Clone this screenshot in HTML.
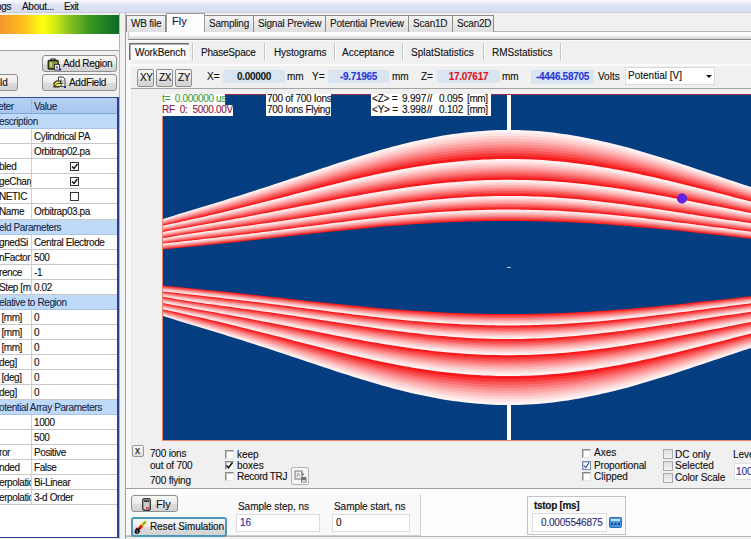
<!DOCTYPE html>
<html><head><meta charset="utf-8">
<style>
*{margin:0;padding:0;box-sizing:border-box}
html,body{width:751px;height:539px;overflow:hidden;background:#f0f0f0}
body{position:relative;font-family:"Liberation Sans",sans-serif;font-size:10px;color:#111;-webkit-text-stroke:0.12px}
.a{position:absolute}
.t{position:absolute;white-space:pre;line-height:12px}
.btn{position:absolute;border:1px solid #8e8f8f;border-radius:3px;background:linear-gradient(#f6f6f6 0%,#ebebeb 50%,#dddddd 51%,#d2d2d2 100%)}
.cb{position:absolute;width:9px;height:9px;border:1px solid #8a8a8a;border-right-color:#e6e6e6;border-bottom-color:#e6e6e6;background:#fff;box-shadow:inset 1px 1px 0 #c8c8c8}
.cbg{position:absolute;width:10px;height:10px;border:1px solid #a9a9a9;background:linear-gradient(#dedede,#f4f4f4)}
.fld{position:absolute;background:#d9e5f1;font-weight:bold;text-align:center;letter-spacing:-0.3px}
.tab{position:absolute;white-space:nowrap;top:15px;height:17px;border:1px solid #8c8c8c;border-bottom:none;background:linear-gradient(#f4f4f4,#dedede);padding-left:4px;line-height:15px;font-size:10px;letter-spacing:-0.2px;color:#1a1a1a}
.row{position:absolute;left:0;width:118px;height:15px;border-bottom:1px solid #d4d4d4;background:#fff}
.sec{background:#bcd8f8;border-bottom:1px solid #a8c4e4}
.c1{position:absolute;left:0;top:0;width:31px;height:14px;border-right:1px solid #d4d4d4;overflow:hidden}
.tx{position:absolute;white-space:pre;top:1px;line-height:12px;letter-spacing:-0.4px}
.sep{position:absolute;top:43px;width:2px;height:17px;border-left:1px solid #c4c4c4;border-right:1px solid #fff}
</style></head><body>

<!-- menu bar -->
<div class="a" style="left:0;top:0;width:751px;height:13px;background:linear-gradient(#f8f9fd 0px,#eef1f9 3px,#dde3f3 5px,#d9dff1 12px);border-bottom:1px solid #c9cdd9"></div>
<div class="t" style="left:-4px;top:1px;font-size:10px;letter-spacing:-0.3px;color:#111">ngs</div>
<div class="t" style="left:22px;top:1px;font-size:10px;letter-spacing:-0.3px;color:#111">About...</div>
<div class="t" style="left:64px;top:1px;font-size:10px;letter-spacing:-0.6px;color:#111">Exit</div>

<!-- left panel -->
<div class="a" style="left:0;top:13px;width:119px;height:526px;background:#f0f0f0"></div>
<div class="a" style="left:0;top:15px;width:119px;height:19px;background:linear-gradient(to right,#f5962a 0%,#fbc020 20%,#ffff10 36%,#d8ee10 45%,#88c420 58%,#3a9622 76%,#0a6a26 100%)"></div>
<div class="a" style="left:0;top:34px;width:119px;height:17px;background:#fff;border-bottom:1px solid #a0a0a0"></div>

<div class="btn" style="left:42px;top:55px;width:75px;height:17px"></div>
<svg class="a" style="left:47px;top:58px" width="15" height="13" viewBox="0 0 15 13"><path d="M4 2.5 V1 H8 V2.5" stroke="#222" stroke-width="1.2" fill="none"/><rect x="1.2" y="2.5" width="10" height="8.5" rx="1" fill="#8a9438" stroke="#1e2210" stroke-width="1.3"/><rect x="3" y="4" width="2" height="5" fill="#c8d060"/><rect x="7.5" y="6.5" width="5" height="5.5" fill="#f4f4fa" stroke="#333" stroke-width="0.9"/><rect x="8.8" y="8" width="2.4" height="2.6" fill="#8888b0"/><rect x="12" y="10.5" width="2.2" height="2" fill="#2a2ab8"/></svg>
<div class="t" style="left:63px;top:58px;letter-spacing:-0.3px;color:#111">Add Region</div>
<div class="btn" style="left:42px;top:74px;width:75px;height:17px"></div>
<svg class="a" style="left:53px;top:76px" width="14" height="12" viewBox="0 0 14 12"><path d="M5.5 1 H10 L12 3 V10.5 H5.5 Z" fill="#f4f4f4" stroke="#444" stroke-width="1"/><path d="M8 3 V8 M10 4 V8" stroke="#888" stroke-width="0.8"/><path d="M1 7 L3.5 5 H8 L6 11 H1 Z" fill="#ecec30" stroke="#222" stroke-width="1.1"/><path d="M1.5 10.5 L4 7.5 H9.5 L7 10.5 Z" fill="#f4f460" stroke="#222" stroke-width="0.8"/><rect x="11" y="10" width="2" height="2" fill="#2a2a90"/></svg>
<div class="t" style="left:69px;top:77px;letter-spacing:-0.3px;color:#111">AddField</div>
<div class="btn" style="left:-10px;top:74px;width:28px;height:17px"></div>
<div class="t" style="left:0px;top:77px;color:#111">ld</div>
<div class="a" style="left:0;top:52px;width:119px;height:45px;background:transparent"></div>

<!-- table -->
<div class="a" style="left:0;top:97px;width:119px;height:441px;background:#fff;border-top:1px solid #2c4f9c;border-right:2px solid #2e3f8e;border-bottom:1px solid #2e3f8e"></div>
<div id="tbl" class="a" style="left:0;top:98px;width:117px;height:439px;overflow:hidden">
<div class="a" style="left:0;top:0px;width:117px;height:16px;background:linear-gradient(#b6d0f2,#a9c6ee);border-bottom:1px solid #7ea4d4"></div>
<div class="a" style="left:31px;top:1px;width:1px;height:14px;background:#98b8e0"></div>
<div class="tx" style="left:-2px;top:3px;color:#1a2a4a">eter</div>
<div class="tx" style="left:34px;top:3px;color:#1a2a4a">Value</div>
<div class="a" style="left:0;top:16px;width:117px;height:15px;background:#bfdaf8;border-bottom:1px solid #a6c4e8"></div>
<div class="tx" style="left:-1px;top:18px;color:#1a2a4a">escription</div>
<div class="a" style="left:0;top:31px;width:117px;height:15px;background:#fff;border-bottom:1px solid #c8c8c8"></div>
<div class="a" style="left:31px;top:31px;width:1px;height:15px;background:#d0d0d0"></div>
<div class="tx" style="left:34px;top:33px">Cylindrical PA</div>
<div class="a" style="left:0;top:46px;width:117px;height:15px;background:#fff;border-bottom:1px solid #c8c8c8"></div>
<div class="a" style="left:31px;top:46px;width:1px;height:15px;background:#d0d0d0"></div>
<div class="tx" style="left:34px;top:48px">Orbitrap02.pa</div>
<div class="a" style="left:0;top:61px;width:117px;height:15px;background:#fff;border-bottom:1px solid #c8c8c8"></div>
<div class="a" style="left:31px;top:61px;width:1px;height:15px;background:#d0d0d0"></div>
<div class="a" style="left:0;top:61px;width:31px;height:15px;overflow:hidden"><div class="tx" style="left:-1px;top:2px">bled</div></div>
<div class="a" style="left:70px;top:64px;width:9px;height:9px;border:1.5px solid #333;background:#fff"></div>
<svg class="a" style="left:71px;top:65px" width="7" height="7"><path d="M1 3.5 L3 5.5 L6.5 1" stroke="#111" stroke-width="1.4" fill="none"/></svg>
<div class="a" style="left:0;top:76px;width:117px;height:15px;background:#fff;border-bottom:1px solid #c8c8c8"></div>
<div class="a" style="left:31px;top:76px;width:1px;height:15px;background:#d0d0d0"></div>
<div class="a" style="left:0;top:76px;width:31px;height:15px;overflow:hidden"><div class="tx" style="left:-1px;top:2px">geCharge</div></div>
<div class="a" style="left:70px;top:79px;width:9px;height:9px;border:1.5px solid #333;background:#fff"></div>
<svg class="a" style="left:71px;top:80px" width="7" height="7"><path d="M1 3.5 L3 5.5 L6.5 1" stroke="#111" stroke-width="1.4" fill="none"/></svg>
<div class="a" style="left:0;top:91px;width:117px;height:15px;background:#fff;border-bottom:1px solid #c8c8c8"></div>
<div class="a" style="left:31px;top:91px;width:1px;height:15px;background:#d0d0d0"></div>
<div class="a" style="left:0;top:91px;width:31px;height:15px;overflow:hidden"><div class="tx" style="left:-1px;top:2px">NETIC</div></div>
<div class="a" style="left:70px;top:94px;width:9px;height:9px;border:1.5px solid #333;background:#fff"></div>
<div class="a" style="left:0;top:106px;width:117px;height:16px;background:#fff;border-bottom:1px solid #c8c8c8"></div>
<div class="a" style="left:31px;top:106px;width:1px;height:16px;background:#d0d0d0"></div>
<div class="a" style="left:0;top:106px;width:31px;height:15px;overflow:hidden"><div class="tx" style="left:-1px;top:2px">Name</div></div>
<div class="tx" style="left:34px;top:108px">Orbitrap03.pa</div>
<div class="a" style="left:0;top:122px;width:117px;height:15px;background:#bfdaf8;border-bottom:1px solid #a6c4e8"></div>
<div class="tx" style="left:-1px;top:124px;color:#1a2a4a">eld Parameters</div>
<div class="a" style="left:0;top:137px;width:117px;height:15px;background:#fff;border-bottom:1px solid #c8c8c8"></div>
<div class="a" style="left:31px;top:137px;width:1px;height:15px;background:#d0d0d0"></div>
<div class="a" style="left:0;top:137px;width:31px;height:15px;overflow:hidden"><div class="tx" style="left:-1px;top:2px">gnedSi</div></div>
<div class="tx" style="left:34px;top:139px">Central Electrode</div>
<div class="a" style="left:0;top:152px;width:117px;height:15px;background:#fff;border-bottom:1px solid #c8c8c8"></div>
<div class="a" style="left:31px;top:152px;width:1px;height:15px;background:#d0d0d0"></div>
<div class="a" style="left:0;top:152px;width:31px;height:15px;overflow:hidden"><div class="tx" style="left:-1px;top:2px">nFactor</div></div>
<div class="tx" style="left:34px;top:154px">500</div>
<div class="a" style="left:0;top:167px;width:117px;height:15px;background:#fff;border-bottom:1px solid #c8c8c8"></div>
<div class="a" style="left:31px;top:167px;width:1px;height:15px;background:#d0d0d0"></div>
<div class="a" style="left:0;top:167px;width:31px;height:15px;overflow:hidden"><div class="tx" style="left:-1px;top:2px">rence</div></div>
<div class="tx" style="left:34px;top:169px">-1</div>
<div class="a" style="left:0;top:182px;width:117px;height:15px;background:#fff;border-bottom:1px solid #c8c8c8"></div>
<div class="a" style="left:31px;top:182px;width:1px;height:15px;background:#d0d0d0"></div>
<div class="a" style="left:0;top:182px;width:31px;height:15px;overflow:hidden"><div class="tx" style="left:-1px;top:2px">Step [m</div></div>
<div class="tx" style="left:34px;top:184px">0.02</div>
<div class="a" style="left:0;top:197px;width:117px;height:15px;background:#bfdaf8;border-bottom:1px solid #a6c4e8"></div>
<div class="tx" style="left:-1px;top:199px;color:#1a2a4a">elative to Region</div>
<div class="a" style="left:0;top:212px;width:117px;height:15px;background:#fff;border-bottom:1px solid #c8c8c8"></div>
<div class="a" style="left:31px;top:212px;width:1px;height:15px;background:#d0d0d0"></div>
<div class="a" style="left:0;top:212px;width:31px;height:15px;overflow:hidden"><div class="tx" style="left:-1px;top:2px"> [mm]</div></div>
<div class="tx" style="left:34px;top:214px">0</div>
<div class="a" style="left:0;top:227px;width:117px;height:15px;background:#fff;border-bottom:1px solid #c8c8c8"></div>
<div class="a" style="left:31px;top:227px;width:1px;height:15px;background:#d0d0d0"></div>
<div class="a" style="left:0;top:227px;width:31px;height:15px;overflow:hidden"><div class="tx" style="left:-1px;top:2px"> [mm]</div></div>
<div class="tx" style="left:34px;top:229px">0</div>
<div class="a" style="left:0;top:242px;width:117px;height:15px;background:#fff;border-bottom:1px solid #c8c8c8"></div>
<div class="a" style="left:31px;top:242px;width:1px;height:15px;background:#d0d0d0"></div>
<div class="a" style="left:0;top:242px;width:31px;height:15px;overflow:hidden"><div class="tx" style="left:-1px;top:2px"> [mm]</div></div>
<div class="tx" style="left:34px;top:244px">0</div>
<div class="a" style="left:0;top:257px;width:117px;height:15px;background:#fff;border-bottom:1px solid #c8c8c8"></div>
<div class="a" style="left:31px;top:257px;width:1px;height:15px;background:#d0d0d0"></div>
<div class="a" style="left:0;top:257px;width:31px;height:15px;overflow:hidden"><div class="tx" style="left:-1px;top:2px">deg]</div></div>
<div class="tx" style="left:34px;top:259px">0</div>
<div class="a" style="left:0;top:272px;width:117px;height:15px;background:#fff;border-bottom:1px solid #c8c8c8"></div>
<div class="a" style="left:31px;top:272px;width:1px;height:15px;background:#d0d0d0"></div>
<div class="a" style="left:0;top:272px;width:31px;height:15px;overflow:hidden"><div class="tx" style="left:-1px;top:2px"> [deg]</div></div>
<div class="tx" style="left:34px;top:274px">0</div>
<div class="a" style="left:0;top:287px;width:117px;height:15px;background:#fff;border-bottom:1px solid #c8c8c8"></div>
<div class="a" style="left:31px;top:287px;width:1px;height:15px;background:#d0d0d0"></div>
<div class="a" style="left:0;top:287px;width:31px;height:15px;overflow:hidden"><div class="tx" style="left:-1px;top:2px">deg]</div></div>
<div class="tx" style="left:34px;top:289px">0</div>
<div class="a" style="left:0;top:302px;width:117px;height:15px;background:#bfdaf8;border-bottom:1px solid #a6c4e8"></div>
<div class="tx" style="left:-1px;top:304px;color:#1a2a4a">otential Array Parameters</div>
<div class="a" style="left:0;top:317px;width:117px;height:15px;background:#fff;border-bottom:1px solid #c8c8c8"></div>
<div class="a" style="left:31px;top:317px;width:1px;height:15px;background:#d0d0d0"></div>
<div class="tx" style="left:34px;top:319px">1000</div>
<div class="a" style="left:0;top:332px;width:117px;height:15px;background:#fff;border-bottom:1px solid #c8c8c8"></div>
<div class="a" style="left:31px;top:332px;width:1px;height:15px;background:#d0d0d0"></div>
<div class="tx" style="left:34px;top:334px">500</div>
<div class="a" style="left:0;top:347px;width:117px;height:15px;background:#fff;border-bottom:1px solid #c8c8c8"></div>
<div class="a" style="left:31px;top:347px;width:1px;height:15px;background:#d0d0d0"></div>
<div class="a" style="left:0;top:347px;width:31px;height:15px;overflow:hidden"><div class="tx" style="left:-1px;top:2px">ror</div></div>
<div class="tx" style="left:34px;top:349px">Positive</div>
<div class="a" style="left:0;top:362px;width:117px;height:15px;background:#fff;border-bottom:1px solid #c8c8c8"></div>
<div class="a" style="left:31px;top:362px;width:1px;height:15px;background:#d0d0d0"></div>
<div class="a" style="left:0;top:362px;width:31px;height:15px;overflow:hidden"><div class="tx" style="left:-1px;top:2px">nded</div></div>
<div class="tx" style="left:34px;top:364px">False</div>
<div class="a" style="left:0;top:377px;width:117px;height:15px;background:#fff;border-bottom:1px solid #c8c8c8"></div>
<div class="a" style="left:31px;top:377px;width:1px;height:15px;background:#d0d0d0"></div>
<div class="a" style="left:0;top:377px;width:31px;height:15px;overflow:hidden"><div class="tx" style="left:-1px;top:2px">erpolation</div></div>
<div class="tx" style="left:34px;top:379px">Bi-Linear</div>
<div class="a" style="left:0;top:392px;width:117px;height:15px;background:#fff;border-bottom:1px solid #c8c8c8"></div>
<div class="a" style="left:31px;top:392px;width:1px;height:15px;background:#d0d0d0"></div>
<div class="a" style="left:0;top:392px;width:31px;height:15px;overflow:hidden"><div class="tx" style="left:-1px;top:2px">erpolation</div></div>
<div class="tx" style="left:34px;top:394px">3-d Order</div>
</div>

<!-- splitter -->
<div class="a" style="left:119px;top:13px;width:7px;height:526px;background:#f2f2f2;border-left:1px solid #b4b4b4;border-right:1px solid #a8a8a8"></div>

<!-- right panel -->
<!-- tabs -->
<div class="a" style="left:126px;top:13px;width:625px;height:526px;background:#f0f0f0"></div>
<div class="a" style="left:125px;top:31px;width:626px;height:508px;background:#f0f0f0;border-left:1px solid #a0a0a0;border-top:1px solid #b4b4b4"></div>
<div class="a" style="left:126px;top:41px;width:5px;height:447px;background:#f8f8f8"></div>
<div class="tab" style="left:126px;width:40px">WB file</div>
<div class="tab" style="left:204px;width:50px">Sampling</div>
<div class="tab" style="left:253px;width:73px">Signal Preview</div>
<div class="tab" style="left:325px;width:84px">Potential Preview</div>
<div class="tab" style="left:408px;width:45px">Scan1D</div>
<div class="tab" style="left:452px;width:42px">Scan2D</div>
<div class="a" style="left:166px;top:13px;width:39px;height:20px;background:#fdfdfd;border:1px solid #9c9c9c;border-bottom:none"></div>
<div class="t" style="left:172px;top:15px;font-size:11px;color:#1a1a3a">Fly</div>

<!-- inner strip -->
<div class="a" style="left:128px;top:32px;width:623px;height:8px;background:linear-gradient(#ffffff 0,#fdfdfd 40%,#d2d2d2 100%);border-bottom:1px solid #888;border-left:1px solid #c8c8c8"></div><div class="a" style="left:128px;top:40px;width:623px;height:1px;background:#fafafa"></div>

<!-- inner tabs -->
<div class="a" style="left:129px;top:43px;width:60px;height:17px;background:#fafafa;border-top:1px solid #6e6e6e;border-left:1px solid #6e6e6e;box-shadow:inset 1px 1px 0 #b0b0b0"></div>
<div class="t" style="left:135px;top:47px;letter-spacing:-0.1px">WorkBench</div>
<div class="sep" style="left:192px"></div>
<div class="t" style="left:201px;top:47px;letter-spacing:-0.2px">PhaseSpace</div>
<div class="sep" style="left:264px"></div>
<div class="t" style="left:274px;top:47px;letter-spacing:-0.1px">Hystograms</div>
<div class="sep" style="left:334px"></div>
<div class="t" style="left:342px;top:47px">Acceptance</div>
<div class="sep" style="left:402px"></div>
<div class="t" style="left:411px;top:47px">SplatStatistics</div>
<div class="sep" style="left:483px"></div>
<div class="t" style="left:492px;top:47px">RMSstatistics</div>
<div class="sep" style="left:560px"></div>
<div class="a" style="left:128px;top:64px;width:623px;height:2px;background:#fbfbfb"></div>

<!-- coordinates toolbar -->
<div class="btn" style="left:137px;top:69px;width:17px;height:18px;border-radius:2px"></div>
<div class="t" style="left:140px;top:72px;font-size:10px;letter-spacing:-0.4px;color:#111">XY</div>
<div class="btn" style="left:156px;top:69px;width:17px;height:18px;border-radius:2px"></div>
<div class="t" style="left:159px;top:72px;font-size:10px;letter-spacing:-0.4px;color:#111">ZX</div>
<div class="btn" style="left:175px;top:69px;width:17px;height:18px;border-radius:2px"></div>
<div class="t" style="left:178px;top:72px;font-size:10px;letter-spacing:-0.4px;color:#111">ZY</div>

<div class="t" style="left:207px;top:71px">X=</div>
<div class="fld" style="left:223px;top:70px;width:62px;height:13px;line-height:13px;color:#1a1a1a">0.00000</div>
<div class="t" style="left:287px;top:71px">mm</div>
<div class="t" style="left:312px;top:71px">Y=</div>
<div class="fld" style="left:328px;top:70px;width:61px;height:13px;line-height:13px;color:#2b38d8">-9.71965</div>
<div class="t" style="left:392px;top:71px">mm</div>
<div class="t" style="left:421px;top:71px">Z=</div>
<div class="fld" style="left:437px;top:70px;width:63px;height:13px;line-height:13px;color:#e0141e">17.07617</div>
<div class="t" style="left:502px;top:71px">mm</div>
<div class="fld" style="left:531px;top:70px;width:63px;height:14px;line-height:14px;color:#2b38d8">-4446.58705</div>
<div class="t" style="left:598px;top:71px">Volts</div>
<div class="a" style="left:625px;top:67px;width:90px;height:18px;background:#fff;border:1px solid #dadada"></div>
<div class="t" style="left:628px;top:70px">Potential [V]</div>
<div class="a" style="left:706px;top:75px;width:0;height:0;border-left:3px solid transparent;border-right:3px solid transparent;border-top:3px solid #111"></div>

<div class="a" style="left:131px;top:88px;width:620px;height:1px;background:#a4a4a4"></div>
<div class="a" style="left:131px;top:89px;width:620px;height:399px;background:#f0f0f0;border-left:1px solid #e6e6e6"></div>

<!-- plot -->
<svg class="a" style="left:0;top:0" width="751" height="539" viewBox="0 0 751 539">
<rect x="162" y="94" width="600" height="347" fill="#e8846c"/>
<rect x="163" y="95" width="600" height="345" fill="#043e80"/>
<rect x="162" y="94" width="600" height="1" fill="#9a2c48"/>
<path fill="#fff3f3" d="M163 219.0l5 -1.6l5 -1.5l5 -1.6l5 -1.5l5 -1.5l5 -1.5l5 -1.5l5 -1.5l5 -1.6l5 -1.5l5 -1.5l5 -1.5l5 -1.6l5 -1.5l5 -1.6l5 -1.6l5 -1.6l5 -1.6l5 -1.6l5 -1.6l5 -1.6l5 -1.7l5 -1.6l5 -1.7l5 -1.7l5 -1.6l5 -1.7l5 -1.7l5 -1.7l5 -1.6l5 -1.7l5 -1.7l5 -1.6l5 -1.7l5 -1.6l5 -1.6l5 -1.6l5 -1.6l5 -1.6l5 -1.5l5 -1.5l5 -1.5l5 -1.5l5 -1.4l5 -1.4l5 -1.3l5 -1.3l5 -1.3l5 -1.2l5 -1.2l5 -1.1l5 -1.1l5 -1.0l5 -1.0l5 -0.9l5 -0.9l5 -0.8l5 -0.8l5 -0.6l5 -0.7l5 -0.5l5 -0.5l5 -0.5l5 -0.3l5 -0.4l5 -0.2l5 -0.2l5 -0.1l5 0.0l5 0.0l5 0.1l5 0.2l5 0.2l5 0.3l5 0.3l5 0.5l5 0.5l5 0.5l5 0.6l5 0.7l5 0.7l5 0.8l5 0.9l5 0.9l5 1.0l5 1.0l5 1.0l5 1.2l5 1.1l5 1.2l5 1.3l5 1.3l5 1.3l5 1.4l5 1.4l5 1.5l5 1.5l5 1.5l5 1.5l5 1.6l5 1.5l5 1.6l5 1.7l5 1.6l5 1.6l5 1.7l5 1.7l5 1.6l5 1.7l5 1.7l5 1.7l5 1.6l5 1.7l5 1.7l5 1.6l5 1.7l5 1.6l5 1.7V269.5H163Z"/>
<path fill="#fee4e4" d="M163 219.7l5 -1.6l5 -1.5l5 -1.5l5 -1.4l5 -1.5l5 -1.5l5 -1.5l5 -1.4l5 -1.5l5 -1.5l5 -1.5l5 -1.5l5 -1.5l5 -1.5l5 -1.5l5 -1.6l5 -1.5l5 -1.6l5 -1.6l5 -1.6l5 -1.6l5 -1.6l5 -1.6l5 -1.6l5 -1.6l5 -1.7l5 -1.6l5 -1.7l5 -1.6l5 -1.6l5 -1.7l5 -1.6l5 -1.6l5 -1.6l5 -1.6l5 -1.6l5 -1.5l5 -1.6l5 -1.5l5 -1.5l5 -1.5l5 -1.4l5 -1.4l5 -1.4l5 -1.4l5 -1.3l5 -1.3l5 -1.2l5 -1.2l5 -1.1l5 -1.1l5 -1.1l5 -1.0l5 -0.9l5 -0.9l5 -0.9l5 -0.7l5 -0.8l5 -0.6l5 -0.6l5 -0.6l5 -0.5l5 -0.4l5 -0.4l5 -0.3l5 -0.2l5 -0.2l5 -0.1l5 0.0l5 0.0l5 0.1l5 0.2l5 0.2l5 0.3l5 0.3l5 0.4l5 0.5l5 0.5l5 0.6l5 0.7l5 0.7l5 0.8l5 0.8l5 0.9l5 0.9l5 1.0l5 1.1l5 1.0l5 1.2l5 1.2l5 1.2l5 1.3l5 1.3l5 1.3l5 1.4l5 1.4l5 1.4l5 1.5l5 1.5l5 1.5l5 1.5l5 1.6l5 1.6l5 1.6l5 1.6l5 1.6l5 1.6l5 1.6l5 1.7l5 1.6l5 1.7l5 1.6l5 1.6l5 1.7l5 1.6l5 1.6l5 1.6l5 1.6V269.5H163Z"/>
<path fill="#fed1d1" d="M163 220.3l5 -1.4l5 -1.5l5 -1.5l5 -1.4l5 -1.4l5 -1.5l5 -1.4l5 -1.4l5 -1.5l5 -1.4l5 -1.5l5 -1.4l5 -1.5l5 -1.5l5 -1.5l5 -1.5l5 -1.5l5 -1.5l5 -1.6l5 -1.5l5 -1.6l5 -1.6l5 -1.6l5 -1.5l5 -1.6l5 -1.6l5 -1.6l5 -1.6l5 -1.6l5 -1.6l5 -1.6l5 -1.6l5 -1.6l5 -1.5l5 -1.6l5 -1.5l5 -1.6l5 -1.5l5 -1.4l5 -1.5l5 -1.4l5 -1.4l5 -1.4l5 -1.4l5 -1.3l5 -1.2l5 -1.3l5 -1.2l5 -1.1l5 -1.2l5 -1.0l5 -1.0l5 -1.0l5 -0.9l5 -0.9l5 -0.8l5 -0.8l5 -0.7l5 -0.6l5 -0.6l5 -0.6l5 -0.4l5 -0.4l5 -0.4l5 -0.3l5 -0.2l5 -0.2l5 -0.1l5 0.0l5 0.0l5 0.1l5 0.2l5 0.2l5 0.2l5 0.4l5 0.4l5 0.4l5 0.6l5 0.5l5 0.7l5 0.7l5 0.7l5 0.8l5 0.9l5 0.9l5 1.0l5 1.0l5 1.0l5 1.1l5 1.2l5 1.2l5 1.2l5 1.3l5 1.3l5 1.3l5 1.4l5 1.4l5 1.4l5 1.5l5 1.4l5 1.5l5 1.6l5 1.5l5 1.5l5 1.6l5 1.6l5 1.6l5 1.6l5 1.6l5 1.6l5 1.6l5 1.6l5 1.5l5 1.6l5 1.6l5 1.6l5 1.6l5 1.5V269.5H163Z"/>
<path fill="#fdbbbc" d="M163 221.0l5 -1.4l5 -1.4l5 -1.4l5 -1.4l5 -1.4l5 -1.4l5 -1.4l5 -1.4l5 -1.4l5 -1.4l5 -1.5l5 -1.4l5 -1.4l5 -1.5l5 -1.4l5 -1.5l5 -1.5l5 -1.5l5 -1.5l5 -1.5l5 -1.5l5 -1.6l5 -1.5l5 -1.6l5 -1.5l5 -1.6l5 -1.5l5 -1.6l5 -1.6l5 -1.5l5 -1.6l5 -1.5l5 -1.5l5 -1.6l5 -1.5l5 -1.5l5 -1.5l5 -1.4l5 -1.5l5 -1.4l5 -1.4l5 -1.3l5 -1.4l5 -1.3l5 -1.3l5 -1.2l5 -1.2l5 -1.2l5 -1.1l5 -1.1l5 -1.0l5 -1.0l5 -0.9l5 -0.9l5 -0.9l5 -0.8l5 -0.7l5 -0.7l5 -0.6l5 -0.6l5 -0.5l5 -0.5l5 -0.4l5 -0.3l5 -0.3l5 -0.2l5 -0.2l5 -0.1l5 0.0l5 0.0l5 0.1l5 0.1l5 0.2l5 0.3l5 0.3l5 0.4l5 0.5l5 0.5l5 0.5l5 0.7l5 0.6l5 0.8l5 0.8l5 0.8l5 0.9l5 0.9l5 1.0l5 1.0l5 1.1l5 1.1l5 1.2l5 1.1l5 1.3l5 1.2l5 1.3l5 1.4l5 1.3l5 1.4l5 1.4l5 1.5l5 1.4l5 1.5l5 1.5l5 1.5l5 1.6l5 1.5l5 1.5l5 1.6l5 1.5l5 1.6l5 1.6l5 1.5l5 1.6l5 1.5l5 1.6l5 1.5l5 1.6l5 1.5V269.5H163Z"/>
<path fill="#fca4a4" d="M163 221.7l5 -1.4l5 -1.4l5 -1.3l5 -1.4l5 -1.3l5 -1.4l5 -1.3l5 -1.4l5 -1.4l5 -1.4l5 -1.3l5 -1.4l5 -1.4l5 -1.5l5 -1.4l5 -1.4l5 -1.5l5 -1.4l5 -1.5l5 -1.5l5 -1.5l5 -1.5l5 -1.5l5 -1.5l5 -1.5l5 -1.5l5 -1.5l5 -1.6l5 -1.5l5 -1.5l5 -1.5l5 -1.5l5 -1.5l5 -1.5l5 -1.5l5 -1.4l5 -1.5l5 -1.4l5 -1.4l5 -1.4l5 -1.3l5 -1.4l5 -1.3l5 -1.2l5 -1.3l5 -1.2l5 -1.1l5 -1.2l5 -1.1l5 -1.0l5 -1.0l5 -1.0l5 -0.9l5 -0.9l5 -0.8l5 -0.7l5 -0.8l5 -0.6l5 -0.6l5 -0.6l5 -0.5l5 -0.4l5 -0.4l5 -0.3l5 -0.3l5 -0.2l5 -0.2l5 -0.1l5 0.0l5 0.0l5 0.1l5 0.1l5 0.2l5 0.3l5 0.3l5 0.4l5 0.4l5 0.5l5 0.6l5 0.6l5 0.6l5 0.7l5 0.8l5 0.8l5 0.8l5 0.9l5 1.0l5 1.0l5 1.0l5 1.1l5 1.1l5 1.2l5 1.2l5 1.2l5 1.3l5 1.3l5 1.3l5 1.4l5 1.3l5 1.4l5 1.4l5 1.5l5 1.4l5 1.5l5 1.5l5 1.5l5 1.5l5 1.5l5 1.5l5 1.5l5 1.6l5 1.5l5 1.5l5 1.5l5 1.5l5 1.5l5 1.5l5 1.5V269.5H163Z"/>
<path fill="#fb8b8c" d="M163 222.4l5 -1.4l5 -1.3l5 -1.3l5 -1.3l5 -1.3l5 -1.4l5 -1.3l5 -1.3l5 -1.3l5 -1.4l5 -1.3l5 -1.4l5 -1.4l5 -1.3l5 -1.4l5 -1.4l5 -1.4l5 -1.5l5 -1.4l5 -1.5l5 -1.4l5 -1.5l5 -1.4l5 -1.5l5 -1.5l5 -1.5l5 -1.5l5 -1.4l5 -1.5l5 -1.5l5 -1.5l5 -1.4l5 -1.5l5 -1.4l5 -1.5l5 -1.4l5 -1.4l5 -1.4l5 -1.3l5 -1.4l5 -1.3l5 -1.3l5 -1.2l5 -1.3l5 -1.2l5 -1.1l5 -1.2l5 -1.1l5 -1.0l5 -1.0l5 -1.0l5 -0.9l5 -0.9l5 -0.9l5 -0.8l5 -0.7l5 -0.7l5 -0.6l5 -0.6l5 -0.6l5 -0.4l5 -0.5l5 -0.4l5 -0.3l5 -0.2l5 -0.2l5 -0.2l5 -0.1l5 0.0l5 0.0l5 0.1l5 0.1l5 0.2l5 0.3l5 0.3l5 0.3l5 0.5l5 0.4l5 0.6l5 0.5l5 0.7l5 0.7l5 0.7l5 0.8l5 0.8l5 0.9l5 0.9l5 1.0l5 1.0l5 1.0l5 1.1l5 1.1l5 1.2l5 1.2l5 1.2l5 1.3l5 1.3l5 1.3l5 1.3l5 1.4l5 1.3l5 1.4l5 1.5l5 1.4l5 1.4l5 1.5l5 1.4l5 1.5l5 1.5l5 1.5l5 1.5l5 1.4l5 1.5l5 1.5l5 1.5l5 1.4l5 1.5l5 1.5V269.5H163Z"/>
<path fill="#fa7071" d="M163 223.0l5 -1.3l5 -1.2l5 -1.3l5 -1.3l5 -1.2l5 -1.3l5 -1.3l5 -1.3l5 -1.3l5 -1.3l5 -1.3l5 -1.3l5 -1.4l5 -1.3l5 -1.4l5 -1.3l5 -1.4l5 -1.4l5 -1.4l5 -1.4l5 -1.4l5 -1.5l5 -1.4l5 -1.4l5 -1.5l5 -1.4l5 -1.5l5 -1.4l5 -1.4l5 -1.5l5 -1.4l5 -1.4l5 -1.4l5 -1.5l5 -1.3l5 -1.4l5 -1.4l5 -1.3l5 -1.3l5 -1.3l5 -1.3l5 -1.3l5 -1.2l5 -1.2l5 -1.2l5 -1.1l5 -1.1l5 -1.0l5 -1.1l5 -1.0l5 -0.9l5 -0.9l5 -0.9l5 -0.8l5 -0.7l5 -0.8l5 -0.6l5 -0.7l5 -0.5l5 -0.5l5 -0.5l5 -0.4l5 -0.4l5 -0.3l5 -0.3l5 -0.2l5 -0.1l5 -0.1l5 0.0l5 0.0l5 0.1l5 0.1l5 0.2l5 0.2l5 0.3l5 0.4l5 0.4l5 0.5l5 0.5l5 0.5l5 0.6l5 0.7l5 0.7l5 0.8l5 0.8l5 0.8l5 0.9l5 1.0l5 0.9l5 1.0l5 1.1l5 1.1l5 1.1l5 1.2l5 1.2l5 1.2l5 1.2l5 1.3l5 1.3l5 1.3l5 1.3l5 1.4l5 1.4l5 1.4l5 1.4l5 1.4l5 1.4l5 1.4l5 1.5l5 1.4l5 1.5l5 1.4l5 1.4l5 1.5l5 1.4l5 1.4l5 1.5l5 1.4V269.5H163Z"/>
<path fill="#f95456" d="M163 223.7l5 -1.2l5 -1.3l5 -1.2l5 -1.2l5 -1.2l5 -1.3l5 -1.2l5 -1.3l5 -1.2l5 -1.3l5 -1.3l5 -1.3l5 -1.3l5 -1.3l5 -1.3l5 -1.4l5 -1.3l5 -1.4l5 -1.3l5 -1.4l5 -1.4l5 -1.4l5 -1.4l5 -1.4l5 -1.4l5 -1.4l5 -1.4l5 -1.4l5 -1.4l5 -1.4l5 -1.4l5 -1.3l5 -1.4l5 -1.4l5 -1.3l5 -1.4l5 -1.3l5 -1.3l5 -1.3l5 -1.2l5 -1.3l5 -1.2l5 -1.2l5 -1.1l5 -1.2l5 -1.0l5 -1.1l5 -1.0l5 -1.0l5 -1.0l5 -0.9l5 -0.9l5 -0.8l5 -0.8l5 -0.7l5 -0.7l5 -0.7l5 -0.6l5 -0.5l5 -0.5l5 -0.5l5 -0.4l5 -0.3l5 -0.3l5 -0.3l5 -0.2l5 -0.1l5 -0.1l5 0.0l5 0.0l5 0.1l5 0.1l5 0.2l5 0.2l5 0.3l5 0.3l5 0.4l5 0.5l5 0.5l5 0.5l5 0.6l5 0.6l5 0.7l5 0.8l5 0.7l5 0.9l5 0.8l5 0.9l5 1.0l5 1.0l5 1.0l5 1.0l5 1.1l5 1.1l5 1.2l5 1.2l5 1.2l5 1.2l5 1.3l5 1.3l5 1.2l5 1.4l5 1.3l5 1.3l5 1.4l5 1.4l5 1.4l5 1.4l5 1.3l5 1.4l5 1.5l5 1.4l5 1.4l5 1.4l5 1.4l5 1.4l5 1.3l5 1.4V269.5H163Z"/>
<path fill="#f83739" d="M163 224.4l5 -1.2l5 -1.2l5 -1.2l5 -1.2l5 -1.2l5 -1.1l5 -1.3l5 -1.2l5 -1.2l5 -1.2l5 -1.3l5 -1.2l5 -1.3l5 -1.3l5 -1.3l5 -1.3l5 -1.3l5 -1.3l5 -1.3l5 -1.4l5 -1.3l5 -1.4l5 -1.3l5 -1.4l5 -1.3l5 -1.4l5 -1.4l5 -1.3l5 -1.4l5 -1.4l5 -1.3l5 -1.4l5 -1.3l5 -1.3l5 -1.3l5 -1.3l5 -1.3l5 -1.3l5 -1.2l5 -1.2l5 -1.2l5 -1.2l5 -1.1l5 -1.2l5 -1.0l5 -1.1l5 -1.0l5 -1.0l5 -1.0l5 -0.9l5 -0.9l5 -0.8l5 -0.8l5 -0.8l5 -0.7l5 -0.7l5 -0.6l5 -0.6l5 -0.5l5 -0.5l5 -0.4l5 -0.4l5 -0.4l5 -0.3l5 -0.2l5 -0.2l5 -0.1l5 -0.1l5 0.0l5 0.0l5 0.1l5 0.1l5 0.2l5 0.2l5 0.3l5 0.3l5 0.4l5 0.4l5 0.5l5 0.5l5 0.6l5 0.6l5 0.7l5 0.7l5 0.7l5 0.8l5 0.8l5 0.9l5 0.9l5 1.0l5 1.0l5 1.0l5 1.0l5 1.1l5 1.1l5 1.2l5 1.1l5 1.2l5 1.3l5 1.2l5 1.3l5 1.2l5 1.3l5 1.3l5 1.3l5 1.4l5 1.3l5 1.4l5 1.3l5 1.4l5 1.4l5 1.3l5 1.4l5 1.3l5 1.4l5 1.4l5 1.3l5 1.4V269.5H163Z"/>
<path fill="#f7191b" d="M163 225.0l5 -1.1l5 -1.1l5 -1.2l5 -1.1l5 -1.2l5 -1.1l5 -1.2l5 -1.2l5 -1.1l5 -1.2l5 -1.3l5 -1.2l5 -1.2l5 -1.3l5 -1.2l5 -1.3l5 -1.3l5 -1.2l5 -1.3l5 -1.3l5 -1.3l5 -1.4l5 -1.3l5 -1.3l5 -1.3l5 -1.4l5 -1.3l5 -1.3l5 -1.3l5 -1.3l5 -1.4l5 -1.3l5 -1.3l5 -1.2l5 -1.3l5 -1.3l5 -1.2l5 -1.2l5 -1.2l5 -1.2l5 -1.2l5 -1.1l5 -1.1l5 -1.1l5 -1.0l5 -1.1l5 -1.0l5 -0.9l5 -0.9l5 -0.9l5 -0.9l5 -0.8l5 -0.8l5 -0.7l5 -0.7l5 -0.6l5 -0.6l5 -0.6l5 -0.5l5 -0.5l5 -0.4l5 -0.4l5 -0.3l5 -0.3l5 -0.2l5 -0.2l5 -0.1l5 -0.1l5 0.0l5 0.0l5 0.1l5 0.1l5 0.2l5 0.2l5 0.2l5 0.4l5 0.3l5 0.4l5 0.5l5 0.5l5 0.5l5 0.6l5 0.7l5 0.7l5 0.7l5 0.7l5 0.9l5 0.8l5 0.9l5 0.9l5 0.9l5 1.0l5 1.0l5 1.1l5 1.1l5 1.1l5 1.1l5 1.2l5 1.1l5 1.2l5 1.3l5 1.2l5 1.2l5 1.3l5 1.3l5 1.3l5 1.3l5 1.3l5 1.3l5 1.3l5 1.3l5 1.4l5 1.3l5 1.3l5 1.4l5 1.3l5 1.3l5 1.3V269.5H163Z"/>
<path fill="#fff3f3" d="M163 225.7l5 -1.1l5 -1.1l5 -1.0l5 -1.2l5 -1.1l5 -1.1l5 -1.1l5 -1.1l5 -1.2l5 -1.2l5 -1.1l5 -1.2l5 -1.2l5 -1.2l5 -1.3l5 -1.2l5 -1.2l5 -1.3l5 -1.2l5 -1.3l5 -1.3l5 -1.3l5 -1.2l5 -1.3l5 -1.3l5 -1.3l5 -1.3l5 -1.3l5 -1.3l5 -1.2l5 -1.3l5 -1.3l5 -1.2l5 -1.3l5 -1.2l5 -1.2l5 -1.2l5 -1.2l5 -1.2l5 -1.1l5 -1.1l5 -1.1l5 -1.1l5 -1.0l5 -1.0l5 -1.0l5 -1.0l5 -0.9l5 -0.9l5 -0.9l5 -0.8l5 -0.8l5 -0.7l5 -0.7l5 -0.7l5 -0.6l5 -0.6l5 -0.5l5 -0.5l5 -0.5l5 -0.4l5 -0.3l5 -0.3l5 -0.3l5 -0.2l5 -0.2l5 -0.1l5 -0.1l5 0.0l5 0.0l5 0.1l5 0.1l5 0.1l5 0.2l5 0.3l5 0.3l5 0.4l5 0.4l5 0.4l5 0.5l5 0.5l5 0.6l5 0.6l5 0.7l5 0.7l5 0.7l5 0.8l5 0.8l5 0.8l5 0.9l5 0.9l5 1.0l5 1.0l5 1.0l5 1.0l5 1.1l5 1.1l5 1.1l5 1.1l5 1.2l5 1.2l5 1.1l5 1.3l5 1.2l5 1.2l5 1.3l5 1.2l5 1.3l5 1.3l5 1.3l5 1.2l5 1.3l5 1.3l5 1.3l5 1.3l5 1.3l5 1.3l5 1.2V269.5H163Z"/>
<path fill="#fee4e4" d="M163 226.3l5 -1.0l5 -1.1l5 -1.1l5 -1.1l5 -1.0l5 -1.1l5 -1.2l5 -1.1l5 -1.1l5 -1.1l5 -1.2l5 -1.1l5 -1.2l5 -1.2l5 -1.2l5 -1.2l5 -1.2l5 -1.2l5 -1.2l5 -1.3l5 -1.2l5 -1.3l5 -1.2l5 -1.3l5 -1.2l5 -1.3l5 -1.2l5 -1.3l5 -1.2l5 -1.3l5 -1.2l5 -1.3l5 -1.2l5 -1.2l5 -1.2l5 -1.2l5 -1.2l5 -1.1l5 -1.2l5 -1.1l5 -1.1l5 -1.0l5 -1.1l5 -1.0l5 -1.0l5 -1.0l5 -0.9l5 -0.9l5 -0.9l5 -0.8l5 -0.8l5 -0.8l5 -0.7l5 -0.7l5 -0.7l5 -0.6l5 -0.6l5 -0.5l5 -0.5l5 -0.4l5 -0.4l5 -0.4l5 -0.3l5 -0.2l5 -0.2l5 -0.2l5 -0.1l5 -0.1l5 0.0l5 0.0l5 0.0l5 0.2l5 0.1l5 0.2l5 0.3l5 0.3l5 0.3l5 0.4l5 0.4l5 0.5l5 0.5l5 0.6l5 0.6l5 0.6l5 0.7l5 0.7l5 0.8l5 0.8l5 0.8l5 0.9l5 0.9l5 0.9l5 1.0l5 1.0l5 1.0l5 1.0l5 1.1l5 1.1l5 1.1l5 1.1l5 1.2l5 1.2l5 1.2l5 1.2l5 1.2l5 1.2l5 1.2l5 1.3l5 1.2l5 1.3l5 1.2l5 1.3l5 1.2l5 1.3l5 1.2l5 1.3l5 1.2l5 1.3V269.5H163Z"/>
<path fill="#fed1d1" d="M163 227.0l5 -1.1l5 -1.0l5 -1.1l5 -1.1l5 -1.0l5 -1.1l5 -1.1l5 -1.1l5 -1.1l5 -1.1l5 -1.1l5 -1.1l5 -1.2l5 -1.1l5 -1.2l5 -1.2l5 -1.2l5 -1.1l5 -1.2l5 -1.2l5 -1.3l5 -1.2l5 -1.2l5 -1.2l5 -1.2l5 -1.3l5 -1.2l5 -1.2l5 -1.2l5 -1.3l5 -1.2l5 -1.2l5 -1.2l5 -1.1l5 -1.2l5 -1.2l5 -1.1l5 -1.2l5 -1.1l5 -1.1l5 -1.0l5 -1.1l5 -1.0l5 -1.0l5 -1.0l5 -0.9l5 -0.9l5 -0.9l5 -0.9l5 -0.8l5 -0.8l5 -0.7l5 -0.8l5 -0.6l5 -0.7l5 -0.6l5 -0.5l5 -0.6l5 -0.4l5 -0.5l5 -0.4l5 -0.3l5 -0.3l5 -0.3l5 -0.2l5 -0.1l5 -0.2l5 0.0l5 -0.1l5 0.1l5 0.0l5 0.1l5 0.2l5 0.2l5 0.2l5 0.3l5 0.4l5 0.4l5 0.4l5 0.4l5 0.6l5 0.5l5 0.6l5 0.6l5 0.7l5 0.7l5 0.7l5 0.8l5 0.8l5 0.9l5 0.9l5 0.9l5 0.9l5 1.0l5 1.0l5 1.0l5 1.1l5 1.0l5 1.1l5 1.1l5 1.1l5 1.2l5 1.1l5 1.2l5 1.2l5 1.2l5 1.2l5 1.2l5 1.2l5 1.2l5 1.3l5 1.2l5 1.2l5 1.2l5 1.3l5 1.2l5 1.2l5 1.2V269.5H163Z"/>
<path fill="#fdbbbc" d="M163 227.6l5 -1.0l5 -1.1l5 -1.0l5 -1.1l5 -1.0l5 -1.1l5 -1.0l5 -1.1l5 -1.1l5 -1.1l5 -1.1l5 -1.1l5 -1.1l5 -1.1l5 -1.1l5 -1.2l5 -1.1l5 -1.2l5 -1.1l5 -1.2l5 -1.2l5 -1.2l5 -1.2l5 -1.2l5 -1.1l5 -1.2l5 -1.2l5 -1.2l5 -1.2l5 -1.2l5 -1.2l5 -1.2l5 -1.1l5 -1.2l5 -1.1l5 -1.2l5 -1.1l5 -1.1l5 -1.1l5 -1.0l5 -1.1l5 -1.0l5 -1.0l5 -1.0l5 -1.0l5 -0.9l5 -0.9l5 -0.8l5 -0.9l5 -0.8l5 -0.8l5 -0.7l5 -0.7l5 -0.7l5 -0.6l5 -0.6l5 -0.5l5 -0.5l5 -0.5l5 -0.4l5 -0.4l5 -0.3l5 -0.3l5 -0.3l5 -0.2l5 -0.2l5 -0.1l5 0.0l5 -0.1l5 0.0l5 0.1l5 0.1l5 0.2l5 0.2l5 0.2l5 0.3l5 0.3l5 0.4l5 0.4l5 0.5l5 0.5l5 0.5l5 0.6l5 0.6l5 0.7l5 0.7l5 0.7l5 0.8l5 0.8l5 0.8l5 0.8l5 0.9l5 1.0l5 0.9l5 1.0l5 1.0l5 1.0l5 1.0l5 1.1l5 1.1l5 1.1l5 1.1l5 1.1l5 1.2l5 1.1l5 1.2l5 1.2l5 1.2l5 1.1l5 1.2l5 1.2l5 1.2l5 1.2l5 1.2l5 1.2l5 1.2l5 1.2l5 1.2V269.5H163Z"/>
<path fill="#fca4a4" d="M163 228.2l5 -1.0l5 -1.0l5 -1.0l5 -1.1l5 -1.0l5 -1.0l5 -1.1l5 -1.0l5 -1.1l5 -1.0l5 -1.1l5 -1.1l5 -1.1l5 -1.0l5 -1.1l5 -1.2l5 -1.1l5 -1.1l5 -1.1l5 -1.2l5 -1.1l5 -1.2l5 -1.1l5 -1.2l5 -1.2l5 -1.1l5 -1.2l5 -1.1l5 -1.2l5 -1.2l5 -1.1l5 -1.2l5 -1.1l5 -1.1l5 -1.2l5 -1.1l5 -1.0l5 -1.1l5 -1.1l5 -1.0l5 -1.1l5 -1.0l5 -0.9l5 -1.0l5 -0.9l5 -0.9l5 -0.9l5 -0.9l5 -0.8l5 -0.8l5 -0.7l5 -0.7l5 -0.7l5 -0.7l5 -0.6l5 -0.6l5 -0.5l5 -0.5l5 -0.5l5 -0.4l5 -0.3l5 -0.4l5 -0.3l5 -0.2l5 -0.2l5 -0.2l5 -0.1l5 -0.1l5 0.0l5 0.0l5 0.1l5 0.1l5 0.1l5 0.2l5 0.3l5 0.3l5 0.3l5 0.3l5 0.5l5 0.4l5 0.5l5 0.5l5 0.6l5 0.6l5 0.6l5 0.7l5 0.7l5 0.8l5 0.8l5 0.8l5 0.8l5 0.9l5 0.9l5 0.9l5 1.0l5 0.9l5 1.0l5 1.1l5 1.0l5 1.1l5 1.0l5 1.1l5 1.1l5 1.1l5 1.2l5 1.1l5 1.2l5 1.1l5 1.2l5 1.1l5 1.2l5 1.1l5 1.2l5 1.2l5 1.1l5 1.2l5 1.1l5 1.2V269.5H163Z"/>
<path fill="#fb8b8c" d="M163 228.9l5 -1.1l5 -1.0l5 -1.0l5 -1.0l5 -1.0l5 -1.0l5 -1.0l5 -1.0l5 -1.1l5 -1.0l5 -1.0l5 -1.1l5 -1.0l5 -1.1l5 -1.1l5 -1.0l5 -1.1l5 -1.1l5 -1.1l5 -1.1l5 -1.2l5 -1.1l5 -1.1l5 -1.1l5 -1.2l5 -1.1l5 -1.1l5 -1.2l5 -1.1l5 -1.1l5 -1.1l5 -1.2l5 -1.1l5 -1.1l5 -1.1l5 -1.0l5 -1.1l5 -1.1l5 -1.0l5 -1.0l5 -1.0l5 -1.0l5 -1.0l5 -0.9l5 -0.9l5 -0.9l5 -0.8l5 -0.9l5 -0.8l5 -0.7l5 -0.8l5 -0.7l5 -0.7l5 -0.6l5 -0.6l5 -0.6l5 -0.5l5 -0.5l5 -0.4l5 -0.4l5 -0.4l5 -0.3l5 -0.3l5 -0.2l5 -0.2l5 -0.2l5 -0.1l5 -0.1l5 0.0l5 0.0l5 0.1l5 0.1l5 0.1l5 0.2l5 0.2l5 0.3l5 0.3l5 0.4l5 0.4l5 0.4l5 0.5l5 0.5l5 0.6l5 0.6l5 0.6l5 0.7l5 0.7l5 0.7l5 0.8l5 0.8l5 0.8l5 0.8l5 0.9l5 0.9l5 1.0l5 0.9l5 1.0l5 1.0l5 1.0l5 1.0l5 1.1l5 1.0l5 1.1l5 1.1l5 1.1l5 1.1l5 1.1l5 1.2l5 1.1l5 1.1l5 1.1l5 1.2l5 1.1l5 1.1l5 1.2l5 1.1l5 1.1l5 1.1V269.5H163Z"/>
<path fill="#fa7071" d="M163 229.5l5 -1.0l5 -1.0l5 -1.0l5 -1.0l5 -1.0l5 -1.0l5 -1.0l5 -1.0l5 -1.0l5 -1.0l5 -1.0l5 -1.0l5 -1.0l5 -1.1l5 -1.0l5 -1.0l5 -1.1l5 -1.1l5 -1.0l5 -1.1l5 -1.1l5 -1.1l5 -1.1l5 -1.1l5 -1.1l5 -1.1l5 -1.1l5 -1.1l5 -1.1l5 -1.1l5 -1.1l5 -1.1l5 -1.0l5 -1.1l5 -1.1l5 -1.0l5 -1.1l5 -1.0l5 -1.0l5 -1.0l5 -1.0l5 -0.9l5 -1.0l5 -0.9l5 -0.9l5 -0.8l5 -0.9l5 -0.8l5 -0.8l5 -0.7l5 -0.7l5 -0.7l5 -0.7l5 -0.6l5 -0.6l5 -0.6l5 -0.5l5 -0.4l5 -0.5l5 -0.4l5 -0.3l5 -0.4l5 -0.2l5 -0.3l5 -0.2l5 -0.1l5 -0.1l5 -0.1l5 0.0l5 0.0l5 0.1l5 0.1l5 0.1l5 0.2l5 0.2l5 0.3l5 0.3l5 0.3l5 0.4l5 0.5l5 0.4l5 0.5l5 0.6l5 0.6l5 0.6l5 0.6l5 0.7l5 0.7l5 0.8l5 0.8l5 0.8l5 0.8l5 0.9l5 0.8l5 0.9l5 1.0l5 0.9l5 1.0l5 1.0l5 1.0l5 1.0l5 1.1l5 1.0l5 1.1l5 1.0l5 1.1l5 1.1l5 1.1l5 1.1l5 1.1l5 1.1l5 1.1l5 1.1l5 1.1l5 1.1l5 1.1l5 1.1l5 1.1V269.5H163Z"/>
<path fill="#f95456" d="M163 230.1l5 -1.0l5 -0.9l5 -1.0l5 -1.0l5 -1.0l5 -0.9l5 -1.0l5 -1.0l5 -0.9l5 -1.0l5 -1.0l5 -1.0l5 -1.0l5 -1.0l5 -1.0l5 -1.0l5 -1.1l5 -1.0l5 -1.0l5 -1.1l5 -1.0l5 -1.1l5 -1.1l5 -1.0l5 -1.1l5 -1.1l5 -1.0l5 -1.1l5 -1.1l5 -1.0l5 -1.1l5 -1.1l5 -1.0l5 -1.1l5 -1.0l5 -1.0l5 -1.0l5 -1.0l5 -1.0l5 -1.0l5 -0.9l5 -1.0l5 -0.9l5 -0.9l5 -0.8l5 -0.9l5 -0.8l5 -0.8l5 -0.8l5 -0.7l5 -0.7l5 -0.7l5 -0.6l5 -0.6l5 -0.6l5 -0.5l5 -0.5l5 -0.5l5 -0.4l5 -0.4l5 -0.4l5 -0.3l5 -0.3l5 -0.2l5 -0.2l5 -0.1l5 -0.1l5 -0.1l5 0.0l5 0.0l5 0.0l5 0.1l5 0.2l5 0.2l5 0.2l5 0.2l5 0.3l5 0.4l5 0.4l5 0.4l5 0.5l5 0.5l5 0.5l5 0.6l5 0.6l5 0.6l5 0.7l5 0.7l5 0.7l5 0.7l5 0.8l5 0.8l5 0.9l5 0.8l5 0.9l5 0.9l5 1.0l5 0.9l5 1.0l5 1.0l5 1.0l5 1.0l5 1.0l5 1.0l5 1.1l5 1.0l5 1.1l5 1.0l5 1.1l5 1.1l5 1.1l5 1.0l5 1.1l5 1.1l5 1.0l5 1.1l5 1.1l5 1.0V269.5H163Z"/>
<path fill="#f83739" d="M163 230.8l5 -1.0l5 -1.0l5 -0.9l5 -1.0l5 -1.0l5 -0.9l5 -0.9l5 -1.0l5 -0.9l5 -1.0l5 -0.9l5 -1.0l5 -1.0l5 -1.0l5 -0.9l5 -1.0l5 -1.0l5 -1.0l5 -1.0l5 -1.0l5 -1.1l5 -1.0l5 -1.0l5 -1.1l5 -1.0l5 -1.0l5 -1.1l5 -1.0l5 -1.1l5 -1.0l5 -1.0l5 -1.1l5 -1.0l5 -1.0l5 -1.0l5 -1.0l5 -1.0l5 -1.0l5 -0.9l5 -1.0l5 -0.9l5 -0.9l5 -0.9l5 -0.9l5 -0.8l5 -0.8l5 -0.8l5 -0.8l5 -0.8l5 -0.7l5 -0.7l5 -0.6l5 -0.7l5 -0.6l5 -0.5l5 -0.5l5 -0.5l5 -0.5l5 -0.4l5 -0.4l5 -0.3l5 -0.3l5 -0.3l5 -0.2l5 -0.2l5 -0.2l5 -0.1l5 0.0l5 -0.1l5 0.1l5 0.0l5 0.1l5 0.2l5 0.1l5 0.3l5 0.2l5 0.3l5 0.3l5 0.4l5 0.4l5 0.5l5 0.5l5 0.5l5 0.5l5 0.6l5 0.6l5 0.7l5 0.7l5 0.7l5 0.7l5 0.8l5 0.8l5 0.8l5 0.9l5 0.8l5 0.9l5 0.9l5 0.9l5 1.0l5 0.9l5 1.0l5 1.0l5 1.0l5 1.0l5 1.0l5 1.0l5 1.1l5 1.0l5 1.0l5 1.1l5 1.0l5 1.1l5 1.0l5 1.0l5 1.1l5 1.0l5 1.0l5 1.0V269.5H163Z"/>
<path fill="#f7191b" d="M163 231.4l5 -1.0l5 -0.9l5 -1.0l5 -0.9l5 -0.9l5 -1.0l5 -0.9l5 -0.9l5 -0.9l5 -1.0l5 -0.9l5 -0.9l5 -1.0l5 -0.9l5 -1.0l5 -0.9l5 -1.0l5 -1.0l5 -0.9l5 -1.0l5 -1.0l5 -1.0l5 -1.0l5 -1.0l5 -1.0l5 -1.0l5 -1.0l5 -1.0l5 -1.0l5 -1.1l5 -1.0l5 -1.0l5 -1.0l5 -0.9l5 -1.0l5 -1.0l5 -1.0l5 -0.9l5 -0.9l5 -1.0l5 -0.9l5 -0.8l5 -0.9l5 -0.9l5 -0.8l5 -0.8l5 -0.8l5 -0.7l5 -0.8l5 -0.7l5 -0.6l5 -0.7l5 -0.6l5 -0.6l5 -0.5l5 -0.5l5 -0.5l5 -0.5l5 -0.4l5 -0.3l5 -0.4l5 -0.3l5 -0.2l5 -0.3l5 -0.1l5 -0.2l5 -0.1l5 0.0l5 -0.1l5 0.0l5 0.1l5 0.1l5 0.1l5 0.2l5 0.2l5 0.3l5 0.3l5 0.3l5 0.4l5 0.4l5 0.4l5 0.5l5 0.5l5 0.5l5 0.6l5 0.6l5 0.6l5 0.7l5 0.7l5 0.7l5 0.8l5 0.8l5 0.8l5 0.8l5 0.8l5 0.9l5 0.9l5 0.9l5 0.9l5 0.9l5 1.0l5 0.9l5 1.0l5 1.0l5 1.0l5 0.9l5 1.0l5 1.0l5 1.1l5 1.0l5 1.0l5 1.0l5 1.0l5 1.0l5 1.0l5 1.0l5 1.0l5 1.0V269.5H163Z"/>
<path fill="#fff3f3" d="M163 232.0l5 -0.9l5 -1.0l5 -0.9l5 -0.9l5 -0.9l5 -0.9l5 -0.9l5 -0.9l5 -0.9l5 -0.9l5 -0.9l5 -0.9l5 -0.9l5 -1.0l5 -0.9l5 -0.9l5 -0.9l5 -1.0l5 -0.9l5 -1.0l5 -0.9l5 -1.0l5 -1.0l5 -0.9l5 -1.0l5 -1.0l5 -1.0l5 -1.0l5 -0.9l5 -1.0l5 -1.0l5 -1.0l5 -0.9l5 -1.0l5 -0.9l5 -1.0l5 -0.9l5 -0.9l5 -0.9l5 -0.9l5 -0.9l5 -0.9l5 -0.8l5 -0.9l5 -0.8l5 -0.7l5 -0.8l5 -0.7l5 -0.8l5 -0.6l5 -0.7l5 -0.6l5 -0.6l5 -0.6l5 -0.5l5 -0.5l5 -0.5l5 -0.4l5 -0.4l5 -0.4l5 -0.3l5 -0.3l5 -0.3l5 -0.2l5 -0.2l5 -0.1l5 -0.1l5 -0.1l5 0.0l5 0.0l5 0.1l5 0.1l5 0.1l5 0.2l5 0.2l5 0.2l5 0.3l5 0.3l5 0.4l5 0.4l5 0.4l5 0.5l5 0.5l5 0.5l5 0.6l5 0.6l5 0.6l5 0.6l5 0.7l5 0.7l5 0.7l5 0.8l5 0.8l5 0.8l5 0.8l5 0.8l5 0.9l5 0.9l5 0.9l5 0.9l5 0.9l5 0.9l5 1.0l5 0.9l5 1.0l5 1.0l5 0.9l5 1.0l5 1.0l5 1.0l5 0.9l5 1.0l5 1.0l5 1.0l5 0.9l5 1.0l5 1.0l5 0.9V269.5H163Z"/>
<path fill="#fee4e4" d="M163 232.6l5 -0.9l5 -0.9l5 -1.0l5 -0.9l5 -0.9l5 -0.8l5 -0.9l5 -0.9l5 -0.9l5 -0.9l5 -0.9l5 -0.8l5 -0.9l5 -0.9l5 -0.9l5 -0.9l5 -0.9l5 -0.9l5 -1.0l5 -0.9l5 -0.9l5 -1.0l5 -0.9l5 -0.9l5 -1.0l5 -0.9l5 -1.0l5 -1.0l5 -0.9l5 -1.0l5 -0.9l5 -1.0l5 -0.9l5 -1.0l5 -0.9l5 -0.9l5 -0.9l5 -0.9l5 -0.9l5 -0.9l5 -0.9l5 -0.8l5 -0.9l5 -0.8l5 -0.8l5 -0.7l5 -0.8l5 -0.7l5 -0.7l5 -0.7l5 -0.6l5 -0.7l5 -0.6l5 -0.5l5 -0.5l5 -0.5l5 -0.5l5 -0.4l5 -0.4l5 -0.4l5 -0.3l5 -0.3l5 -0.3l5 -0.2l5 -0.1l5 -0.2l5 -0.1l5 0.0l5 -0.1l5 0.0l5 0.1l5 0.1l5 0.1l5 0.2l5 0.2l5 0.2l5 0.3l5 0.3l5 0.4l5 0.4l5 0.4l5 0.5l5 0.5l5 0.5l5 0.5l5 0.6l5 0.6l5 0.7l5 0.6l5 0.7l5 0.8l5 0.7l5 0.8l5 0.8l5 0.8l5 0.8l5 0.9l5 0.8l5 0.9l5 0.9l5 0.9l5 0.9l5 0.9l5 1.0l5 0.9l5 0.9l5 1.0l5 0.9l5 1.0l5 1.0l5 0.9l5 1.0l5 0.9l5 1.0l5 0.9l5 1.0l5 0.9l5 0.9V269.5H163Z"/>
<path fill="#fed1d1" d="M163 233.3l5 -1.0l5 -0.9l5 -0.9l5 -0.9l5 -0.9l5 -0.9l5 -0.8l5 -0.9l5 -0.9l5 -0.8l5 -0.9l5 -0.8l5 -0.9l5 -0.9l5 -0.8l5 -0.9l5 -0.9l5 -0.9l5 -0.9l5 -0.9l5 -0.9l5 -0.9l5 -0.9l5 -0.9l5 -1.0l5 -0.9l5 -0.9l5 -1.0l5 -0.9l5 -0.9l5 -1.0l5 -0.9l5 -0.9l5 -0.9l5 -0.9l5 -1.0l5 -0.9l5 -0.8l5 -0.9l5 -0.9l5 -0.8l5 -0.9l5 -0.8l5 -0.8l5 -0.8l5 -0.7l5 -0.8l5 -0.7l5 -0.7l5 -0.7l5 -0.6l5 -0.6l5 -0.6l5 -0.5l5 -0.6l5 -0.5l5 -0.4l5 -0.4l5 -0.4l5 -0.4l5 -0.3l5 -0.3l5 -0.2l5 -0.3l5 -0.1l5 -0.2l5 -0.1l5 0.0l5 -0.1l5 0.1l5 0.0l5 0.1l5 0.1l5 0.2l5 0.2l5 0.2l5 0.3l5 0.3l5 0.4l5 0.4l5 0.4l5 0.4l5 0.5l5 0.5l5 0.6l5 0.6l5 0.6l5 0.6l5 0.7l5 0.7l5 0.7l5 0.7l5 0.8l5 0.7l5 0.8l5 0.9l5 0.8l5 0.8l5 0.9l5 0.9l5 0.9l5 0.9l5 0.9l5 0.9l5 0.9l5 0.9l5 1.0l5 0.9l5 0.9l5 1.0l5 0.9l5 0.9l5 0.9l5 1.0l5 0.9l5 0.9l5 0.9l5 0.9V269.5H163Z"/>
<path fill="#fdbbbc" d="M163 233.9l5 -0.9l5 -1.0l5 -0.9l5 -0.9l5 -0.8l5 -0.9l5 -0.8l5 -0.9l5 -0.8l5 -0.9l5 -0.8l5 -0.8l5 -0.9l5 -0.8l5 -0.9l5 -0.8l5 -0.9l5 -0.8l5 -0.9l5 -0.9l5 -0.9l5 -0.9l5 -0.8l5 -0.9l5 -0.9l5 -0.9l5 -1.0l5 -0.9l5 -0.9l5 -0.9l5 -0.9l5 -0.9l5 -0.9l5 -0.9l5 -0.9l5 -0.9l5 -0.9l5 -0.9l5 -0.8l5 -0.9l5 -0.8l5 -0.8l5 -0.8l5 -0.8l5 -0.8l5 -0.7l5 -0.8l5 -0.7l5 -0.7l5 -0.6l5 -0.6l5 -0.7l5 -0.5l5 -0.6l5 -0.5l5 -0.5l5 -0.4l5 -0.5l5 -0.3l5 -0.4l5 -0.3l5 -0.3l5 -0.2l5 -0.3l5 -0.1l5 -0.2l5 -0.1l5 0.0l5 0.0l5 0.0l5 0.0l5 0.1l5 0.1l5 0.2l5 0.2l5 0.3l5 0.2l5 0.3l5 0.4l5 0.4l5 0.4l5 0.4l5 0.5l5 0.5l5 0.6l5 0.5l5 0.6l5 0.7l5 0.6l5 0.7l5 0.7l5 0.7l5 0.8l5 0.7l5 0.8l5 0.8l5 0.8l5 0.9l5 0.8l5 0.9l5 0.8l5 0.9l5 0.9l5 0.9l5 0.9l5 0.9l5 0.9l5 0.9l5 0.9l5 1.0l5 0.9l5 0.9l5 0.9l5 0.9l5 0.9l5 0.9l5 0.9l5 0.8V269.5H163Z"/>
<path fill="#fca4a4" d="M163 234.5l5 -0.9l5 -0.9l5 -0.9l5 -0.9l5 -0.9l5 -0.8l5 -0.9l5 -0.8l5 -0.8l5 -0.8l5 -0.8l5 -0.8l5 -0.9l5 -0.8l5 -0.8l5 -0.8l5 -0.9l5 -0.8l5 -0.8l5 -0.9l5 -0.8l5 -0.9l5 -0.9l5 -0.8l5 -0.9l5 -0.9l5 -0.9l5 -0.9l5 -0.9l5 -0.8l5 -0.9l5 -0.9l5 -0.9l5 -0.9l5 -0.9l5 -0.8l5 -0.9l5 -0.9l5 -0.8l5 -0.8l5 -0.9l5 -0.8l5 -0.8l5 -0.7l5 -0.8l5 -0.7l5 -0.8l5 -0.7l5 -0.6l5 -0.7l5 -0.6l5 -0.6l5 -0.6l5 -0.5l5 -0.5l5 -0.5l5 -0.4l5 -0.5l5 -0.3l5 -0.4l5 -0.3l5 -0.3l5 -0.2l5 -0.2l5 -0.2l5 -0.1l5 -0.1l5 -0.1l5 0.0l5 0.0l5 0.0l5 0.1l5 0.2l5 0.1l5 0.2l5 0.3l5 0.2l5 0.3l5 0.4l5 0.4l5 0.4l5 0.4l5 0.5l5 0.5l5 0.5l5 0.6l5 0.6l5 0.6l5 0.6l5 0.7l5 0.7l5 0.7l5 0.8l5 0.7l5 0.8l5 0.8l5 0.8l5 0.8l5 0.8l5 0.9l5 0.8l5 0.9l5 0.9l5 0.8l5 0.9l5 0.9l5 0.9l5 0.9l5 0.9l5 0.9l5 0.8l5 0.9l5 0.9l5 0.9l5 0.9l5 0.8l5 0.9l5 0.8V269.5H163Z"/>
<path fill="#fb8b8c" d="M163 235.2l5 -1.0l5 -0.9l5 -0.9l5 -0.9l5 -0.8l5 -0.8l5 -0.9l5 -0.8l5 -0.8l5 -0.8l5 -0.8l5 -0.7l5 -0.8l5 -0.8l5 -0.8l5 -0.8l5 -0.8l5 -0.8l5 -0.9l5 -0.8l5 -0.8l5 -0.9l5 -0.8l5 -0.8l5 -0.9l5 -0.8l5 -0.9l5 -0.9l5 -0.8l5 -0.9l5 -0.9l5 -0.8l5 -0.9l5 -0.9l5 -0.8l5 -0.9l5 -0.8l5 -0.9l5 -0.8l5 -0.8l5 -0.8l5 -0.8l5 -0.8l5 -0.8l5 -0.7l5 -0.7l5 -0.7l5 -0.7l5 -0.7l5 -0.6l5 -0.6l5 -0.6l5 -0.6l5 -0.5l5 -0.5l5 -0.5l5 -0.5l5 -0.4l5 -0.3l5 -0.4l5 -0.3l5 -0.3l5 -0.2l5 -0.2l5 -0.2l5 -0.1l5 -0.1l5 -0.1l5 0.0l5 0.0l5 0.1l5 0.0l5 0.2l5 0.1l5 0.2l5 0.3l5 0.2l5 0.3l5 0.4l5 0.4l5 0.4l5 0.4l5 0.5l5 0.5l5 0.5l5 0.5l5 0.6l5 0.6l5 0.7l5 0.6l5 0.7l5 0.7l5 0.7l5 0.8l5 0.8l5 0.7l5 0.8l5 0.8l5 0.8l5 0.9l5 0.8l5 0.9l5 0.8l5 0.9l5 0.8l5 0.9l5 0.9l5 0.8l5 0.9l5 0.9l5 0.8l5 0.9l5 0.8l5 0.9l5 0.8l5 0.9l5 0.8l5 0.8V269.5H163Z"/>
<path fill="#fa7071" d="M163 235.8l5 -1.0l5 -0.9l5 -0.9l5 -0.8l5 -0.8l5 -0.9l5 -0.8l5 -0.8l5 -0.7l5 -0.8l5 -0.8l5 -0.8l5 -0.7l5 -0.8l5 -0.8l5 -0.7l5 -0.8l5 -0.8l5 -0.8l5 -0.8l5 -0.8l5 -0.8l5 -0.8l5 -0.8l5 -0.9l5 -0.8l5 -0.8l5 -0.9l5 -0.8l5 -0.9l5 -0.8l5 -0.9l5 -0.8l5 -0.8l5 -0.9l5 -0.8l5 -0.8l5 -0.9l5 -0.8l5 -0.8l5 -0.8l5 -0.8l5 -0.7l5 -0.8l5 -0.7l5 -0.7l5 -0.7l5 -0.7l5 -0.7l5 -0.6l5 -0.6l5 -0.6l5 -0.5l5 -0.6l5 -0.5l5 -0.4l5 -0.5l5 -0.4l5 -0.4l5 -0.3l5 -0.3l5 -0.3l5 -0.2l5 -0.2l5 -0.2l5 -0.1l5 -0.1l5 -0.1l5 0.0l5 0.0l5 0.1l5 0.1l5 0.1l5 0.1l5 0.2l5 0.3l5 0.2l5 0.3l5 0.4l5 0.3l5 0.4l5 0.5l5 0.4l5 0.5l5 0.6l5 0.5l5 0.6l5 0.6l5 0.6l5 0.7l5 0.6l5 0.7l5 0.7l5 0.8l5 0.7l5 0.8l5 0.8l5 0.8l5 0.8l5 0.8l5 0.8l5 0.8l5 0.9l5 0.8l5 0.8l5 0.9l5 0.8l5 0.9l5 0.8l5 0.9l5 0.8l5 0.8l5 0.9l5 0.8l5 0.8l5 0.8l5 0.8l5 0.9V269.5H163Z"/>
<path fill="#f95456" d="M163 236.4l5 -0.9l5 -0.9l5 -0.9l5 -0.9l5 -0.8l5 -0.8l5 -0.8l5 -0.7l5 -0.8l5 -0.8l5 -0.7l5 -0.8l5 -0.7l5 -0.7l5 -0.8l5 -0.7l5 -0.8l5 -0.8l5 -0.7l5 -0.8l5 -0.8l5 -0.7l5 -0.8l5 -0.8l5 -0.8l5 -0.8l5 -0.9l5 -0.8l5 -0.8l5 -0.8l5 -0.8l5 -0.9l5 -0.8l5 -0.8l5 -0.8l5 -0.9l5 -0.8l5 -0.8l5 -0.8l5 -0.8l5 -0.7l5 -0.8l5 -0.8l5 -0.7l5 -0.7l5 -0.7l5 -0.7l5 -0.7l5 -0.6l5 -0.7l5 -0.6l5 -0.5l5 -0.6l5 -0.5l5 -0.5l5 -0.4l5 -0.5l5 -0.4l5 -0.4l5 -0.3l5 -0.3l5 -0.3l5 -0.2l5 -0.2l5 -0.2l5 -0.1l5 -0.1l5 -0.1l5 0.0l5 0.0l5 0.1l5 0.1l5 0.1l5 0.2l5 0.2l5 0.2l5 0.2l5 0.3l5 0.4l5 0.3l5 0.4l5 0.5l5 0.4l5 0.5l5 0.5l5 0.6l5 0.5l5 0.6l5 0.6l5 0.7l5 0.6l5 0.7l5 0.7l5 0.8l5 0.7l5 0.7l5 0.8l5 0.8l5 0.8l5 0.8l5 0.8l5 0.8l5 0.8l5 0.8l5 0.8l5 0.9l5 0.8l5 0.8l5 0.8l5 0.9l5 0.8l5 0.8l5 0.8l5 0.8l5 0.8l5 0.8l5 0.8l5 0.8V269.5H163Z"/>
<path fill="#f83739" d="M163 237.1l5 -1.0l5 -0.9l5 -0.9l5 -0.8l5 -0.8l5 -0.8l5 -0.8l5 -0.7l5 -0.8l5 -0.7l5 -0.7l5 -0.8l5 -0.7l5 -0.7l5 -0.7l5 -0.7l5 -0.8l5 -0.7l5 -0.7l5 -0.8l5 -0.7l5 -0.8l5 -0.8l5 -0.7l5 -0.8l5 -0.8l5 -0.8l5 -0.8l5 -0.8l5 -0.8l5 -0.8l5 -0.8l5 -0.8l5 -0.8l5 -0.8l5 -0.8l5 -0.8l5 -0.8l5 -0.8l5 -0.7l5 -0.8l5 -0.8l5 -0.7l5 -0.7l5 -0.7l5 -0.7l5 -0.7l5 -0.7l5 -0.6l5 -0.6l5 -0.6l5 -0.6l5 -0.5l5 -0.5l5 -0.5l5 -0.5l5 -0.4l5 -0.4l5 -0.4l5 -0.3l5 -0.3l5 -0.3l5 -0.2l5 -0.2l5 -0.2l5 -0.1l5 -0.1l5 0.0l5 -0.1l5 0.1l5 0.0l5 0.1l5 0.1l5 0.2l5 0.2l5 0.2l5 0.2l5 0.3l5 0.4l5 0.3l5 0.4l5 0.4l5 0.5l5 0.5l5 0.5l5 0.5l5 0.6l5 0.6l5 0.6l5 0.6l5 0.7l5 0.6l5 0.7l5 0.7l5 0.8l5 0.7l5 0.7l5 0.8l5 0.8l5 0.8l5 0.7l5 0.8l5 0.8l5 0.8l5 0.8l5 0.9l5 0.8l5 0.8l5 0.8l5 0.8l5 0.8l5 0.7l5 0.8l5 0.8l5 0.8l5 0.8l5 0.7l5 0.8V269.5H163Z"/>
<path fill="#f7191b" d="M163 237.7l5 -1.0l5 -0.9l5 -0.8l5 -0.9l5 -0.8l5 -0.7l5 -0.8l5 -0.7l5 -0.7l5 -0.8l5 -0.7l5 -0.7l5 -0.7l5 -0.7l5 -0.6l5 -0.7l5 -0.8l5 -0.7l5 -0.7l5 -0.7l5 -0.7l5 -0.7l5 -0.8l5 -0.7l5 -0.8l5 -0.7l5 -0.8l5 -0.8l5 -0.8l5 -0.7l5 -0.8l5 -0.8l5 -0.8l5 -0.8l5 -0.8l5 -0.7l5 -0.8l5 -0.8l5 -0.8l5 -0.7l5 -0.8l5 -0.7l5 -0.7l5 -0.7l5 -0.7l5 -0.7l5 -0.7l5 -0.6l5 -0.7l5 -0.6l5 -0.6l5 -0.5l5 -0.5l5 -0.6l5 -0.4l5 -0.5l5 -0.4l5 -0.4l5 -0.4l5 -0.3l5 -0.3l5 -0.3l5 -0.2l5 -0.2l5 -0.1l5 -0.2l5 -0.1l5 0.0l5 0.0l5 0.0l5 0.0l5 0.1l5 0.1l5 0.2l5 0.2l5 0.2l5 0.3l5 0.2l5 0.4l5 0.3l5 0.4l5 0.4l5 0.5l5 0.4l5 0.6l5 0.5l5 0.5l5 0.6l5 0.6l5 0.6l5 0.7l5 0.6l5 0.7l5 0.7l5 0.7l5 0.8l5 0.7l5 0.7l5 0.8l5 0.8l5 0.7l5 0.8l5 0.8l5 0.8l5 0.8l5 0.7l5 0.8l5 0.8l5 0.8l5 0.8l5 0.7l5 0.8l5 0.8l5 0.7l5 0.8l5 0.7l5 0.7l5 0.8V269.5H163Z"/>
<path fill="#fff3f3" d="M163 238.3l5 -0.9l5 -0.9l5 -0.9l5 -0.8l5 -0.8l5 -0.8l5 -0.7l5 -0.7l5 -0.7l5 -0.7l5 -0.7l5 -0.7l5 -0.6l5 -0.7l5 -0.7l5 -0.7l5 -0.6l5 -0.7l5 -0.7l5 -0.7l5 -0.7l5 -0.7l5 -0.7l5 -0.7l5 -0.8l5 -0.7l5 -0.7l5 -0.8l5 -0.7l5 -0.8l5 -0.8l5 -0.7l5 -0.8l5 -0.7l5 -0.8l5 -0.8l5 -0.7l5 -0.8l5 -0.7l5 -0.8l5 -0.7l5 -0.7l5 -0.8l5 -0.7l5 -0.7l5 -0.6l5 -0.7l5 -0.6l5 -0.6l5 -0.6l5 -0.6l5 -0.6l5 -0.5l5 -0.5l5 -0.5l5 -0.4l5 -0.4l5 -0.4l5 -0.4l5 -0.3l5 -0.3l5 -0.3l5 -0.2l5 -0.2l5 -0.1l5 -0.2l5 -0.1l5 0.0l5 0.0l5 0.0l5 0.0l5 0.1l5 0.1l5 0.2l5 0.2l5 0.2l5 0.3l5 0.2l5 0.4l5 0.3l5 0.4l5 0.4l5 0.5l5 0.4l5 0.5l5 0.5l5 0.6l5 0.6l5 0.5l5 0.7l5 0.6l5 0.6l5 0.7l5 0.7l5 0.7l5 0.7l5 0.7l5 0.8l5 0.7l5 0.8l5 0.7l5 0.8l5 0.7l5 0.8l5 0.8l5 0.7l5 0.8l5 0.8l5 0.7l5 0.8l5 0.7l5 0.8l5 0.7l5 0.7l5 0.7l5 0.8l5 0.7l5 0.7V269.5H163Z"/>
<path fill="#fee4e4" d="M163 238.8l5 -0.9l5 -0.8l5 -0.9l5 -0.8l5 -0.7l5 -0.8l5 -0.7l5 -0.7l5 -0.7l5 -0.6l5 -0.7l5 -0.7l5 -0.6l5 -0.7l5 -0.7l5 -0.6l5 -0.7l5 -0.7l5 -0.7l5 -0.6l5 -0.7l5 -0.7l5 -0.7l5 -0.8l5 -0.7l5 -0.7l5 -0.7l5 -0.8l5 -0.7l5 -0.8l5 -0.7l5 -0.8l5 -0.7l5 -0.8l5 -0.7l5 -0.8l5 -0.7l5 -0.8l5 -0.7l5 -0.7l5 -0.7l5 -0.7l5 -0.7l5 -0.7l5 -0.7l5 -0.7l5 -0.6l5 -0.6l5 -0.6l5 -0.6l5 -0.6l5 -0.5l5 -0.5l5 -0.5l5 -0.5l5 -0.4l5 -0.4l5 -0.4l5 -0.4l5 -0.3l5 -0.3l5 -0.2l5 -0.2l5 -0.2l5 -0.2l5 -0.1l5 -0.1l5 0.0l5 -0.1l5 0.0l5 0.1l5 0.1l5 0.1l5 0.1l5 0.2l5 0.2l5 0.3l5 0.3l5 0.3l5 0.3l5 0.4l5 0.4l5 0.4l5 0.5l5 0.5l5 0.5l5 0.5l5 0.6l5 0.5l5 0.6l5 0.7l5 0.6l5 0.7l5 0.6l5 0.7l5 0.7l5 0.7l5 0.7l5 0.8l5 0.7l5 0.7l5 0.8l5 0.7l5 0.8l5 0.7l5 0.8l5 0.7l5 0.8l5 0.7l5 0.8l5 0.7l5 0.8l5 0.7l5 0.7l5 0.7l5 0.7l5 0.7l5 0.7V269.5H163Z"/>
<path fill="#fed1d1" d="M163 239.4l5 -0.9l5 -0.8l5 -0.8l5 -0.8l5 -0.7l5 -0.8l5 -0.7l5 -0.6l5 -0.7l5 -0.7l5 -0.6l5 -0.7l5 -0.7l5 -0.6l5 -0.7l5 -0.6l5 -0.7l5 -0.6l5 -0.7l5 -0.7l5 -0.7l5 -0.7l5 -0.7l5 -0.7l5 -0.7l5 -0.7l5 -0.7l5 -0.7l5 -0.8l5 -0.7l5 -0.8l5 -0.7l5 -0.7l5 -0.8l5 -0.7l5 -0.8l5 -0.7l5 -0.7l5 -0.7l5 -0.7l5 -0.8l5 -0.6l5 -0.7l5 -0.7l5 -0.7l5 -0.6l5 -0.6l5 -0.6l5 -0.6l5 -0.6l5 -0.5l5 -0.6l5 -0.5l5 -0.5l5 -0.4l5 -0.4l5 -0.4l5 -0.4l5 -0.3l5 -0.3l5 -0.3l5 -0.3l5 -0.2l5 -0.2l5 -0.1l5 -0.2l5 0.0l5 -0.1l5 0.0l5 0.0l5 0.0l5 0.1l5 0.1l5 0.2l5 0.2l5 0.2l5 0.2l5 0.3l5 0.3l5 0.3l5 0.4l5 0.4l5 0.4l5 0.5l5 0.4l5 0.5l5 0.5l5 0.6l5 0.6l5 0.5l5 0.6l5 0.7l5 0.6l5 0.7l5 0.6l5 0.7l5 0.7l5 0.7l5 0.7l5 0.7l5 0.8l5 0.7l5 0.7l5 0.8l5 0.7l5 0.8l5 0.7l5 0.7l5 0.8l5 0.7l5 0.7l5 0.8l5 0.7l5 0.7l5 0.7l5 0.7l5 0.7l5 0.7V269.5H163Z"/>
<path fill="#fdbbbc" d="M163 239.9l5 -0.8l5 -0.8l5 -0.8l5 -0.7l5 -0.8l5 -0.7l5 -0.6l5 -0.7l5 -0.7l5 -0.6l5 -0.7l5 -0.6l5 -0.7l5 -0.6l5 -0.7l5 -0.6l5 -0.7l5 -0.6l5 -0.7l5 -0.7l5 -0.6l5 -0.7l5 -0.7l5 -0.7l5 -0.7l5 -0.7l5 -0.7l5 -0.7l5 -0.8l5 -0.7l5 -0.7l5 -0.7l5 -0.8l5 -0.7l5 -0.7l5 -0.7l5 -0.8l5 -0.7l5 -0.7l5 -0.7l5 -0.7l5 -0.6l5 -0.7l5 -0.7l5 -0.6l5 -0.6l5 -0.7l5 -0.6l5 -0.5l5 -0.6l5 -0.5l5 -0.5l5 -0.5l5 -0.5l5 -0.4l5 -0.4l5 -0.4l5 -0.4l5 -0.3l5 -0.3l5 -0.3l5 -0.2l5 -0.3l5 -0.1l5 -0.2l5 -0.1l5 -0.1l5 0.0l5 -0.1l5 0.1l5 0.0l5 0.1l5 0.1l5 0.1l5 0.2l5 0.2l5 0.3l5 0.2l5 0.3l5 0.3l5 0.4l5 0.4l5 0.4l5 0.4l5 0.5l5 0.5l5 0.5l5 0.5l5 0.6l5 0.5l5 0.6l5 0.6l5 0.7l5 0.6l5 0.6l5 0.7l5 0.7l5 0.7l5 0.7l5 0.7l5 0.7l5 0.7l5 0.7l5 0.8l5 0.7l5 0.7l5 0.8l5 0.7l5 0.7l5 0.7l5 0.7l5 0.8l5 0.7l5 0.7l5 0.7l5 0.7l5 0.6l5 0.7V269.5H163Z"/>
<path fill="#fca4a4" d="M163 240.4l5 -0.8l5 -0.7l5 -0.8l5 -0.7l5 -0.7l5 -0.7l5 -0.6l5 -0.7l5 -0.6l5 -0.7l5 -0.6l5 -0.6l5 -0.7l5 -0.6l5 -0.6l5 -0.7l5 -0.6l5 -0.7l5 -0.6l5 -0.7l5 -0.7l5 -0.6l5 -0.7l5 -0.7l5 -0.7l5 -0.7l5 -0.7l5 -0.7l5 -0.7l5 -0.7l5 -0.8l5 -0.7l5 -0.7l5 -0.7l5 -0.7l5 -0.7l5 -0.7l5 -0.7l5 -0.7l5 -0.7l5 -0.7l5 -0.6l5 -0.7l5 -0.6l5 -0.7l5 -0.6l5 -0.6l5 -0.6l5 -0.5l5 -0.6l5 -0.5l5 -0.5l5 -0.5l5 -0.4l5 -0.5l5 -0.4l5 -0.3l5 -0.4l5 -0.3l5 -0.3l5 -0.3l5 -0.2l5 -0.2l5 -0.2l5 -0.1l5 -0.1l5 -0.1l5 -0.1l5 0.0l5 0.0l5 0.1l5 0.0l5 0.1l5 0.2l5 0.2l5 0.2l5 0.2l5 0.2l5 0.3l5 0.3l5 0.4l5 0.4l5 0.4l5 0.4l5 0.4l5 0.5l5 0.5l5 0.5l5 0.6l5 0.5l5 0.6l5 0.6l5 0.6l5 0.6l5 0.7l5 0.6l5 0.7l5 0.7l5 0.6l5 0.7l5 0.7l5 0.7l5 0.7l5 0.8l5 0.7l5 0.7l5 0.7l5 0.7l5 0.7l5 0.7l5 0.7l5 0.8l5 0.7l5 0.6l5 0.7l5 0.7l5 0.7l5 0.7V269.5H163Z"/>
<path fill="#fb8b8c" d="M163 241.0l5 -0.8l5 -0.7l5 -0.7l5 -0.7l5 -0.7l5 -0.7l5 -0.6l5 -0.7l5 -0.6l5 -0.6l5 -0.6l5 -0.7l5 -0.6l5 -0.6l5 -0.6l5 -0.7l5 -0.6l5 -0.7l5 -0.6l5 -0.7l5 -0.6l5 -0.7l5 -0.7l5 -0.6l5 -0.7l5 -0.7l5 -0.7l5 -0.7l5 -0.7l5 -0.7l5 -0.7l5 -0.7l5 -0.7l5 -0.7l5 -0.7l5 -0.7l5 -0.7l5 -0.7l5 -0.7l5 -0.6l5 -0.7l5 -0.6l5 -0.7l5 -0.6l5 -0.6l5 -0.6l5 -0.6l5 -0.6l5 -0.5l5 -0.6l5 -0.5l5 -0.5l5 -0.4l5 -0.5l5 -0.4l5 -0.4l5 -0.3l5 -0.4l5 -0.3l5 -0.3l5 -0.2l5 -0.3l5 -0.2l5 -0.1l5 -0.2l5 -0.1l5 -0.1l5 0.0l5 0.0l5 0.0l5 0.0l5 0.1l5 0.1l5 0.1l5 0.2l5 0.2l5 0.2l5 0.3l5 0.2l5 0.4l5 0.3l5 0.4l5 0.3l5 0.5l5 0.4l5 0.5l5 0.4l5 0.5l5 0.6l5 0.5l5 0.6l5 0.6l5 0.5l5 0.7l5 0.6l5 0.6l5 0.7l5 0.6l5 0.7l5 0.7l5 0.7l5 0.7l5 0.6l5 0.7l5 0.7l5 0.8l5 0.7l5 0.7l5 0.7l5 0.7l5 0.7l5 0.7l5 0.6l5 0.7l5 0.7l5 0.7l5 0.6l5 0.7V269.5H163Z"/>
<path fill="#fa7071" d="M163 241.5l5 -0.7l5 -0.7l5 -0.7l5 -0.7l5 -0.6l5 -0.7l5 -0.6l5 -0.6l5 -0.6l5 -0.7l5 -0.6l5 -0.6l5 -0.6l5 -0.6l5 -0.6l5 -0.7l5 -0.6l5 -0.6l5 -0.7l5 -0.6l5 -0.7l5 -0.6l5 -0.7l5 -0.7l5 -0.6l5 -0.7l5 -0.7l5 -0.7l5 -0.7l5 -0.7l5 -0.7l5 -0.6l5 -0.7l5 -0.7l5 -0.7l5 -0.7l5 -0.7l5 -0.6l5 -0.7l5 -0.7l5 -0.6l5 -0.7l5 -0.6l5 -0.6l5 -0.6l5 -0.6l5 -0.5l5 -0.6l5 -0.5l5 -0.5l5 -0.5l5 -0.5l5 -0.5l5 -0.4l5 -0.4l5 -0.4l5 -0.3l5 -0.4l5 -0.3l5 -0.3l5 -0.2l5 -0.2l5 -0.2l5 -0.2l5 -0.1l5 -0.1l5 -0.1l5 -0.1l5 0.0l5 0.0l5 0.1l5 0.1l5 0.1l5 0.1l5 0.1l5 0.2l5 0.2l5 0.3l5 0.3l5 0.3l5 0.3l5 0.3l5 0.4l5 0.4l5 0.4l5 0.5l5 0.5l5 0.5l5 0.5l5 0.5l5 0.5l5 0.6l5 0.6l5 0.6l5 0.6l5 0.6l5 0.7l5 0.6l5 0.7l5 0.6l5 0.7l5 0.7l5 0.7l5 0.6l5 0.7l5 0.7l5 0.7l5 0.7l5 0.7l5 0.7l5 0.7l5 0.7l5 0.6l5 0.7l5 0.7l5 0.6l5 0.7l5 0.7V269.5H163Z"/>
<path fill="#f95456" d="M163 242.0l5 -0.7l5 -0.6l5 -0.7l5 -0.6l5 -0.7l5 -0.6l5 -0.6l5 -0.6l5 -0.6l5 -0.6l5 -0.6l5 -0.6l5 -0.6l5 -0.6l5 -0.6l5 -0.6l5 -0.7l5 -0.6l5 -0.6l5 -0.7l5 -0.6l5 -0.7l5 -0.6l5 -0.7l5 -0.6l5 -0.7l5 -0.7l5 -0.7l5 -0.6l5 -0.7l5 -0.7l5 -0.7l5 -0.7l5 -0.6l5 -0.7l5 -0.7l5 -0.6l5 -0.7l5 -0.7l5 -0.6l5 -0.6l5 -0.7l5 -0.6l5 -0.6l5 -0.5l5 -0.6l5 -0.6l5 -0.5l5 -0.5l5 -0.5l5 -0.5l5 -0.5l5 -0.4l5 -0.4l5 -0.4l5 -0.4l5 -0.3l5 -0.4l5 -0.3l5 -0.2l5 -0.3l5 -0.2l5 -0.2l5 -0.1l5 -0.2l5 -0.1l5 -0.1l5 0.0l5 0.0l5 0.0l5 0.0l5 0.1l5 0.1l5 0.1l5 0.2l5 0.2l5 0.2l5 0.2l5 0.3l5 0.3l5 0.3l5 0.3l5 0.4l5 0.4l5 0.4l5 0.4l5 0.5l5 0.5l5 0.5l5 0.5l5 0.5l5 0.6l5 0.5l5 0.6l5 0.6l5 0.6l5 0.6l5 0.7l5 0.6l5 0.7l5 0.6l5 0.7l5 0.7l5 0.6l5 0.7l5 0.7l5 0.7l5 0.6l5 0.7l5 0.7l5 0.7l5 0.6l5 0.7l5 0.7l5 0.6l5 0.7l5 0.7l5 0.6V269.5H163Z"/>
<path fill="#f83739" d="M163 242.6l5 -0.7l5 -0.6l5 -0.7l5 -0.6l5 -0.6l5 -0.6l5 -0.6l5 -0.6l5 -0.5l5 -0.6l5 -0.6l5 -0.6l5 -0.6l5 -0.6l5 -0.6l5 -0.6l5 -0.6l5 -0.7l5 -0.6l5 -0.6l5 -0.7l5 -0.6l5 -0.7l5 -0.6l5 -0.7l5 -0.6l5 -0.7l5 -0.6l5 -0.7l5 -0.7l5 -0.7l5 -0.6l5 -0.7l5 -0.7l5 -0.6l5 -0.7l5 -0.6l5 -0.7l5 -0.6l5 -0.6l5 -0.6l5 -0.7l5 -0.5l5 -0.6l5 -0.6l5 -0.6l5 -0.5l5 -0.5l5 -0.5l5 -0.5l5 -0.5l5 -0.4l5 -0.5l5 -0.4l5 -0.3l5 -0.4l5 -0.3l5 -0.4l5 -0.2l5 -0.3l5 -0.2l5 -0.3l5 -0.1l5 -0.2l5 -0.1l5 -0.1l5 -0.1l5 0.0l5 -0.1l5 0.1l5 0.0l5 0.1l5 0.1l5 0.1l5 0.1l5 0.2l5 0.2l5 0.2l5 0.3l5 0.3l5 0.3l5 0.3l5 0.4l5 0.4l5 0.4l5 0.4l5 0.4l5 0.5l5 0.5l5 0.5l5 0.5l5 0.5l5 0.6l5 0.6l5 0.5l5 0.6l5 0.6l5 0.7l5 0.6l5 0.6l5 0.7l5 0.6l5 0.7l5 0.6l5 0.7l5 0.6l5 0.7l5 0.7l5 0.7l5 0.6l5 0.7l5 0.6l5 0.7l5 0.7l5 0.6l5 0.7l5 0.6l5 0.7V269.5H163Z"/>
<path fill="#f7191b" d="M163 243.1l5 -0.6l5 -0.6l5 -0.6l5 -0.6l5 -0.6l5 -0.6l5 -0.6l5 -0.5l5 -0.6l5 -0.6l5 -0.6l5 -0.5l5 -0.6l5 -0.6l5 -0.6l5 -0.6l5 -0.6l5 -0.6l5 -0.7l5 -0.6l5 -0.6l5 -0.6l5 -0.7l5 -0.6l5 -0.7l5 -0.6l5 -0.7l5 -0.6l5 -0.7l5 -0.6l5 -0.7l5 -0.7l5 -0.6l5 -0.7l5 -0.6l5 -0.7l5 -0.6l5 -0.6l5 -0.6l5 -0.7l5 -0.6l5 -0.6l5 -0.5l5 -0.6l5 -0.6l5 -0.5l5 -0.5l5 -0.5l5 -0.5l5 -0.5l5 -0.5l5 -0.4l5 -0.4l5 -0.4l5 -0.4l5 -0.3l5 -0.3l5 -0.4l5 -0.2l5 -0.3l5 -0.2l5 -0.2l5 -0.2l5 -0.1l5 -0.2l5 -0.1l5 0.0l5 -0.1l5 0.0l5 0.0l5 0.1l5 0.0l5 0.1l5 0.1l5 0.2l5 0.1l5 0.2l5 0.3l5 0.2l5 0.3l5 0.3l5 0.3l5 0.4l5 0.3l5 0.4l5 0.4l5 0.5l5 0.4l5 0.5l5 0.5l5 0.5l5 0.5l5 0.5l5 0.6l5 0.6l5 0.5l5 0.6l5 0.6l5 0.6l5 0.7l5 0.6l5 0.6l5 0.7l5 0.6l5 0.7l5 0.6l5 0.7l5 0.6l5 0.7l5 0.6l5 0.7l5 0.6l5 0.7l5 0.6l5 0.7l5 0.6l5 0.7l5 0.6V269.5H163Z"/>
<path fill="#fff3f3" d="M163 243.6l5 -0.6l5 -0.5l5 -0.6l5 -0.6l5 -0.5l5 -0.6l5 -0.5l5 -0.6l5 -0.6l5 -0.5l5 -0.6l5 -0.6l5 -0.5l5 -0.6l5 -0.6l5 -0.6l5 -0.6l5 -0.6l5 -0.6l5 -0.6l5 -0.7l5 -0.6l5 -0.6l5 -0.6l5 -0.7l5 -0.6l5 -0.7l5 -0.6l5 -0.7l5 -0.6l5 -0.7l5 -0.6l5 -0.6l5 -0.7l5 -0.6l5 -0.6l5 -0.7l5 -0.6l5 -0.6l5 -0.6l5 -0.6l5 -0.6l5 -0.5l5 -0.6l5 -0.5l5 -0.5l5 -0.6l5 -0.4l5 -0.5l5 -0.5l5 -0.4l5 -0.4l5 -0.5l5 -0.3l5 -0.4l5 -0.3l5 -0.4l5 -0.2l5 -0.3l5 -0.3l5 -0.2l5 -0.2l5 -0.2l5 -0.1l5 -0.1l5 -0.1l5 -0.1l5 0.0l5 0.0l5 0.0l5 0.0l5 0.1l5 0.1l5 0.1l5 0.1l5 0.2l5 0.2l5 0.2l5 0.2l5 0.3l5 0.3l5 0.3l5 0.3l5 0.4l5 0.4l5 0.4l5 0.4l5 0.4l5 0.5l5 0.5l5 0.4l5 0.6l5 0.5l5 0.5l5 0.6l5 0.5l5 0.6l5 0.6l5 0.6l5 0.6l5 0.6l5 0.6l5 0.7l5 0.6l5 0.6l5 0.7l5 0.6l5 0.7l5 0.6l5 0.7l5 0.6l5 0.6l5 0.7l5 0.6l5 0.7l5 0.6l5 0.6l5 0.6V269.5H163Z"/>
<path fill="#fee4e4" d="M163 244.2l5 -0.6l5 -0.5l5 -0.6l5 -0.5l5 -0.6l5 -0.5l5 -0.6l5 -0.5l5 -0.6l5 -0.6l5 -0.5l5 -0.6l5 -0.6l5 -0.5l5 -0.6l5 -0.6l5 -0.6l5 -0.6l5 -0.6l5 -0.6l5 -0.6l5 -0.7l5 -0.6l5 -0.6l5 -0.6l5 -0.7l5 -0.6l5 -0.6l5 -0.7l5 -0.6l5 -0.7l5 -0.6l5 -0.6l5 -0.6l5 -0.7l5 -0.6l5 -0.6l5 -0.6l5 -0.6l5 -0.6l5 -0.6l5 -0.5l5 -0.6l5 -0.5l5 -0.5l5 -0.6l5 -0.5l5 -0.4l5 -0.5l5 -0.5l5 -0.4l5 -0.4l5 -0.4l5 -0.4l5 -0.3l5 -0.4l5 -0.3l5 -0.2l5 -0.3l5 -0.3l5 -0.2l5 -0.2l5 -0.1l5 -0.2l5 -0.1l5 -0.1l5 0.0l5 -0.1l5 0.0l5 0.0l5 0.0l5 0.1l5 0.1l5 0.1l5 0.1l5 0.2l5 0.2l5 0.2l5 0.2l5 0.3l5 0.3l5 0.3l5 0.3l5 0.4l5 0.3l5 0.4l5 0.4l5 0.5l5 0.4l5 0.5l5 0.4l5 0.5l5 0.5l5 0.6l5 0.5l5 0.6l5 0.5l5 0.6l5 0.6l5 0.6l5 0.6l5 0.6l5 0.6l5 0.6l5 0.7l5 0.6l5 0.6l5 0.7l5 0.6l5 0.6l5 0.7l5 0.6l5 0.6l5 0.7l5 0.6l5 0.6l5 0.6l5 0.6V269.5H163Z"/>
<path fill="#fed1d1" d="M163 244.8l5 -0.6l5 -0.5l5 -0.6l5 -0.5l5 -0.6l5 -0.5l5 -0.6l5 -0.5l5 -0.6l5 -0.5l5 -0.6l5 -0.5l5 -0.6l5 -0.6l5 -0.6l5 -0.5l5 -0.6l5 -0.6l5 -0.6l5 -0.6l5 -0.6l5 -0.6l5 -0.7l5 -0.6l5 -0.6l5 -0.6l5 -0.7l5 -0.6l5 -0.6l5 -0.6l5 -0.7l5 -0.6l5 -0.6l5 -0.6l5 -0.6l5 -0.6l5 -0.6l5 -0.6l5 -0.6l5 -0.6l5 -0.5l5 -0.6l5 -0.5l5 -0.6l5 -0.5l5 -0.5l5 -0.5l5 -0.4l5 -0.5l5 -0.4l5 -0.5l5 -0.4l5 -0.3l5 -0.4l5 -0.4l5 -0.3l5 -0.3l5 -0.3l5 -0.2l5 -0.2l5 -0.3l5 -0.1l5 -0.2l5 -0.1l5 -0.2l5 0.0l5 -0.1l5 0.0l5 -0.1l5 0.0l5 0.1l5 0.0l5 0.1l5 0.1l5 0.2l5 0.1l5 0.2l5 0.2l5 0.2l5 0.3l5 0.3l5 0.3l5 0.3l5 0.3l5 0.4l5 0.4l5 0.4l5 0.4l5 0.4l5 0.5l5 0.4l5 0.5l5 0.5l5 0.5l5 0.6l5 0.5l5 0.5l5 0.6l5 0.6l5 0.6l5 0.6l5 0.5l5 0.7l5 0.6l5 0.6l5 0.6l5 0.6l5 0.6l5 0.7l5 0.6l5 0.6l5 0.6l5 0.7l5 0.6l5 0.6l5 0.6l5 0.6l5 0.7V269.5H163Z"/>
<path fill="#fdbbbc" d="M163 245.4l5 -0.6l5 -0.5l5 -0.6l5 -0.5l5 -0.5l5 -0.6l5 -0.5l5 -0.6l5 -0.5l5 -0.6l5 -0.5l5 -0.6l5 -0.5l5 -0.6l5 -0.6l5 -0.6l5 -0.5l5 -0.6l5 -0.6l5 -0.6l5 -0.6l5 -0.6l5 -0.6l5 -0.7l5 -0.6l5 -0.6l5 -0.6l5 -0.6l5 -0.6l5 -0.6l5 -0.7l5 -0.6l5 -0.6l5 -0.6l5 -0.6l5 -0.6l5 -0.6l5 -0.5l5 -0.6l5 -0.6l5 -0.5l5 -0.6l5 -0.5l5 -0.5l5 -0.5l5 -0.5l5 -0.5l5 -0.4l5 -0.5l5 -0.4l5 -0.4l5 -0.4l5 -0.4l5 -0.3l5 -0.4l5 -0.3l5 -0.3l5 -0.3l5 -0.2l5 -0.2l5 -0.2l5 -0.2l5 -0.2l5 -0.1l5 -0.1l5 -0.1l5 -0.1l5 0.0l5 0.0l5 0.0l5 0.0l5 0.1l5 0.1l5 0.1l5 0.1l5 0.1l5 0.2l5 0.2l5 0.2l5 0.3l5 0.3l5 0.2l5 0.4l5 0.3l5 0.3l5 0.4l5 0.4l5 0.4l5 0.4l5 0.5l5 0.4l5 0.5l5 0.5l5 0.5l5 0.5l5 0.5l5 0.6l5 0.5l5 0.6l5 0.5l5 0.6l5 0.6l5 0.6l5 0.6l5 0.6l5 0.6l5 0.6l5 0.6l5 0.6l5 0.7l5 0.6l5 0.6l5 0.6l5 0.6l5 0.6l5 0.6l5 0.7l5 0.6V269.5H163Z"/>
<path fill="#fca4a4" d="M163 246.0l5 -0.6l5 -0.5l5 -0.5l5 -0.6l5 -0.5l5 -0.5l5 -0.6l5 -0.5l5 -0.6l5 -0.5l5 -0.5l5 -0.6l5 -0.6l5 -0.5l5 -0.6l5 -0.6l5 -0.6l5 -0.5l5 -0.6l5 -0.6l5 -0.6l5 -0.6l5 -0.6l5 -0.6l5 -0.6l5 -0.6l5 -0.6l5 -0.7l5 -0.6l5 -0.6l5 -0.6l5 -0.6l5 -0.6l5 -0.6l5 -0.5l5 -0.6l5 -0.6l5 -0.6l5 -0.5l5 -0.6l5 -0.5l5 -0.5l5 -0.6l5 -0.5l5 -0.5l5 -0.4l5 -0.5l5 -0.4l5 -0.5l5 -0.4l5 -0.4l5 -0.4l5 -0.3l5 -0.4l5 -0.3l5 -0.3l5 -0.3l5 -0.3l5 -0.2l5 -0.2l5 -0.2l5 -0.2l5 -0.2l5 -0.1l5 -0.1l5 -0.1l5 0.0l5 -0.1l5 0.0l5 0.0l5 0.1l5 0.0l5 0.1l5 0.1l5 0.1l5 0.2l5 0.1l5 0.2l5 0.3l5 0.2l5 0.2l5 0.3l5 0.3l5 0.3l5 0.4l5 0.3l5 0.4l5 0.4l5 0.4l5 0.5l5 0.4l5 0.5l5 0.4l5 0.5l5 0.5l5 0.6l5 0.5l5 0.5l5 0.6l5 0.5l5 0.6l5 0.6l5 0.5l5 0.6l5 0.6l5 0.6l5 0.6l5 0.6l5 0.6l5 0.6l5 0.6l5 0.6l5 0.7l5 0.6l5 0.6l5 0.6l5 0.6l5 0.6V269.5H163Z"/>
<path fill="#fb8b8c" d="M163 246.6l5 -0.6l5 -0.5l5 -0.5l5 -0.5l5 -0.6l5 -0.5l5 -0.5l5 -0.6l5 -0.5l5 -0.5l5 -0.6l5 -0.5l5 -0.6l5 -0.6l5 -0.5l5 -0.6l5 -0.6l5 -0.5l5 -0.6l5 -0.6l5 -0.6l5 -0.6l5 -0.6l5 -0.6l5 -0.6l5 -0.6l5 -0.6l5 -0.6l5 -0.6l5 -0.6l5 -0.6l5 -0.6l5 -0.5l5 -0.6l5 -0.6l5 -0.6l5 -0.5l5 -0.6l5 -0.5l5 -0.6l5 -0.5l5 -0.5l5 -0.5l5 -0.5l5 -0.5l5 -0.5l5 -0.4l5 -0.4l5 -0.5l5 -0.4l5 -0.4l5 -0.3l5 -0.4l5 -0.3l5 -0.3l5 -0.3l5 -0.3l5 -0.3l5 -0.2l5 -0.2l5 -0.2l5 -0.2l5 -0.1l5 -0.2l5 -0.1l5 0.0l5 -0.1l5 0.0l5 -0.1l5 0.1l5 0.0l5 0.0l5 0.1l5 0.1l5 0.1l5 0.2l5 0.2l5 0.1l5 0.3l5 0.2l5 0.2l5 0.3l5 0.3l5 0.3l5 0.3l5 0.4l5 0.4l5 0.3l5 0.4l5 0.5l5 0.4l5 0.4l5 0.5l5 0.5l5 0.5l5 0.5l5 0.5l5 0.5l5 0.6l5 0.5l5 0.6l5 0.5l5 0.6l5 0.6l5 0.5l5 0.6l5 0.6l5 0.6l5 0.6l5 0.6l5 0.6l5 0.6l5 0.6l5 0.6l5 0.6l5 0.6l5 0.6l5 0.6V269.5H163Z"/>
<path fill="#fa7071" d="M163 247.1l5 -0.5l5 -0.5l5 -0.5l5 -0.5l5 -0.5l5 -0.6l5 -0.5l5 -0.5l5 -0.6l5 -0.5l5 -0.5l5 -0.6l5 -0.5l5 -0.6l5 -0.5l5 -0.6l5 -0.6l5 -0.6l5 -0.5l5 -0.6l5 -0.6l5 -0.6l5 -0.6l5 -0.6l5 -0.5l5 -0.6l5 -0.6l5 -0.6l5 -0.6l5 -0.6l5 -0.6l5 -0.6l5 -0.5l5 -0.6l5 -0.6l5 -0.5l5 -0.6l5 -0.5l5 -0.5l5 -0.6l5 -0.5l5 -0.5l5 -0.5l5 -0.5l5 -0.4l5 -0.5l5 -0.4l5 -0.4l5 -0.5l5 -0.4l5 -0.3l5 -0.4l5 -0.3l5 -0.4l5 -0.3l5 -0.3l5 -0.2l5 -0.3l5 -0.2l5 -0.2l5 -0.2l5 -0.2l5 -0.1l5 -0.1l5 -0.1l5 -0.1l5 -0.1l5 0.0l5 0.0l5 0.0l5 0.0l5 0.1l5 0.1l5 0.1l5 0.1l5 0.1l5 0.2l5 0.2l5 0.2l5 0.2l5 0.2l5 0.3l5 0.3l5 0.3l5 0.3l5 0.3l5 0.4l5 0.4l5 0.4l5 0.4l5 0.4l5 0.4l5 0.5l5 0.4l5 0.5l5 0.5l5 0.5l5 0.5l5 0.5l5 0.6l5 0.5l5 0.6l5 0.5l5 0.6l5 0.6l5 0.5l5 0.6l5 0.6l5 0.6l5 0.6l5 0.6l5 0.5l5 0.6l5 0.6l5 0.6l5 0.6l5 0.6l5 0.6V269.5H163Z"/>
<path fill="#f95456" d="M163 247.7l5 -0.5l5 -0.5l5 -0.5l5 -0.5l5 -0.5l5 -0.5l5 -0.5l5 -0.6l5 -0.5l5 -0.5l5 -0.6l5 -0.5l5 -0.6l5 -0.5l5 -0.6l5 -0.5l5 -0.6l5 -0.6l5 -0.5l5 -0.6l5 -0.6l5 -0.6l5 -0.5l5 -0.6l5 -0.6l5 -0.6l5 -0.6l5 -0.6l5 -0.5l5 -0.6l5 -0.6l5 -0.5l5 -0.6l5 -0.6l5 -0.5l5 -0.6l5 -0.5l5 -0.5l5 -0.6l5 -0.5l5 -0.5l5 -0.5l5 -0.4l5 -0.5l5 -0.5l5 -0.4l5 -0.4l5 -0.4l5 -0.4l5 -0.4l5 -0.4l5 -0.3l5 -0.4l5 -0.3l5 -0.3l5 -0.3l5 -0.2l5 -0.3l5 -0.2l5 -0.2l5 -0.2l5 -0.1l5 -0.2l5 -0.1l5 -0.1l5 -0.1l5 0.0l5 -0.1l5 0.0l5 0.0l5 0.1l5 0.0l5 0.1l5 0.1l5 0.1l5 0.1l5 0.2l5 0.2l5 0.2l5 0.2l5 0.2l5 0.3l5 0.2l5 0.3l5 0.4l5 0.3l5 0.3l5 0.4l5 0.4l5 0.4l5 0.4l5 0.4l5 0.4l5 0.5l5 0.5l5 0.4l5 0.5l5 0.5l5 0.5l5 0.6l5 0.5l5 0.5l5 0.6l5 0.5l5 0.6l5 0.5l5 0.6l5 0.6l5 0.6l5 0.5l5 0.6l5 0.6l5 0.6l5 0.6l5 0.5l5 0.6l5 0.6l5 0.6V269.5H163Z"/>
<path fill="#f83739" d="M163 248.3l5 -0.5l5 -0.5l5 -0.5l5 -0.5l5 -0.5l5 -0.5l5 -0.5l5 -0.5l5 -0.5l5 -0.6l5 -0.5l5 -0.6l5 -0.5l5 -0.5l5 -0.6l5 -0.6l5 -0.5l5 -0.6l5 -0.5l5 -0.6l5 -0.6l5 -0.6l5 -0.5l5 -0.6l5 -0.6l5 -0.5l5 -0.6l5 -0.6l5 -0.6l5 -0.5l5 -0.6l5 -0.5l5 -0.6l5 -0.5l5 -0.6l5 -0.5l5 -0.5l5 -0.6l5 -0.5l5 -0.5l5 -0.5l5 -0.4l5 -0.5l5 -0.5l5 -0.4l5 -0.4l5 -0.4l5 -0.4l5 -0.4l5 -0.4l5 -0.4l5 -0.3l5 -0.3l5 -0.3l5 -0.3l5 -0.3l5 -0.2l5 -0.3l5 -0.2l5 -0.2l5 -0.2l5 -0.1l5 -0.2l5 -0.1l5 -0.1l5 0.0l5 -0.1l5 0.0l5 0.0l5 0.0l5 0.0l5 0.0l5 0.1l5 0.1l5 0.1l5 0.2l5 0.1l5 0.2l5 0.2l5 0.2l5 0.2l5 0.3l5 0.2l5 0.3l5 0.3l5 0.3l5 0.4l5 0.3l5 0.4l5 0.4l5 0.4l5 0.4l5 0.4l5 0.5l5 0.4l5 0.5l5 0.4l5 0.5l5 0.5l5 0.5l5 0.6l5 0.5l5 0.5l5 0.6l5 0.5l5 0.6l5 0.5l5 0.6l5 0.5l5 0.6l5 0.6l5 0.5l5 0.6l5 0.6l5 0.6l5 0.5l5 0.6l5 0.6V269.5H163Z"/>
<path fill="#f7191b" d="M163 248.9l5 -0.5l5 -0.5l5 -0.5l5 -0.4l5 -0.5l5 -0.6l5 -0.5l5 -0.5l5 -0.5l5 -0.5l5 -0.6l5 -0.5l5 -0.5l5 -0.6l5 -0.5l5 -0.6l5 -0.5l5 -0.6l5 -0.5l5 -0.6l5 -0.6l5 -0.5l5 -0.6l5 -0.6l5 -0.5l5 -0.6l5 -0.6l5 -0.5l5 -0.6l5 -0.5l5 -0.6l5 -0.5l5 -0.6l5 -0.5l5 -0.5l5 -0.6l5 -0.5l5 -0.5l5 -0.5l5 -0.5l5 -0.4l5 -0.5l5 -0.5l5 -0.4l5 -0.4l5 -0.5l5 -0.4l5 -0.4l5 -0.3l5 -0.4l5 -0.3l5 -0.4l5 -0.3l5 -0.3l5 -0.3l5 -0.2l5 -0.3l5 -0.2l5 -0.2l5 -0.2l5 -0.1l5 -0.2l5 -0.1l5 -0.1l5 -0.1l5 -0.1l5 -0.1l5 0.0l5 0.0l5 0.0l5 0.0l5 0.1l5 0.1l5 0.0l5 0.1l5 0.2l5 0.1l5 0.2l5 0.2l5 0.2l5 0.2l5 0.2l5 0.3l5 0.3l5 0.3l5 0.3l5 0.3l5 0.3l5 0.4l5 0.4l5 0.4l5 0.4l5 0.4l5 0.4l5 0.4l5 0.5l5 0.5l5 0.4l5 0.5l5 0.5l5 0.5l5 0.5l5 0.6l5 0.5l5 0.5l5 0.6l5 0.5l5 0.6l5 0.5l5 0.6l5 0.5l5 0.6l5 0.6l5 0.5l5 0.6l5 0.6l5 0.5l5 0.6V269.5H163Z"/>
<path fill="#043e80" d="M163 249.5l5 -0.5l5 -0.5l5 -0.4l5 -0.5l5 -0.5l5 -0.5l5 -0.5l5 -0.5l5 -0.5l5 -0.6l5 -0.5l5 -0.5l5 -0.6l5 -0.5l5 -0.5l5 -0.6l5 -0.5l5 -0.6l5 -0.5l5 -0.6l5 -0.6l5 -0.5l5 -0.6l5 -0.5l5 -0.6l5 -0.5l5 -0.6l5 -0.6l5 -0.5l5 -0.5l5 -0.6l5 -0.5l5 -0.6l5 -0.5l5 -0.5l5 -0.5l5 -0.5l5 -0.5l5 -0.5l5 -0.5l5 -0.4l5 -0.5l5 -0.4l5 -0.5l5 -0.4l5 -0.4l5 -0.4l5 -0.4l5 -0.3l5 -0.4l5 -0.3l5 -0.3l5 -0.3l5 -0.3l5 -0.3l5 -0.2l5 -0.3l5 -0.2l5 -0.2l5 -0.2l5 -0.1l5 -0.2l5 -0.1l5 -0.1l5 -0.1l5 -0.1l5 0.0l5 -0.1l5 0.0l5 0.0l5 0.1l5 0.0l5 0.1l5 0.1l5 0.1l5 0.1l5 0.1l5 0.2l5 0.2l5 0.2l5 0.2l5 0.2l5 0.3l5 0.2l5 0.3l5 0.3l5 0.3l5 0.4l5 0.3l5 0.4l5 0.4l5 0.3l5 0.4l5 0.5l5 0.4l5 0.4l5 0.5l5 0.4l5 0.5l5 0.5l5 0.5l5 0.5l5 0.5l5 0.5l5 0.5l5 0.6l5 0.5l5 0.5l5 0.6l5 0.5l5 0.6l5 0.5l5 0.6l5 0.6l5 0.5l5 0.6l5 0.5l5 0.6V272.5H163Z"/>
<path fill="#fff3f3" d="M163 316.0l5 1.6l5 1.5l5 1.6l5 1.5l5 1.5l5 1.5l5 1.5l5 1.5l5 1.6l5 1.5l5 1.5l5 1.5l5 1.6l5 1.5l5 1.6l5 1.6l5 1.6l5 1.6l5 1.6l5 1.6l5 1.6l5 1.7l5 1.6l5 1.7l5 1.7l5 1.6l5 1.7l5 1.7l5 1.7l5 1.6l5 1.7l5 1.7l5 1.6l5 1.7l5 1.6l5 1.6l5 1.6l5 1.6l5 1.6l5 1.5l5 1.5l5 1.5l5 1.5l5 1.4l5 1.4l5 1.3l5 1.3l5 1.3l5 1.2l5 1.2l5 1.1l5 1.1l5 1.0l5 1.0l5 0.9l5 0.9l5 0.8l5 0.8l5 0.6l5 0.7l5 0.5l5 0.5l5 0.5l5 0.3l5 0.4l5 0.2l5 0.2l5 0.1l5 0.0l5 0.0l5 -0.1l5 -0.2l5 -0.2l5 -0.3l5 -0.3l5 -0.5l5 -0.5l5 -0.5l5 -0.6l5 -0.7l5 -0.7l5 -0.8l5 -0.9l5 -0.9l5 -1.0l5 -1.0l5 -1.0l5 -1.2l5 -1.1l5 -1.2l5 -1.3l5 -1.3l5 -1.3l5 -1.4l5 -1.4l5 -1.5l5 -1.5l5 -1.5l5 -1.5l5 -1.6l5 -1.5l5 -1.6l5 -1.7l5 -1.6l5 -1.6l5 -1.7l5 -1.7l5 -1.6l5 -1.7l5 -1.7l5 -1.7l5 -1.6l5 -1.7l5 -1.7l5 -1.6l5 -1.7l5 -1.6l5 -1.7V265.5H163Z"/>
<path fill="#fee4e4" d="M163 315.3l5 1.6l5 1.5l5 1.5l5 1.4l5 1.5l5 1.5l5 1.5l5 1.4l5 1.5l5 1.5l5 1.5l5 1.5l5 1.5l5 1.5l5 1.5l5 1.6l5 1.5l5 1.6l5 1.6l5 1.6l5 1.6l5 1.6l5 1.6l5 1.6l5 1.6l5 1.7l5 1.6l5 1.7l5 1.6l5 1.6l5 1.7l5 1.6l5 1.6l5 1.6l5 1.6l5 1.6l5 1.5l5 1.6l5 1.5l5 1.5l5 1.5l5 1.4l5 1.4l5 1.4l5 1.4l5 1.3l5 1.3l5 1.2l5 1.2l5 1.1l5 1.1l5 1.1l5 1.0l5 0.9l5 0.9l5 0.9l5 0.7l5 0.8l5 0.6l5 0.6l5 0.6l5 0.5l5 0.4l5 0.4l5 0.3l5 0.2l5 0.2l5 0.1l5 0.0l5 0.0l5 -0.1l5 -0.2l5 -0.2l5 -0.3l5 -0.3l5 -0.4l5 -0.5l5 -0.5l5 -0.6l5 -0.7l5 -0.7l5 -0.8l5 -0.8l5 -0.9l5 -0.9l5 -1.0l5 -1.1l5 -1.0l5 -1.2l5 -1.2l5 -1.2l5 -1.3l5 -1.3l5 -1.3l5 -1.4l5 -1.4l5 -1.4l5 -1.5l5 -1.5l5 -1.5l5 -1.5l5 -1.6l5 -1.6l5 -1.6l5 -1.6l5 -1.6l5 -1.6l5 -1.6l5 -1.7l5 -1.6l5 -1.7l5 -1.6l5 -1.6l5 -1.7l5 -1.6l5 -1.6l5 -1.6l5 -1.6V265.5H163Z"/>
<path fill="#fed1d1" d="M163 314.7l5 1.4l5 1.5l5 1.5l5 1.4l5 1.4l5 1.5l5 1.4l5 1.4l5 1.5l5 1.4l5 1.5l5 1.4l5 1.5l5 1.5l5 1.5l5 1.5l5 1.5l5 1.5l5 1.6l5 1.5l5 1.6l5 1.6l5 1.6l5 1.5l5 1.6l5 1.6l5 1.6l5 1.6l5 1.6l5 1.6l5 1.6l5 1.6l5 1.6l5 1.5l5 1.6l5 1.5l5 1.6l5 1.5l5 1.4l5 1.5l5 1.4l5 1.4l5 1.4l5 1.4l5 1.3l5 1.2l5 1.3l5 1.2l5 1.1l5 1.2l5 1.0l5 1.0l5 1.0l5 0.9l5 0.9l5 0.8l5 0.8l5 0.7l5 0.6l5 0.6l5 0.6l5 0.4l5 0.4l5 0.4l5 0.3l5 0.2l5 0.2l5 0.1l5 0.0l5 0.0l5 -0.1l5 -0.2l5 -0.2l5 -0.2l5 -0.4l5 -0.4l5 -0.4l5 -0.6l5 -0.5l5 -0.7l5 -0.7l5 -0.7l5 -0.8l5 -0.9l5 -0.9l5 -1.0l5 -1.0l5 -1.0l5 -1.1l5 -1.2l5 -1.2l5 -1.2l5 -1.3l5 -1.3l5 -1.3l5 -1.4l5 -1.4l5 -1.4l5 -1.5l5 -1.4l5 -1.5l5 -1.6l5 -1.5l5 -1.5l5 -1.6l5 -1.6l5 -1.6l5 -1.6l5 -1.6l5 -1.6l5 -1.6l5 -1.6l5 -1.5l5 -1.6l5 -1.6l5 -1.6l5 -1.6l5 -1.5V265.5H163Z"/>
<path fill="#fdbbbc" d="M163 314.0l5 1.4l5 1.4l5 1.4l5 1.4l5 1.4l5 1.4l5 1.4l5 1.4l5 1.4l5 1.4l5 1.5l5 1.4l5 1.4l5 1.5l5 1.4l5 1.5l5 1.5l5 1.5l5 1.5l5 1.5l5 1.5l5 1.6l5 1.5l5 1.6l5 1.5l5 1.6l5 1.5l5 1.6l5 1.6l5 1.5l5 1.6l5 1.5l5 1.5l5 1.6l5 1.5l5 1.5l5 1.5l5 1.4l5 1.5l5 1.4l5 1.4l5 1.3l5 1.4l5 1.3l5 1.3l5 1.2l5 1.2l5 1.2l5 1.1l5 1.1l5 1.0l5 1.0l5 0.9l5 0.9l5 0.9l5 0.8l5 0.7l5 0.7l5 0.6l5 0.6l5 0.5l5 0.5l5 0.4l5 0.3l5 0.3l5 0.2l5 0.2l5 0.1l5 0.0l5 0.0l5 -0.1l5 -0.1l5 -0.2l5 -0.3l5 -0.3l5 -0.4l5 -0.5l5 -0.5l5 -0.5l5 -0.7l5 -0.6l5 -0.8l5 -0.8l5 -0.8l5 -0.9l5 -0.9l5 -1.0l5 -1.0l5 -1.1l5 -1.1l5 -1.2l5 -1.1l5 -1.3l5 -1.2l5 -1.3l5 -1.4l5 -1.3l5 -1.4l5 -1.4l5 -1.5l5 -1.4l5 -1.5l5 -1.5l5 -1.5l5 -1.6l5 -1.5l5 -1.5l5 -1.6l5 -1.5l5 -1.6l5 -1.6l5 -1.5l5 -1.6l5 -1.5l5 -1.6l5 -1.5l5 -1.6l5 -1.5V265.5H163Z"/>
<path fill="#fca4a4" d="M163 313.3l5 1.4l5 1.4l5 1.3l5 1.4l5 1.3l5 1.4l5 1.3l5 1.4l5 1.4l5 1.4l5 1.3l5 1.4l5 1.4l5 1.5l5 1.4l5 1.4l5 1.5l5 1.4l5 1.5l5 1.5l5 1.5l5 1.5l5 1.5l5 1.5l5 1.5l5 1.5l5 1.5l5 1.6l5 1.5l5 1.5l5 1.5l5 1.5l5 1.5l5 1.5l5 1.5l5 1.4l5 1.5l5 1.4l5 1.4l5 1.4l5 1.3l5 1.4l5 1.3l5 1.2l5 1.3l5 1.2l5 1.1l5 1.2l5 1.1l5 1.0l5 1.0l5 1.0l5 0.9l5 0.9l5 0.8l5 0.7l5 0.8l5 0.6l5 0.6l5 0.6l5 0.5l5 0.4l5 0.4l5 0.3l5 0.3l5 0.2l5 0.2l5 0.1l5 0.0l5 0.0l5 -0.1l5 -0.1l5 -0.2l5 -0.3l5 -0.3l5 -0.4l5 -0.4l5 -0.5l5 -0.6l5 -0.6l5 -0.6l5 -0.7l5 -0.8l5 -0.8l5 -0.8l5 -0.9l5 -1.0l5 -1.0l5 -1.0l5 -1.1l5 -1.1l5 -1.2l5 -1.2l5 -1.2l5 -1.3l5 -1.3l5 -1.3l5 -1.4l5 -1.3l5 -1.4l5 -1.4l5 -1.5l5 -1.4l5 -1.5l5 -1.5l5 -1.5l5 -1.5l5 -1.5l5 -1.5l5 -1.5l5 -1.6l5 -1.5l5 -1.5l5 -1.5l5 -1.5l5 -1.5l5 -1.5l5 -1.5V265.5H163Z"/>
<path fill="#fb8b8c" d="M163 312.6l5 1.4l5 1.3l5 1.3l5 1.3l5 1.3l5 1.4l5 1.3l5 1.3l5 1.3l5 1.4l5 1.3l5 1.4l5 1.4l5 1.3l5 1.4l5 1.4l5 1.4l5 1.5l5 1.4l5 1.5l5 1.4l5 1.5l5 1.4l5 1.5l5 1.5l5 1.5l5 1.5l5 1.4l5 1.5l5 1.5l5 1.5l5 1.4l5 1.5l5 1.4l5 1.5l5 1.4l5 1.4l5 1.4l5 1.3l5 1.4l5 1.3l5 1.3l5 1.2l5 1.3l5 1.2l5 1.1l5 1.2l5 1.1l5 1.0l5 1.0l5 1.0l5 0.9l5 0.9l5 0.9l5 0.8l5 0.7l5 0.7l5 0.6l5 0.6l5 0.6l5 0.4l5 0.5l5 0.4l5 0.3l5 0.2l5 0.2l5 0.2l5 0.1l5 0.0l5 0.0l5 -0.1l5 -0.1l5 -0.2l5 -0.3l5 -0.3l5 -0.3l5 -0.5l5 -0.4l5 -0.6l5 -0.5l5 -0.7l5 -0.7l5 -0.7l5 -0.8l5 -0.8l5 -0.9l5 -0.9l5 -1.0l5 -1.0l5 -1.0l5 -1.1l5 -1.1l5 -1.2l5 -1.2l5 -1.2l5 -1.3l5 -1.3l5 -1.3l5 -1.3l5 -1.4l5 -1.3l5 -1.4l5 -1.5l5 -1.4l5 -1.4l5 -1.5l5 -1.4l5 -1.5l5 -1.5l5 -1.5l5 -1.5l5 -1.4l5 -1.5l5 -1.5l5 -1.5l5 -1.4l5 -1.5l5 -1.5V265.5H163Z"/>
<path fill="#fa7071" d="M163 312.0l5 1.3l5 1.2l5 1.3l5 1.3l5 1.2l5 1.3l5 1.3l5 1.3l5 1.3l5 1.3l5 1.3l5 1.3l5 1.4l5 1.3l5 1.4l5 1.3l5 1.4l5 1.4l5 1.4l5 1.4l5 1.4l5 1.5l5 1.4l5 1.4l5 1.5l5 1.4l5 1.5l5 1.4l5 1.4l5 1.5l5 1.4l5 1.4l5 1.4l5 1.5l5 1.3l5 1.4l5 1.4l5 1.3l5 1.3l5 1.3l5 1.3l5 1.3l5 1.2l5 1.2l5 1.2l5 1.1l5 1.1l5 1.0l5 1.1l5 1.0l5 0.9l5 0.9l5 0.9l5 0.8l5 0.7l5 0.8l5 0.6l5 0.7l5 0.5l5 0.5l5 0.5l5 0.4l5 0.4l5 0.3l5 0.3l5 0.2l5 0.1l5 0.1l5 0.0l5 0.0l5 -0.1l5 -0.1l5 -0.2l5 -0.2l5 -0.3l5 -0.4l5 -0.4l5 -0.5l5 -0.5l5 -0.5l5 -0.6l5 -0.7l5 -0.7l5 -0.8l5 -0.8l5 -0.8l5 -0.9l5 -1.0l5 -0.9l5 -1.0l5 -1.1l5 -1.1l5 -1.1l5 -1.2l5 -1.2l5 -1.2l5 -1.2l5 -1.3l5 -1.3l5 -1.3l5 -1.3l5 -1.4l5 -1.4l5 -1.4l5 -1.4l5 -1.4l5 -1.4l5 -1.4l5 -1.5l5 -1.4l5 -1.5l5 -1.4l5 -1.4l5 -1.5l5 -1.4l5 -1.4l5 -1.5l5 -1.4V265.5H163Z"/>
<path fill="#f95456" d="M163 311.3l5 1.2l5 1.3l5 1.2l5 1.2l5 1.2l5 1.3l5 1.2l5 1.3l5 1.2l5 1.3l5 1.3l5 1.3l5 1.3l5 1.3l5 1.3l5 1.4l5 1.3l5 1.4l5 1.3l5 1.4l5 1.4l5 1.4l5 1.4l5 1.4l5 1.4l5 1.4l5 1.4l5 1.4l5 1.4l5 1.4l5 1.4l5 1.3l5 1.4l5 1.4l5 1.3l5 1.4l5 1.3l5 1.3l5 1.3l5 1.2l5 1.3l5 1.2l5 1.2l5 1.1l5 1.2l5 1.0l5 1.1l5 1.0l5 1.0l5 1.0l5 0.9l5 0.9l5 0.8l5 0.8l5 0.7l5 0.7l5 0.7l5 0.6l5 0.5l5 0.5l5 0.5l5 0.4l5 0.3l5 0.3l5 0.3l5 0.2l5 0.1l5 0.1l5 0.0l5 0.0l5 -0.1l5 -0.1l5 -0.2l5 -0.2l5 -0.3l5 -0.3l5 -0.4l5 -0.5l5 -0.5l5 -0.5l5 -0.6l5 -0.6l5 -0.7l5 -0.8l5 -0.7l5 -0.9l5 -0.8l5 -0.9l5 -1.0l5 -1.0l5 -1.0l5 -1.0l5 -1.1l5 -1.1l5 -1.2l5 -1.2l5 -1.2l5 -1.2l5 -1.3l5 -1.3l5 -1.2l5 -1.4l5 -1.3l5 -1.3l5 -1.4l5 -1.4l5 -1.4l5 -1.4l5 -1.3l5 -1.4l5 -1.5l5 -1.4l5 -1.4l5 -1.4l5 -1.4l5 -1.4l5 -1.3l5 -1.4V265.5H163Z"/>
<path fill="#f83739" d="M163 310.6l5 1.2l5 1.2l5 1.2l5 1.2l5 1.2l5 1.1l5 1.3l5 1.2l5 1.2l5 1.2l5 1.3l5 1.2l5 1.3l5 1.3l5 1.3l5 1.3l5 1.3l5 1.3l5 1.3l5 1.4l5 1.3l5 1.4l5 1.3l5 1.4l5 1.3l5 1.4l5 1.4l5 1.3l5 1.4l5 1.4l5 1.3l5 1.4l5 1.3l5 1.3l5 1.3l5 1.3l5 1.3l5 1.3l5 1.2l5 1.2l5 1.2l5 1.2l5 1.1l5 1.2l5 1.0l5 1.1l5 1.0l5 1.0l5 1.0l5 0.9l5 0.9l5 0.8l5 0.8l5 0.8l5 0.7l5 0.7l5 0.6l5 0.6l5 0.5l5 0.5l5 0.4l5 0.4l5 0.4l5 0.3l5 0.2l5 0.2l5 0.1l5 0.1l5 0.0l5 0.0l5 -0.1l5 -0.1l5 -0.2l5 -0.2l5 -0.3l5 -0.3l5 -0.4l5 -0.4l5 -0.5l5 -0.5l5 -0.6l5 -0.6l5 -0.7l5 -0.7l5 -0.7l5 -0.8l5 -0.8l5 -0.9l5 -0.9l5 -1.0l5 -1.0l5 -1.0l5 -1.0l5 -1.1l5 -1.1l5 -1.2l5 -1.1l5 -1.2l5 -1.3l5 -1.2l5 -1.3l5 -1.2l5 -1.3l5 -1.3l5 -1.3l5 -1.4l5 -1.3l5 -1.4l5 -1.3l5 -1.4l5 -1.4l5 -1.3l5 -1.4l5 -1.3l5 -1.4l5 -1.4l5 -1.3l5 -1.4V265.5H163Z"/>
<path fill="#f7191b" d="M163 310.0l5 1.1l5 1.1l5 1.2l5 1.1l5 1.2l5 1.1l5 1.2l5 1.2l5 1.1l5 1.2l5 1.3l5 1.2l5 1.2l5 1.3l5 1.2l5 1.3l5 1.3l5 1.2l5 1.3l5 1.3l5 1.3l5 1.4l5 1.3l5 1.3l5 1.3l5 1.4l5 1.3l5 1.3l5 1.3l5 1.3l5 1.4l5 1.3l5 1.3l5 1.2l5 1.3l5 1.3l5 1.2l5 1.2l5 1.2l5 1.2l5 1.2l5 1.1l5 1.1l5 1.1l5 1.0l5 1.1l5 1.0l5 0.9l5 0.9l5 0.9l5 0.9l5 0.8l5 0.8l5 0.7l5 0.7l5 0.6l5 0.6l5 0.6l5 0.5l5 0.5l5 0.4l5 0.4l5 0.3l5 0.3l5 0.2l5 0.2l5 0.1l5 0.1l5 0.0l5 0.0l5 -0.1l5 -0.1l5 -0.2l5 -0.2l5 -0.2l5 -0.4l5 -0.3l5 -0.4l5 -0.5l5 -0.5l5 -0.5l5 -0.6l5 -0.7l5 -0.7l5 -0.7l5 -0.7l5 -0.9l5 -0.8l5 -0.9l5 -0.9l5 -0.9l5 -1.0l5 -1.0l5 -1.1l5 -1.1l5 -1.1l5 -1.1l5 -1.2l5 -1.1l5 -1.2l5 -1.3l5 -1.2l5 -1.2l5 -1.3l5 -1.3l5 -1.3l5 -1.3l5 -1.3l5 -1.3l5 -1.3l5 -1.3l5 -1.4l5 -1.3l5 -1.3l5 -1.4l5 -1.3l5 -1.3l5 -1.3V265.5H163Z"/>
<path fill="#fff3f3" d="M163 309.3l5 1.1l5 1.1l5 1.0l5 1.2l5 1.1l5 1.1l5 1.1l5 1.1l5 1.2l5 1.2l5 1.1l5 1.2l5 1.2l5 1.2l5 1.3l5 1.2l5 1.2l5 1.3l5 1.2l5 1.3l5 1.3l5 1.3l5 1.2l5 1.3l5 1.3l5 1.3l5 1.3l5 1.3l5 1.3l5 1.2l5 1.3l5 1.3l5 1.2l5 1.3l5 1.2l5 1.2l5 1.2l5 1.2l5 1.2l5 1.1l5 1.1l5 1.1l5 1.1l5 1.0l5 1.0l5 1.0l5 1.0l5 0.9l5 0.9l5 0.9l5 0.8l5 0.8l5 0.7l5 0.7l5 0.7l5 0.6l5 0.6l5 0.5l5 0.5l5 0.5l5 0.4l5 0.3l5 0.3l5 0.3l5 0.2l5 0.2l5 0.1l5 0.1l5 0.0l5 0.0l5 -0.1l5 -0.1l5 -0.1l5 -0.2l5 -0.3l5 -0.3l5 -0.4l5 -0.4l5 -0.4l5 -0.5l5 -0.5l5 -0.6l5 -0.6l5 -0.7l5 -0.7l5 -0.7l5 -0.8l5 -0.8l5 -0.8l5 -0.9l5 -0.9l5 -1.0l5 -1.0l5 -1.0l5 -1.0l5 -1.1l5 -1.1l5 -1.1l5 -1.1l5 -1.2l5 -1.2l5 -1.1l5 -1.3l5 -1.2l5 -1.2l5 -1.3l5 -1.2l5 -1.3l5 -1.3l5 -1.3l5 -1.2l5 -1.3l5 -1.3l5 -1.3l5 -1.3l5 -1.3l5 -1.3l5 -1.2V265.5H163Z"/>
<path fill="#fee4e4" d="M163 308.7l5 1.0l5 1.1l5 1.1l5 1.1l5 1.0l5 1.1l5 1.2l5 1.1l5 1.1l5 1.1l5 1.2l5 1.1l5 1.2l5 1.2l5 1.2l5 1.2l5 1.2l5 1.2l5 1.2l5 1.3l5 1.2l5 1.3l5 1.2l5 1.3l5 1.2l5 1.3l5 1.2l5 1.3l5 1.2l5 1.3l5 1.2l5 1.3l5 1.2l5 1.2l5 1.2l5 1.2l5 1.2l5 1.1l5 1.2l5 1.1l5 1.1l5 1.0l5 1.1l5 1.0l5 1.0l5 1.0l5 0.9l5 0.9l5 0.9l5 0.8l5 0.8l5 0.8l5 0.7l5 0.7l5 0.7l5 0.6l5 0.6l5 0.5l5 0.5l5 0.4l5 0.4l5 0.4l5 0.3l5 0.2l5 0.2l5 0.2l5 0.1l5 0.1l5 0.0l5 0.0l5 0.0l5 -0.2l5 -0.1l5 -0.2l5 -0.3l5 -0.3l5 -0.3l5 -0.4l5 -0.4l5 -0.5l5 -0.5l5 -0.6l5 -0.6l5 -0.6l5 -0.7l5 -0.7l5 -0.8l5 -0.8l5 -0.8l5 -0.9l5 -0.9l5 -0.9l5 -1.0l5 -1.0l5 -1.0l5 -1.0l5 -1.1l5 -1.1l5 -1.1l5 -1.1l5 -1.2l5 -1.2l5 -1.2l5 -1.2l5 -1.2l5 -1.2l5 -1.2l5 -1.3l5 -1.2l5 -1.3l5 -1.2l5 -1.3l5 -1.2l5 -1.3l5 -1.2l5 -1.3l5 -1.2l5 -1.3V265.5H163Z"/>
<path fill="#fed1d1" d="M163 308.0l5 1.1l5 1.0l5 1.1l5 1.1l5 1.0l5 1.1l5 1.1l5 1.1l5 1.1l5 1.1l5 1.1l5 1.1l5 1.2l5 1.1l5 1.2l5 1.2l5 1.2l5 1.1l5 1.2l5 1.2l5 1.3l5 1.2l5 1.2l5 1.2l5 1.2l5 1.3l5 1.2l5 1.2l5 1.2l5 1.3l5 1.2l5 1.2l5 1.2l5 1.1l5 1.2l5 1.2l5 1.1l5 1.2l5 1.1l5 1.1l5 1.0l5 1.1l5 1.0l5 1.0l5 1.0l5 0.9l5 0.9l5 0.9l5 0.9l5 0.8l5 0.8l5 0.7l5 0.8l5 0.6l5 0.7l5 0.6l5 0.5l5 0.6l5 0.4l5 0.5l5 0.4l5 0.3l5 0.3l5 0.3l5 0.2l5 0.1l5 0.2l5 0.0l5 0.1l5 -0.1l5 0.0l5 -0.1l5 -0.2l5 -0.2l5 -0.2l5 -0.3l5 -0.4l5 -0.4l5 -0.4l5 -0.4l5 -0.6l5 -0.5l5 -0.6l5 -0.6l5 -0.7l5 -0.7l5 -0.7l5 -0.8l5 -0.8l5 -0.9l5 -0.9l5 -0.9l5 -0.9l5 -1.0l5 -1.0l5 -1.0l5 -1.1l5 -1.0l5 -1.1l5 -1.1l5 -1.1l5 -1.2l5 -1.1l5 -1.2l5 -1.2l5 -1.2l5 -1.2l5 -1.2l5 -1.2l5 -1.2l5 -1.3l5 -1.2l5 -1.2l5 -1.2l5 -1.3l5 -1.2l5 -1.2l5 -1.2V265.5H163Z"/>
<path fill="#fdbbbc" d="M163 307.4l5 1.0l5 1.1l5 1.0l5 1.1l5 1.0l5 1.1l5 1.0l5 1.1l5 1.1l5 1.1l5 1.1l5 1.1l5 1.1l5 1.1l5 1.1l5 1.2l5 1.1l5 1.2l5 1.1l5 1.2l5 1.2l5 1.2l5 1.2l5 1.2l5 1.1l5 1.2l5 1.2l5 1.2l5 1.2l5 1.2l5 1.2l5 1.2l5 1.1l5 1.2l5 1.1l5 1.2l5 1.1l5 1.1l5 1.1l5 1.0l5 1.1l5 1.0l5 1.0l5 1.0l5 1.0l5 0.9l5 0.9l5 0.8l5 0.9l5 0.8l5 0.8l5 0.7l5 0.7l5 0.7l5 0.6l5 0.6l5 0.5l5 0.5l5 0.5l5 0.4l5 0.4l5 0.3l5 0.3l5 0.3l5 0.2l5 0.2l5 0.1l5 0.0l5 0.1l5 0.0l5 -0.1l5 -0.1l5 -0.2l5 -0.2l5 -0.2l5 -0.3l5 -0.3l5 -0.4l5 -0.4l5 -0.5l5 -0.5l5 -0.5l5 -0.6l5 -0.6l5 -0.7l5 -0.7l5 -0.7l5 -0.8l5 -0.8l5 -0.8l5 -0.8l5 -0.9l5 -1.0l5 -0.9l5 -1.0l5 -1.0l5 -1.0l5 -1.0l5 -1.1l5 -1.1l5 -1.1l5 -1.1l5 -1.1l5 -1.2l5 -1.1l5 -1.2l5 -1.2l5 -1.2l5 -1.1l5 -1.2l5 -1.2l5 -1.2l5 -1.2l5 -1.2l5 -1.2l5 -1.2l5 -1.2l5 -1.2V265.5H163Z"/>
<path fill="#fca4a4" d="M163 306.8l5 1.0l5 1.0l5 1.0l5 1.1l5 1.0l5 1.0l5 1.1l5 1.0l5 1.1l5 1.0l5 1.1l5 1.1l5 1.1l5 1.0l5 1.1l5 1.2l5 1.1l5 1.1l5 1.1l5 1.2l5 1.1l5 1.2l5 1.1l5 1.2l5 1.2l5 1.1l5 1.2l5 1.1l5 1.2l5 1.2l5 1.1l5 1.2l5 1.1l5 1.1l5 1.2l5 1.1l5 1.0l5 1.1l5 1.1l5 1.0l5 1.1l5 1.0l5 0.9l5 1.0l5 0.9l5 0.9l5 0.9l5 0.9l5 0.8l5 0.8l5 0.7l5 0.7l5 0.7l5 0.7l5 0.6l5 0.6l5 0.5l5 0.5l5 0.5l5 0.4l5 0.3l5 0.4l5 0.3l5 0.2l5 0.2l5 0.2l5 0.1l5 0.1l5 0.0l5 0.0l5 -0.1l5 -0.1l5 -0.1l5 -0.2l5 -0.3l5 -0.3l5 -0.3l5 -0.3l5 -0.5l5 -0.4l5 -0.5l5 -0.5l5 -0.6l5 -0.6l5 -0.6l5 -0.7l5 -0.7l5 -0.8l5 -0.8l5 -0.8l5 -0.8l5 -0.9l5 -0.9l5 -0.9l5 -1.0l5 -0.9l5 -1.0l5 -1.1l5 -1.0l5 -1.1l5 -1.0l5 -1.1l5 -1.1l5 -1.1l5 -1.2l5 -1.1l5 -1.2l5 -1.1l5 -1.2l5 -1.1l5 -1.2l5 -1.1l5 -1.2l5 -1.2l5 -1.1l5 -1.2l5 -1.1l5 -1.2V265.5H163Z"/>
<path fill="#fb8b8c" d="M163 306.1l5 1.1l5 1.0l5 1.0l5 1.0l5 1.0l5 1.0l5 1.0l5 1.0l5 1.1l5 1.0l5 1.0l5 1.1l5 1.0l5 1.1l5 1.1l5 1.0l5 1.1l5 1.1l5 1.1l5 1.1l5 1.2l5 1.1l5 1.1l5 1.1l5 1.2l5 1.1l5 1.1l5 1.2l5 1.1l5 1.1l5 1.1l5 1.2l5 1.1l5 1.1l5 1.1l5 1.0l5 1.1l5 1.1l5 1.0l5 1.0l5 1.0l5 1.0l5 1.0l5 0.9l5 0.9l5 0.9l5 0.8l5 0.9l5 0.8l5 0.7l5 0.8l5 0.7l5 0.7l5 0.6l5 0.6l5 0.6l5 0.5l5 0.5l5 0.4l5 0.4l5 0.4l5 0.3l5 0.3l5 0.2l5 0.2l5 0.2l5 0.1l5 0.1l5 0.0l5 0.0l5 -0.1l5 -0.1l5 -0.1l5 -0.2l5 -0.2l5 -0.3l5 -0.3l5 -0.4l5 -0.4l5 -0.4l5 -0.5l5 -0.5l5 -0.6l5 -0.6l5 -0.6l5 -0.7l5 -0.7l5 -0.7l5 -0.8l5 -0.8l5 -0.8l5 -0.8l5 -0.9l5 -0.9l5 -1.0l5 -0.9l5 -1.0l5 -1.0l5 -1.0l5 -1.0l5 -1.1l5 -1.0l5 -1.1l5 -1.1l5 -1.1l5 -1.1l5 -1.1l5 -1.2l5 -1.1l5 -1.1l5 -1.1l5 -1.2l5 -1.1l5 -1.1l5 -1.2l5 -1.1l5 -1.1l5 -1.1V265.5H163Z"/>
<path fill="#fa7071" d="M163 305.5l5 1.0l5 1.0l5 1.0l5 1.0l5 1.0l5 1.0l5 1.0l5 1.0l5 1.0l5 1.0l5 1.0l5 1.0l5 1.0l5 1.1l5 1.0l5 1.0l5 1.1l5 1.1l5 1.0l5 1.1l5 1.1l5 1.1l5 1.1l5 1.1l5 1.1l5 1.1l5 1.1l5 1.1l5 1.1l5 1.1l5 1.1l5 1.1l5 1.0l5 1.1l5 1.1l5 1.0l5 1.1l5 1.0l5 1.0l5 1.0l5 1.0l5 0.9l5 1.0l5 0.9l5 0.9l5 0.8l5 0.9l5 0.8l5 0.8l5 0.7l5 0.7l5 0.7l5 0.7l5 0.6l5 0.6l5 0.6l5 0.5l5 0.4l5 0.5l5 0.4l5 0.3l5 0.4l5 0.2l5 0.3l5 0.2l5 0.1l5 0.1l5 0.1l5 0.0l5 0.0l5 -0.1l5 -0.1l5 -0.1l5 -0.2l5 -0.2l5 -0.3l5 -0.3l5 -0.3l5 -0.4l5 -0.5l5 -0.4l5 -0.5l5 -0.6l5 -0.6l5 -0.6l5 -0.6l5 -0.7l5 -0.7l5 -0.8l5 -0.8l5 -0.8l5 -0.8l5 -0.9l5 -0.8l5 -0.9l5 -1.0l5 -0.9l5 -1.0l5 -1.0l5 -1.0l5 -1.0l5 -1.1l5 -1.0l5 -1.1l5 -1.0l5 -1.1l5 -1.1l5 -1.1l5 -1.1l5 -1.1l5 -1.1l5 -1.1l5 -1.1l5 -1.1l5 -1.1l5 -1.1l5 -1.1l5 -1.1V265.5H163Z"/>
<path fill="#f95456" d="M163 304.9l5 1.0l5 0.9l5 1.0l5 1.0l5 1.0l5 0.9l5 1.0l5 1.0l5 0.9l5 1.0l5 1.0l5 1.0l5 1.0l5 1.0l5 1.0l5 1.0l5 1.1l5 1.0l5 1.0l5 1.1l5 1.0l5 1.1l5 1.1l5 1.0l5 1.1l5 1.1l5 1.0l5 1.1l5 1.1l5 1.0l5 1.1l5 1.1l5 1.0l5 1.1l5 1.0l5 1.0l5 1.0l5 1.0l5 1.0l5 1.0l5 0.9l5 1.0l5 0.9l5 0.9l5 0.8l5 0.9l5 0.8l5 0.8l5 0.8l5 0.7l5 0.7l5 0.7l5 0.6l5 0.6l5 0.6l5 0.5l5 0.5l5 0.5l5 0.4l5 0.4l5 0.4l5 0.3l5 0.3l5 0.2l5 0.2l5 0.1l5 0.1l5 0.1l5 0.0l5 0.0l5 0.0l5 -0.1l5 -0.2l5 -0.2l5 -0.2l5 -0.2l5 -0.3l5 -0.4l5 -0.4l5 -0.4l5 -0.5l5 -0.5l5 -0.5l5 -0.6l5 -0.6l5 -0.6l5 -0.7l5 -0.7l5 -0.7l5 -0.7l5 -0.8l5 -0.8l5 -0.9l5 -0.8l5 -0.9l5 -0.9l5 -1.0l5 -0.9l5 -1.0l5 -1.0l5 -1.0l5 -1.0l5 -1.0l5 -1.0l5 -1.1l5 -1.0l5 -1.1l5 -1.0l5 -1.1l5 -1.1l5 -1.1l5 -1.0l5 -1.1l5 -1.1l5 -1.0l5 -1.1l5 -1.1l5 -1.0V265.5H163Z"/>
<path fill="#f83739" d="M163 304.2l5 1.0l5 1.0l5 0.9l5 1.0l5 1.0l5 0.9l5 0.9l5 1.0l5 0.9l5 1.0l5 0.9l5 1.0l5 1.0l5 1.0l5 0.9l5 1.0l5 1.0l5 1.0l5 1.0l5 1.0l5 1.1l5 1.0l5 1.0l5 1.1l5 1.0l5 1.0l5 1.1l5 1.0l5 1.1l5 1.0l5 1.0l5 1.1l5 1.0l5 1.0l5 1.0l5 1.0l5 1.0l5 1.0l5 0.9l5 1.0l5 0.9l5 0.9l5 0.9l5 0.9l5 0.8l5 0.8l5 0.8l5 0.8l5 0.8l5 0.7l5 0.7l5 0.6l5 0.7l5 0.6l5 0.5l5 0.5l5 0.5l5 0.5l5 0.4l5 0.4l5 0.3l5 0.3l5 0.3l5 0.2l5 0.2l5 0.2l5 0.1l5 0.0l5 0.1l5 -0.1l5 0.0l5 -0.1l5 -0.2l5 -0.1l5 -0.3l5 -0.2l5 -0.3l5 -0.3l5 -0.4l5 -0.4l5 -0.5l5 -0.5l5 -0.5l5 -0.5l5 -0.6l5 -0.6l5 -0.7l5 -0.7l5 -0.7l5 -0.7l5 -0.8l5 -0.8l5 -0.8l5 -0.9l5 -0.8l5 -0.9l5 -0.9l5 -0.9l5 -1.0l5 -0.9l5 -1.0l5 -1.0l5 -1.0l5 -1.0l5 -1.0l5 -1.0l5 -1.1l5 -1.0l5 -1.0l5 -1.1l5 -1.0l5 -1.1l5 -1.0l5 -1.0l5 -1.1l5 -1.0l5 -1.0l5 -1.0V265.5H163Z"/>
<path fill="#f7191b" d="M163 303.6l5 1.0l5 0.9l5 1.0l5 0.9l5 0.9l5 1.0l5 0.9l5 0.9l5 0.9l5 1.0l5 0.9l5 0.9l5 1.0l5 0.9l5 1.0l5 0.9l5 1.0l5 1.0l5 0.9l5 1.0l5 1.0l5 1.0l5 1.0l5 1.0l5 1.0l5 1.0l5 1.0l5 1.0l5 1.0l5 1.1l5 1.0l5 1.0l5 1.0l5 0.9l5 1.0l5 1.0l5 1.0l5 0.9l5 0.9l5 1.0l5 0.9l5 0.8l5 0.9l5 0.9l5 0.8l5 0.8l5 0.8l5 0.7l5 0.8l5 0.7l5 0.6l5 0.7l5 0.6l5 0.6l5 0.5l5 0.5l5 0.5l5 0.5l5 0.4l5 0.3l5 0.4l5 0.3l5 0.2l5 0.3l5 0.1l5 0.2l5 0.1l5 0.0l5 0.1l5 0.0l5 -0.1l5 -0.1l5 -0.1l5 -0.2l5 -0.2l5 -0.3l5 -0.3l5 -0.3l5 -0.4l5 -0.4l5 -0.4l5 -0.5l5 -0.5l5 -0.5l5 -0.6l5 -0.6l5 -0.6l5 -0.7l5 -0.7l5 -0.7l5 -0.8l5 -0.8l5 -0.8l5 -0.8l5 -0.8l5 -0.9l5 -0.9l5 -0.9l5 -0.9l5 -0.9l5 -1.0l5 -0.9l5 -1.0l5 -1.0l5 -1.0l5 -0.9l5 -1.0l5 -1.0l5 -1.1l5 -1.0l5 -1.0l5 -1.0l5 -1.0l5 -1.0l5 -1.0l5 -1.0l5 -1.0l5 -1.0V265.5H163Z"/>
<path fill="#fff3f3" d="M163 303.0l5 0.9l5 1.0l5 0.9l5 0.9l5 0.9l5 0.9l5 0.9l5 0.9l5 0.9l5 0.9l5 0.9l5 0.9l5 0.9l5 1.0l5 0.9l5 0.9l5 0.9l5 1.0l5 0.9l5 1.0l5 0.9l5 1.0l5 1.0l5 0.9l5 1.0l5 1.0l5 1.0l5 1.0l5 0.9l5 1.0l5 1.0l5 1.0l5 0.9l5 1.0l5 0.9l5 1.0l5 0.9l5 0.9l5 0.9l5 0.9l5 0.9l5 0.9l5 0.8l5 0.9l5 0.8l5 0.7l5 0.8l5 0.7l5 0.8l5 0.6l5 0.7l5 0.6l5 0.6l5 0.6l5 0.5l5 0.5l5 0.5l5 0.4l5 0.4l5 0.4l5 0.3l5 0.3l5 0.3l5 0.2l5 0.2l5 0.1l5 0.1l5 0.1l5 0.0l5 0.0l5 -0.1l5 -0.1l5 -0.1l5 -0.2l5 -0.2l5 -0.2l5 -0.3l5 -0.3l5 -0.4l5 -0.4l5 -0.4l5 -0.5l5 -0.5l5 -0.5l5 -0.6l5 -0.6l5 -0.6l5 -0.6l5 -0.7l5 -0.7l5 -0.7l5 -0.8l5 -0.8l5 -0.8l5 -0.8l5 -0.8l5 -0.9l5 -0.9l5 -0.9l5 -0.9l5 -0.9l5 -0.9l5 -1.0l5 -0.9l5 -1.0l5 -1.0l5 -0.9l5 -1.0l5 -1.0l5 -1.0l5 -0.9l5 -1.0l5 -1.0l5 -1.0l5 -0.9l5 -1.0l5 -1.0l5 -0.9V265.5H163Z"/>
<path fill="#fee4e4" d="M163 302.4l5 0.9l5 0.9l5 1.0l5 0.9l5 0.9l5 0.8l5 0.9l5 0.9l5 0.9l5 0.9l5 0.9l5 0.8l5 0.9l5 0.9l5 0.9l5 0.9l5 0.9l5 0.9l5 1.0l5 0.9l5 0.9l5 1.0l5 0.9l5 0.9l5 1.0l5 0.9l5 1.0l5 1.0l5 0.9l5 1.0l5 0.9l5 1.0l5 0.9l5 1.0l5 0.9l5 0.9l5 0.9l5 0.9l5 0.9l5 0.9l5 0.9l5 0.8l5 0.9l5 0.8l5 0.8l5 0.7l5 0.8l5 0.7l5 0.7l5 0.7l5 0.6l5 0.7l5 0.6l5 0.5l5 0.5l5 0.5l5 0.5l5 0.4l5 0.4l5 0.4l5 0.3l5 0.3l5 0.3l5 0.2l5 0.1l5 0.2l5 0.1l5 0.0l5 0.1l5 0.0l5 -0.1l5 -0.1l5 -0.1l5 -0.2l5 -0.2l5 -0.2l5 -0.3l5 -0.3l5 -0.4l5 -0.4l5 -0.4l5 -0.5l5 -0.5l5 -0.5l5 -0.5l5 -0.6l5 -0.6l5 -0.7l5 -0.6l5 -0.7l5 -0.8l5 -0.7l5 -0.8l5 -0.8l5 -0.8l5 -0.8l5 -0.9l5 -0.8l5 -0.9l5 -0.9l5 -0.9l5 -0.9l5 -0.9l5 -1.0l5 -0.9l5 -0.9l5 -1.0l5 -0.9l5 -1.0l5 -1.0l5 -0.9l5 -1.0l5 -0.9l5 -1.0l5 -0.9l5 -1.0l5 -0.9l5 -0.9V265.5H163Z"/>
<path fill="#fed1d1" d="M163 301.7l5 1.0l5 0.9l5 0.9l5 0.9l5 0.9l5 0.9l5 0.8l5 0.9l5 0.9l5 0.8l5 0.9l5 0.8l5 0.9l5 0.9l5 0.8l5 0.9l5 0.9l5 0.9l5 0.9l5 0.9l5 0.9l5 0.9l5 0.9l5 0.9l5 1.0l5 0.9l5 0.9l5 1.0l5 0.9l5 0.9l5 1.0l5 0.9l5 0.9l5 0.9l5 0.9l5 1.0l5 0.9l5 0.8l5 0.9l5 0.9l5 0.8l5 0.9l5 0.8l5 0.8l5 0.8l5 0.7l5 0.8l5 0.7l5 0.7l5 0.7l5 0.6l5 0.6l5 0.6l5 0.5l5 0.6l5 0.5l5 0.4l5 0.4l5 0.4l5 0.4l5 0.3l5 0.3l5 0.2l5 0.3l5 0.1l5 0.2l5 0.1l5 0.0l5 0.1l5 -0.1l5 0.0l5 -0.1l5 -0.1l5 -0.2l5 -0.2l5 -0.2l5 -0.3l5 -0.3l5 -0.4l5 -0.4l5 -0.4l5 -0.4l5 -0.5l5 -0.5l5 -0.6l5 -0.6l5 -0.6l5 -0.6l5 -0.7l5 -0.7l5 -0.7l5 -0.7l5 -0.8l5 -0.7l5 -0.8l5 -0.9l5 -0.8l5 -0.8l5 -0.9l5 -0.9l5 -0.9l5 -0.9l5 -0.9l5 -0.9l5 -0.9l5 -0.9l5 -1.0l5 -0.9l5 -0.9l5 -1.0l5 -0.9l5 -0.9l5 -0.9l5 -1.0l5 -0.9l5 -0.9l5 -0.9l5 -0.9V265.5H163Z"/>
<path fill="#fdbbbc" d="M163 301.1l5 0.9l5 1.0l5 0.9l5 0.9l5 0.8l5 0.9l5 0.8l5 0.9l5 0.8l5 0.9l5 0.8l5 0.8l5 0.9l5 0.8l5 0.9l5 0.8l5 0.9l5 0.8l5 0.9l5 0.9l5 0.9l5 0.9l5 0.8l5 0.9l5 0.9l5 0.9l5 1.0l5 0.9l5 0.9l5 0.9l5 0.9l5 0.9l5 0.9l5 0.9l5 0.9l5 0.9l5 0.9l5 0.9l5 0.8l5 0.9l5 0.8l5 0.8l5 0.8l5 0.8l5 0.8l5 0.7l5 0.8l5 0.7l5 0.7l5 0.6l5 0.6l5 0.7l5 0.5l5 0.6l5 0.5l5 0.5l5 0.4l5 0.5l5 0.3l5 0.4l5 0.3l5 0.3l5 0.2l5 0.3l5 0.1l5 0.2l5 0.1l5 0.0l5 0.0l5 0.0l5 0.0l5 -0.1l5 -0.1l5 -0.2l5 -0.2l5 -0.3l5 -0.2l5 -0.3l5 -0.4l5 -0.4l5 -0.4l5 -0.4l5 -0.5l5 -0.5l5 -0.6l5 -0.5l5 -0.6l5 -0.7l5 -0.6l5 -0.7l5 -0.7l5 -0.7l5 -0.8l5 -0.7l5 -0.8l5 -0.8l5 -0.8l5 -0.9l5 -0.8l5 -0.9l5 -0.8l5 -0.9l5 -0.9l5 -0.9l5 -0.9l5 -0.9l5 -0.9l5 -0.9l5 -0.9l5 -1.0l5 -0.9l5 -0.9l5 -0.9l5 -0.9l5 -0.9l5 -0.9l5 -0.9l5 -0.8V265.5H163Z"/>
<path fill="#fca4a4" d="M163 300.5l5 0.9l5 0.9l5 0.9l5 0.9l5 0.9l5 0.8l5 0.9l5 0.8l5 0.8l5 0.8l5 0.8l5 0.8l5 0.9l5 0.8l5 0.8l5 0.8l5 0.9l5 0.8l5 0.8l5 0.9l5 0.8l5 0.9l5 0.9l5 0.8l5 0.9l5 0.9l5 0.9l5 0.9l5 0.9l5 0.8l5 0.9l5 0.9l5 0.9l5 0.9l5 0.9l5 0.8l5 0.9l5 0.9l5 0.8l5 0.8l5 0.9l5 0.8l5 0.8l5 0.7l5 0.8l5 0.7l5 0.8l5 0.7l5 0.6l5 0.7l5 0.6l5 0.6l5 0.6l5 0.5l5 0.5l5 0.5l5 0.4l5 0.5l5 0.3l5 0.4l5 0.3l5 0.3l5 0.2l5 0.2l5 0.2l5 0.1l5 0.1l5 0.1l5 0.0l5 0.0l5 0.0l5 -0.1l5 -0.2l5 -0.1l5 -0.2l5 -0.3l5 -0.2l5 -0.3l5 -0.4l5 -0.4l5 -0.4l5 -0.4l5 -0.5l5 -0.5l5 -0.5l5 -0.6l5 -0.6l5 -0.6l5 -0.6l5 -0.7l5 -0.7l5 -0.7l5 -0.8l5 -0.7l5 -0.8l5 -0.8l5 -0.8l5 -0.8l5 -0.8l5 -0.9l5 -0.8l5 -0.9l5 -0.9l5 -0.8l5 -0.9l5 -0.9l5 -0.9l5 -0.9l5 -0.9l5 -0.9l5 -0.8l5 -0.9l5 -0.9l5 -0.9l5 -0.9l5 -0.8l5 -0.9l5 -0.8V265.5H163Z"/>
<path fill="#fb8b8c" d="M163 299.8l5 1.0l5 0.9l5 0.9l5 0.9l5 0.8l5 0.8l5 0.9l5 0.8l5 0.8l5 0.8l5 0.8l5 0.7l5 0.8l5 0.8l5 0.8l5 0.8l5 0.8l5 0.8l5 0.9l5 0.8l5 0.8l5 0.9l5 0.8l5 0.8l5 0.9l5 0.8l5 0.9l5 0.9l5 0.8l5 0.9l5 0.9l5 0.8l5 0.9l5 0.9l5 0.8l5 0.9l5 0.8l5 0.9l5 0.8l5 0.8l5 0.8l5 0.8l5 0.8l5 0.8l5 0.7l5 0.7l5 0.7l5 0.7l5 0.7l5 0.6l5 0.6l5 0.6l5 0.6l5 0.5l5 0.5l5 0.5l5 0.5l5 0.4l5 0.3l5 0.4l5 0.3l5 0.3l5 0.2l5 0.2l5 0.2l5 0.1l5 0.1l5 0.1l5 0.0l5 0.0l5 -0.1l5 0.0l5 -0.2l5 -0.1l5 -0.2l5 -0.3l5 -0.2l5 -0.3l5 -0.4l5 -0.4l5 -0.4l5 -0.4l5 -0.5l5 -0.5l5 -0.5l5 -0.5l5 -0.6l5 -0.6l5 -0.7l5 -0.6l5 -0.7l5 -0.7l5 -0.7l5 -0.8l5 -0.8l5 -0.7l5 -0.8l5 -0.8l5 -0.8l5 -0.9l5 -0.8l5 -0.9l5 -0.8l5 -0.9l5 -0.8l5 -0.9l5 -0.9l5 -0.8l5 -0.9l5 -0.9l5 -0.8l5 -0.9l5 -0.8l5 -0.9l5 -0.8l5 -0.9l5 -0.8l5 -0.8V265.5H163Z"/>
<path fill="#fa7071" d="M163 299.2l5 1.0l5 0.9l5 0.9l5 0.8l5 0.8l5 0.9l5 0.8l5 0.8l5 0.7l5 0.8l5 0.8l5 0.8l5 0.7l5 0.8l5 0.8l5 0.7l5 0.8l5 0.8l5 0.8l5 0.8l5 0.8l5 0.8l5 0.8l5 0.8l5 0.9l5 0.8l5 0.8l5 0.9l5 0.8l5 0.9l5 0.8l5 0.9l5 0.8l5 0.8l5 0.9l5 0.8l5 0.8l5 0.9l5 0.8l5 0.8l5 0.8l5 0.8l5 0.7l5 0.8l5 0.7l5 0.7l5 0.7l5 0.7l5 0.7l5 0.6l5 0.6l5 0.6l5 0.5l5 0.6l5 0.5l5 0.4l5 0.5l5 0.4l5 0.4l5 0.3l5 0.3l5 0.3l5 0.2l5 0.2l5 0.2l5 0.1l5 0.1l5 0.1l5 0.0l5 0.0l5 -0.1l5 -0.1l5 -0.1l5 -0.1l5 -0.2l5 -0.3l5 -0.2l5 -0.3l5 -0.4l5 -0.3l5 -0.4l5 -0.5l5 -0.4l5 -0.5l5 -0.6l5 -0.5l5 -0.6l5 -0.6l5 -0.6l5 -0.7l5 -0.6l5 -0.7l5 -0.7l5 -0.8l5 -0.7l5 -0.8l5 -0.8l5 -0.8l5 -0.8l5 -0.8l5 -0.8l5 -0.8l5 -0.9l5 -0.8l5 -0.8l5 -0.9l5 -0.8l5 -0.9l5 -0.8l5 -0.9l5 -0.8l5 -0.8l5 -0.9l5 -0.8l5 -0.8l5 -0.8l5 -0.8l5 -0.9V265.5H163Z"/>
<path fill="#f95456" d="M163 298.6l5 0.9l5 0.9l5 0.9l5 0.9l5 0.8l5 0.8l5 0.8l5 0.7l5 0.8l5 0.8l5 0.7l5 0.8l5 0.7l5 0.7l5 0.8l5 0.7l5 0.8l5 0.8l5 0.7l5 0.8l5 0.8l5 0.7l5 0.8l5 0.8l5 0.8l5 0.8l5 0.9l5 0.8l5 0.8l5 0.8l5 0.8l5 0.9l5 0.8l5 0.8l5 0.8l5 0.9l5 0.8l5 0.8l5 0.8l5 0.8l5 0.7l5 0.8l5 0.8l5 0.7l5 0.7l5 0.7l5 0.7l5 0.7l5 0.6l5 0.7l5 0.6l5 0.5l5 0.6l5 0.5l5 0.5l5 0.4l5 0.5l5 0.4l5 0.4l5 0.3l5 0.3l5 0.3l5 0.2l5 0.2l5 0.2l5 0.1l5 0.1l5 0.1l5 0.0l5 0.0l5 -0.1l5 -0.1l5 -0.1l5 -0.2l5 -0.2l5 -0.2l5 -0.2l5 -0.3l5 -0.4l5 -0.3l5 -0.4l5 -0.5l5 -0.4l5 -0.5l5 -0.5l5 -0.6l5 -0.5l5 -0.6l5 -0.6l5 -0.7l5 -0.6l5 -0.7l5 -0.7l5 -0.8l5 -0.7l5 -0.7l5 -0.8l5 -0.8l5 -0.8l5 -0.8l5 -0.8l5 -0.8l5 -0.8l5 -0.8l5 -0.8l5 -0.9l5 -0.8l5 -0.8l5 -0.8l5 -0.9l5 -0.8l5 -0.8l5 -0.8l5 -0.8l5 -0.8l5 -0.8l5 -0.8l5 -0.8V265.5H163Z"/>
<path fill="#f83739" d="M163 297.9l5 1.0l5 0.9l5 0.9l5 0.8l5 0.8l5 0.8l5 0.8l5 0.7l5 0.8l5 0.7l5 0.7l5 0.8l5 0.7l5 0.7l5 0.7l5 0.7l5 0.8l5 0.7l5 0.7l5 0.8l5 0.7l5 0.8l5 0.8l5 0.7l5 0.8l5 0.8l5 0.8l5 0.8l5 0.8l5 0.8l5 0.8l5 0.8l5 0.8l5 0.8l5 0.8l5 0.8l5 0.8l5 0.8l5 0.8l5 0.7l5 0.8l5 0.8l5 0.7l5 0.7l5 0.7l5 0.7l5 0.7l5 0.7l5 0.6l5 0.6l5 0.6l5 0.6l5 0.5l5 0.5l5 0.5l5 0.5l5 0.4l5 0.4l5 0.4l5 0.3l5 0.3l5 0.3l5 0.2l5 0.2l5 0.2l5 0.1l5 0.1l5 0.0l5 0.1l5 -0.1l5 0.0l5 -0.1l5 -0.1l5 -0.2l5 -0.2l5 -0.2l5 -0.2l5 -0.3l5 -0.4l5 -0.3l5 -0.4l5 -0.4l5 -0.5l5 -0.5l5 -0.5l5 -0.5l5 -0.6l5 -0.6l5 -0.6l5 -0.6l5 -0.7l5 -0.6l5 -0.7l5 -0.7l5 -0.8l5 -0.7l5 -0.7l5 -0.8l5 -0.8l5 -0.8l5 -0.7l5 -0.8l5 -0.8l5 -0.8l5 -0.8l5 -0.9l5 -0.8l5 -0.8l5 -0.8l5 -0.8l5 -0.8l5 -0.7l5 -0.8l5 -0.8l5 -0.8l5 -0.8l5 -0.7l5 -0.8V265.5H163Z"/>
<path fill="#f7191b" d="M163 297.3l5 1.0l5 0.9l5 0.8l5 0.9l5 0.8l5 0.7l5 0.8l5 0.7l5 0.7l5 0.8l5 0.7l5 0.7l5 0.7l5 0.7l5 0.6l5 0.7l5 0.8l5 0.7l5 0.7l5 0.7l5 0.7l5 0.7l5 0.8l5 0.7l5 0.8l5 0.7l5 0.8l5 0.8l5 0.8l5 0.7l5 0.8l5 0.8l5 0.8l5 0.8l5 0.8l5 0.7l5 0.8l5 0.8l5 0.8l5 0.7l5 0.8l5 0.7l5 0.7l5 0.7l5 0.7l5 0.7l5 0.7l5 0.6l5 0.7l5 0.6l5 0.6l5 0.5l5 0.5l5 0.6l5 0.4l5 0.5l5 0.4l5 0.4l5 0.4l5 0.3l5 0.3l5 0.3l5 0.2l5 0.2l5 0.1l5 0.2l5 0.1l5 0.0l5 0.0l5 0.0l5 0.0l5 -0.1l5 -0.1l5 -0.2l5 -0.2l5 -0.2l5 -0.3l5 -0.2l5 -0.4l5 -0.3l5 -0.4l5 -0.4l5 -0.5l5 -0.4l5 -0.6l5 -0.5l5 -0.5l5 -0.6l5 -0.6l5 -0.6l5 -0.7l5 -0.6l5 -0.7l5 -0.7l5 -0.7l5 -0.8l5 -0.7l5 -0.7l5 -0.8l5 -0.8l5 -0.7l5 -0.8l5 -0.8l5 -0.8l5 -0.8l5 -0.7l5 -0.8l5 -0.8l5 -0.8l5 -0.8l5 -0.7l5 -0.8l5 -0.8l5 -0.7l5 -0.8l5 -0.7l5 -0.7l5 -0.8V265.5H163Z"/>
<path fill="#fff3f3" d="M163 296.7l5 0.9l5 0.9l5 0.9l5 0.8l5 0.8l5 0.8l5 0.7l5 0.7l5 0.7l5 0.7l5 0.7l5 0.7l5 0.6l5 0.7l5 0.7l5 0.7l5 0.6l5 0.7l5 0.7l5 0.7l5 0.7l5 0.7l5 0.7l5 0.7l5 0.8l5 0.7l5 0.7l5 0.8l5 0.7l5 0.8l5 0.8l5 0.7l5 0.8l5 0.7l5 0.8l5 0.8l5 0.7l5 0.8l5 0.7l5 0.8l5 0.7l5 0.7l5 0.8l5 0.7l5 0.7l5 0.6l5 0.7l5 0.6l5 0.6l5 0.6l5 0.6l5 0.6l5 0.5l5 0.5l5 0.5l5 0.4l5 0.4l5 0.4l5 0.4l5 0.3l5 0.3l5 0.3l5 0.2l5 0.2l5 0.1l5 0.2l5 0.1l5 0.0l5 0.0l5 0.0l5 0.0l5 -0.1l5 -0.1l5 -0.2l5 -0.2l5 -0.2l5 -0.3l5 -0.2l5 -0.4l5 -0.3l5 -0.4l5 -0.4l5 -0.5l5 -0.4l5 -0.5l5 -0.5l5 -0.6l5 -0.6l5 -0.5l5 -0.7l5 -0.6l5 -0.6l5 -0.7l5 -0.7l5 -0.7l5 -0.7l5 -0.7l5 -0.8l5 -0.7l5 -0.8l5 -0.7l5 -0.8l5 -0.7l5 -0.8l5 -0.8l5 -0.7l5 -0.8l5 -0.8l5 -0.7l5 -0.8l5 -0.7l5 -0.8l5 -0.7l5 -0.7l5 -0.7l5 -0.8l5 -0.7l5 -0.7V265.5H163Z"/>
<path fill="#fee4e4" d="M163 296.2l5 0.9l5 0.8l5 0.9l5 0.8l5 0.7l5 0.8l5 0.7l5 0.7l5 0.7l5 0.6l5 0.7l5 0.7l5 0.6l5 0.7l5 0.7l5 0.6l5 0.7l5 0.7l5 0.7l5 0.6l5 0.7l5 0.7l5 0.7l5 0.8l5 0.7l5 0.7l5 0.7l5 0.8l5 0.7l5 0.8l5 0.7l5 0.8l5 0.7l5 0.8l5 0.7l5 0.8l5 0.7l5 0.8l5 0.7l5 0.7l5 0.7l5 0.7l5 0.7l5 0.7l5 0.7l5 0.7l5 0.6l5 0.6l5 0.6l5 0.6l5 0.6l5 0.5l5 0.5l5 0.5l5 0.5l5 0.4l5 0.4l5 0.4l5 0.4l5 0.3l5 0.3l5 0.2l5 0.2l5 0.2l5 0.2l5 0.1l5 0.1l5 0.0l5 0.1l5 0.0l5 -0.1l5 -0.1l5 -0.1l5 -0.1l5 -0.2l5 -0.2l5 -0.3l5 -0.3l5 -0.3l5 -0.3l5 -0.4l5 -0.4l5 -0.4l5 -0.5l5 -0.5l5 -0.5l5 -0.5l5 -0.6l5 -0.5l5 -0.6l5 -0.7l5 -0.6l5 -0.7l5 -0.6l5 -0.7l5 -0.7l5 -0.7l5 -0.7l5 -0.8l5 -0.7l5 -0.7l5 -0.8l5 -0.7l5 -0.8l5 -0.7l5 -0.8l5 -0.7l5 -0.8l5 -0.7l5 -0.8l5 -0.7l5 -0.8l5 -0.7l5 -0.7l5 -0.7l5 -0.7l5 -0.7l5 -0.7V265.5H163Z"/>
<path fill="#fed1d1" d="M163 295.6l5 0.9l5 0.8l5 0.8l5 0.8l5 0.7l5 0.8l5 0.7l5 0.6l5 0.7l5 0.7l5 0.6l5 0.7l5 0.7l5 0.6l5 0.7l5 0.6l5 0.7l5 0.6l5 0.7l5 0.7l5 0.7l5 0.7l5 0.7l5 0.7l5 0.7l5 0.7l5 0.7l5 0.7l5 0.8l5 0.7l5 0.8l5 0.7l5 0.7l5 0.8l5 0.7l5 0.8l5 0.7l5 0.7l5 0.7l5 0.7l5 0.8l5 0.6l5 0.7l5 0.7l5 0.7l5 0.6l5 0.6l5 0.6l5 0.6l5 0.6l5 0.5l5 0.6l5 0.5l5 0.5l5 0.4l5 0.4l5 0.4l5 0.4l5 0.3l5 0.3l5 0.3l5 0.3l5 0.2l5 0.2l5 0.1l5 0.2l5 0.0l5 0.1l5 0.0l5 0.0l5 0.0l5 -0.1l5 -0.1l5 -0.2l5 -0.2l5 -0.2l5 -0.2l5 -0.3l5 -0.3l5 -0.3l5 -0.4l5 -0.4l5 -0.4l5 -0.5l5 -0.4l5 -0.5l5 -0.5l5 -0.6l5 -0.6l5 -0.5l5 -0.6l5 -0.7l5 -0.6l5 -0.7l5 -0.6l5 -0.7l5 -0.7l5 -0.7l5 -0.7l5 -0.7l5 -0.8l5 -0.7l5 -0.7l5 -0.8l5 -0.7l5 -0.8l5 -0.7l5 -0.7l5 -0.8l5 -0.7l5 -0.7l5 -0.8l5 -0.7l5 -0.7l5 -0.7l5 -0.7l5 -0.7l5 -0.7V265.5H163Z"/>
<path fill="#fdbbbc" d="M163 295.1l5 0.8l5 0.8l5 0.8l5 0.7l5 0.8l5 0.7l5 0.6l5 0.7l5 0.7l5 0.6l5 0.7l5 0.6l5 0.7l5 0.6l5 0.7l5 0.6l5 0.7l5 0.6l5 0.7l5 0.7l5 0.6l5 0.7l5 0.7l5 0.7l5 0.7l5 0.7l5 0.7l5 0.7l5 0.8l5 0.7l5 0.7l5 0.7l5 0.8l5 0.7l5 0.7l5 0.7l5 0.8l5 0.7l5 0.7l5 0.7l5 0.7l5 0.6l5 0.7l5 0.7l5 0.6l5 0.6l5 0.7l5 0.6l5 0.5l5 0.6l5 0.5l5 0.5l5 0.5l5 0.5l5 0.4l5 0.4l5 0.4l5 0.4l5 0.3l5 0.3l5 0.3l5 0.2l5 0.3l5 0.1l5 0.2l5 0.1l5 0.1l5 0.0l5 0.1l5 -0.1l5 0.0l5 -0.1l5 -0.1l5 -0.1l5 -0.2l5 -0.2l5 -0.3l5 -0.2l5 -0.3l5 -0.3l5 -0.4l5 -0.4l5 -0.4l5 -0.4l5 -0.5l5 -0.5l5 -0.5l5 -0.5l5 -0.6l5 -0.5l5 -0.6l5 -0.6l5 -0.7l5 -0.6l5 -0.6l5 -0.7l5 -0.7l5 -0.7l5 -0.7l5 -0.7l5 -0.7l5 -0.7l5 -0.7l5 -0.8l5 -0.7l5 -0.7l5 -0.8l5 -0.7l5 -0.7l5 -0.7l5 -0.7l5 -0.8l5 -0.7l5 -0.7l5 -0.7l5 -0.7l5 -0.6l5 -0.7V265.5H163Z"/>
<path fill="#fca4a4" d="M163 294.6l5 0.8l5 0.7l5 0.8l5 0.7l5 0.7l5 0.7l5 0.6l5 0.7l5 0.6l5 0.7l5 0.6l5 0.6l5 0.7l5 0.6l5 0.6l5 0.7l5 0.6l5 0.7l5 0.6l5 0.7l5 0.7l5 0.6l5 0.7l5 0.7l5 0.7l5 0.7l5 0.7l5 0.7l5 0.7l5 0.7l5 0.8l5 0.7l5 0.7l5 0.7l5 0.7l5 0.7l5 0.7l5 0.7l5 0.7l5 0.7l5 0.7l5 0.6l5 0.7l5 0.6l5 0.7l5 0.6l5 0.6l5 0.6l5 0.5l5 0.6l5 0.5l5 0.5l5 0.5l5 0.4l5 0.5l5 0.4l5 0.3l5 0.4l5 0.3l5 0.3l5 0.3l5 0.2l5 0.2l5 0.2l5 0.1l5 0.1l5 0.1l5 0.1l5 0.0l5 0.0l5 -0.1l5 0.0l5 -0.1l5 -0.2l5 -0.2l5 -0.2l5 -0.2l5 -0.2l5 -0.3l5 -0.3l5 -0.4l5 -0.4l5 -0.4l5 -0.4l5 -0.4l5 -0.5l5 -0.5l5 -0.5l5 -0.6l5 -0.5l5 -0.6l5 -0.6l5 -0.6l5 -0.6l5 -0.7l5 -0.6l5 -0.7l5 -0.7l5 -0.6l5 -0.7l5 -0.7l5 -0.7l5 -0.7l5 -0.8l5 -0.7l5 -0.7l5 -0.7l5 -0.7l5 -0.7l5 -0.7l5 -0.7l5 -0.8l5 -0.7l5 -0.6l5 -0.7l5 -0.7l5 -0.7l5 -0.7V265.5H163Z"/>
<path fill="#fb8b8c" d="M163 294.0l5 0.8l5 0.7l5 0.7l5 0.7l5 0.7l5 0.7l5 0.6l5 0.7l5 0.6l5 0.6l5 0.6l5 0.7l5 0.6l5 0.6l5 0.6l5 0.7l5 0.6l5 0.7l5 0.6l5 0.7l5 0.6l5 0.7l5 0.7l5 0.6l5 0.7l5 0.7l5 0.7l5 0.7l5 0.7l5 0.7l5 0.7l5 0.7l5 0.7l5 0.7l5 0.7l5 0.7l5 0.7l5 0.7l5 0.7l5 0.6l5 0.7l5 0.6l5 0.7l5 0.6l5 0.6l5 0.6l5 0.6l5 0.6l5 0.5l5 0.6l5 0.5l5 0.5l5 0.4l5 0.5l5 0.4l5 0.4l5 0.3l5 0.4l5 0.3l5 0.3l5 0.2l5 0.3l5 0.2l5 0.1l5 0.2l5 0.1l5 0.1l5 0.0l5 0.0l5 0.0l5 0.0l5 -0.1l5 -0.1l5 -0.1l5 -0.2l5 -0.2l5 -0.2l5 -0.3l5 -0.2l5 -0.4l5 -0.3l5 -0.4l5 -0.3l5 -0.5l5 -0.4l5 -0.5l5 -0.4l5 -0.5l5 -0.6l5 -0.5l5 -0.6l5 -0.6l5 -0.5l5 -0.7l5 -0.6l5 -0.6l5 -0.7l5 -0.6l5 -0.7l5 -0.7l5 -0.7l5 -0.7l5 -0.6l5 -0.7l5 -0.7l5 -0.8l5 -0.7l5 -0.7l5 -0.7l5 -0.7l5 -0.7l5 -0.7l5 -0.6l5 -0.7l5 -0.7l5 -0.7l5 -0.6l5 -0.7V265.5H163Z"/>
<path fill="#fa7071" d="M163 293.5l5 0.7l5 0.7l5 0.7l5 0.7l5 0.6l5 0.7l5 0.6l5 0.6l5 0.6l5 0.7l5 0.6l5 0.6l5 0.6l5 0.6l5 0.6l5 0.7l5 0.6l5 0.6l5 0.7l5 0.6l5 0.7l5 0.6l5 0.7l5 0.7l5 0.6l5 0.7l5 0.7l5 0.7l5 0.7l5 0.7l5 0.7l5 0.6l5 0.7l5 0.7l5 0.7l5 0.7l5 0.7l5 0.6l5 0.7l5 0.7l5 0.6l5 0.7l5 0.6l5 0.6l5 0.6l5 0.6l5 0.5l5 0.6l5 0.5l5 0.5l5 0.5l5 0.5l5 0.5l5 0.4l5 0.4l5 0.4l5 0.3l5 0.4l5 0.3l5 0.3l5 0.2l5 0.2l5 0.2l5 0.2l5 0.1l5 0.1l5 0.1l5 0.1l5 0.0l5 0.0l5 -0.1l5 -0.1l5 -0.1l5 -0.1l5 -0.1l5 -0.2l5 -0.2l5 -0.3l5 -0.3l5 -0.3l5 -0.3l5 -0.3l5 -0.4l5 -0.4l5 -0.4l5 -0.5l5 -0.5l5 -0.5l5 -0.5l5 -0.5l5 -0.5l5 -0.6l5 -0.6l5 -0.6l5 -0.6l5 -0.6l5 -0.7l5 -0.6l5 -0.7l5 -0.6l5 -0.7l5 -0.7l5 -0.7l5 -0.6l5 -0.7l5 -0.7l5 -0.7l5 -0.7l5 -0.7l5 -0.7l5 -0.7l5 -0.7l5 -0.6l5 -0.7l5 -0.7l5 -0.6l5 -0.7l5 -0.7V265.5H163Z"/>
<path fill="#f95456" d="M163 293.0l5 0.7l5 0.6l5 0.7l5 0.6l5 0.7l5 0.6l5 0.6l5 0.6l5 0.6l5 0.6l5 0.6l5 0.6l5 0.6l5 0.6l5 0.6l5 0.6l5 0.7l5 0.6l5 0.6l5 0.7l5 0.6l5 0.7l5 0.6l5 0.7l5 0.6l5 0.7l5 0.7l5 0.7l5 0.6l5 0.7l5 0.7l5 0.7l5 0.7l5 0.6l5 0.7l5 0.7l5 0.6l5 0.7l5 0.7l5 0.6l5 0.6l5 0.7l5 0.6l5 0.6l5 0.5l5 0.6l5 0.6l5 0.5l5 0.5l5 0.5l5 0.5l5 0.5l5 0.4l5 0.4l5 0.4l5 0.4l5 0.3l5 0.4l5 0.3l5 0.2l5 0.3l5 0.2l5 0.2l5 0.1l5 0.2l5 0.1l5 0.1l5 0.0l5 0.0l5 0.0l5 0.0l5 -0.1l5 -0.1l5 -0.1l5 -0.2l5 -0.2l5 -0.2l5 -0.2l5 -0.3l5 -0.3l5 -0.3l5 -0.3l5 -0.4l5 -0.4l5 -0.4l5 -0.4l5 -0.5l5 -0.5l5 -0.5l5 -0.5l5 -0.5l5 -0.6l5 -0.5l5 -0.6l5 -0.6l5 -0.6l5 -0.6l5 -0.7l5 -0.6l5 -0.7l5 -0.6l5 -0.7l5 -0.7l5 -0.6l5 -0.7l5 -0.7l5 -0.7l5 -0.6l5 -0.7l5 -0.7l5 -0.7l5 -0.6l5 -0.7l5 -0.7l5 -0.6l5 -0.7l5 -0.7l5 -0.6V265.5H163Z"/>
<path fill="#f83739" d="M163 292.4l5 0.7l5 0.6l5 0.7l5 0.6l5 0.6l5 0.6l5 0.6l5 0.6l5 0.5l5 0.6l5 0.6l5 0.6l5 0.6l5 0.6l5 0.6l5 0.6l5 0.6l5 0.7l5 0.6l5 0.6l5 0.7l5 0.6l5 0.7l5 0.6l5 0.7l5 0.6l5 0.7l5 0.6l5 0.7l5 0.7l5 0.7l5 0.6l5 0.7l5 0.7l5 0.6l5 0.7l5 0.6l5 0.7l5 0.6l5 0.6l5 0.6l5 0.7l5 0.5l5 0.6l5 0.6l5 0.6l5 0.5l5 0.5l5 0.5l5 0.5l5 0.5l5 0.4l5 0.5l5 0.4l5 0.3l5 0.4l5 0.3l5 0.4l5 0.2l5 0.3l5 0.2l5 0.3l5 0.1l5 0.2l5 0.1l5 0.1l5 0.1l5 0.0l5 0.1l5 -0.1l5 0.0l5 -0.1l5 -0.1l5 -0.1l5 -0.1l5 -0.2l5 -0.2l5 -0.2l5 -0.3l5 -0.3l5 -0.3l5 -0.3l5 -0.4l5 -0.4l5 -0.4l5 -0.4l5 -0.4l5 -0.5l5 -0.5l5 -0.5l5 -0.5l5 -0.5l5 -0.6l5 -0.6l5 -0.5l5 -0.6l5 -0.6l5 -0.7l5 -0.6l5 -0.6l5 -0.7l5 -0.6l5 -0.7l5 -0.6l5 -0.7l5 -0.6l5 -0.7l5 -0.7l5 -0.7l5 -0.6l5 -0.7l5 -0.6l5 -0.7l5 -0.7l5 -0.6l5 -0.7l5 -0.6l5 -0.7V265.5H163Z"/>
<path fill="#f7191b" d="M163 291.9l5 0.6l5 0.6l5 0.6l5 0.6l5 0.6l5 0.6l5 0.6l5 0.5l5 0.6l5 0.6l5 0.6l5 0.5l5 0.6l5 0.6l5 0.6l5 0.6l5 0.6l5 0.6l5 0.7l5 0.6l5 0.6l5 0.6l5 0.7l5 0.6l5 0.7l5 0.6l5 0.7l5 0.6l5 0.7l5 0.6l5 0.7l5 0.7l5 0.6l5 0.7l5 0.6l5 0.7l5 0.6l5 0.6l5 0.6l5 0.7l5 0.6l5 0.6l5 0.5l5 0.6l5 0.6l5 0.5l5 0.5l5 0.5l5 0.5l5 0.5l5 0.5l5 0.4l5 0.4l5 0.4l5 0.4l5 0.3l5 0.3l5 0.4l5 0.2l5 0.3l5 0.2l5 0.2l5 0.2l5 0.1l5 0.2l5 0.1l5 0.0l5 0.1l5 0.0l5 0.0l5 -0.1l5 0.0l5 -0.1l5 -0.1l5 -0.2l5 -0.1l5 -0.2l5 -0.3l5 -0.2l5 -0.3l5 -0.3l5 -0.3l5 -0.4l5 -0.3l5 -0.4l5 -0.4l5 -0.5l5 -0.4l5 -0.5l5 -0.5l5 -0.5l5 -0.5l5 -0.5l5 -0.6l5 -0.6l5 -0.5l5 -0.6l5 -0.6l5 -0.6l5 -0.7l5 -0.6l5 -0.6l5 -0.7l5 -0.6l5 -0.7l5 -0.6l5 -0.7l5 -0.6l5 -0.7l5 -0.6l5 -0.7l5 -0.6l5 -0.7l5 -0.6l5 -0.7l5 -0.6l5 -0.7l5 -0.6V265.5H163Z"/>
<path fill="#fff3f3" d="M163 291.4l5 0.6l5 0.5l5 0.6l5 0.6l5 0.5l5 0.6l5 0.5l5 0.6l5 0.6l5 0.5l5 0.6l5 0.6l5 0.5l5 0.6l5 0.6l5 0.6l5 0.6l5 0.6l5 0.6l5 0.6l5 0.7l5 0.6l5 0.6l5 0.6l5 0.7l5 0.6l5 0.7l5 0.6l5 0.7l5 0.6l5 0.7l5 0.6l5 0.6l5 0.7l5 0.6l5 0.6l5 0.7l5 0.6l5 0.6l5 0.6l5 0.6l5 0.6l5 0.5l5 0.6l5 0.5l5 0.5l5 0.6l5 0.4l5 0.5l5 0.5l5 0.4l5 0.4l5 0.5l5 0.3l5 0.4l5 0.3l5 0.4l5 0.2l5 0.3l5 0.3l5 0.2l5 0.2l5 0.2l5 0.1l5 0.1l5 0.1l5 0.1l5 0.0l5 0.0l5 0.0l5 0.0l5 -0.1l5 -0.1l5 -0.1l5 -0.1l5 -0.2l5 -0.2l5 -0.2l5 -0.2l5 -0.3l5 -0.3l5 -0.3l5 -0.3l5 -0.4l5 -0.4l5 -0.4l5 -0.4l5 -0.4l5 -0.5l5 -0.5l5 -0.4l5 -0.6l5 -0.5l5 -0.5l5 -0.6l5 -0.5l5 -0.6l5 -0.6l5 -0.6l5 -0.6l5 -0.6l5 -0.6l5 -0.7l5 -0.6l5 -0.6l5 -0.7l5 -0.6l5 -0.7l5 -0.6l5 -0.7l5 -0.6l5 -0.6l5 -0.7l5 -0.6l5 -0.7l5 -0.6l5 -0.6l5 -0.6V265.5H163Z"/>
<path fill="#fee4e4" d="M163 290.8l5 0.6l5 0.5l5 0.6l5 0.5l5 0.6l5 0.5l5 0.6l5 0.5l5 0.6l5 0.6l5 0.5l5 0.6l5 0.6l5 0.5l5 0.6l5 0.6l5 0.6l5 0.6l5 0.6l5 0.6l5 0.6l5 0.7l5 0.6l5 0.6l5 0.6l5 0.7l5 0.6l5 0.6l5 0.7l5 0.6l5 0.7l5 0.6l5 0.6l5 0.6l5 0.7l5 0.6l5 0.6l5 0.6l5 0.6l5 0.6l5 0.6l5 0.5l5 0.6l5 0.5l5 0.5l5 0.6l5 0.5l5 0.4l5 0.5l5 0.5l5 0.4l5 0.4l5 0.4l5 0.4l5 0.3l5 0.4l5 0.3l5 0.2l5 0.3l5 0.3l5 0.2l5 0.2l5 0.1l5 0.2l5 0.1l5 0.1l5 0.0l5 0.1l5 0.0l5 0.0l5 0.0l5 -0.1l5 -0.1l5 -0.1l5 -0.1l5 -0.2l5 -0.2l5 -0.2l5 -0.2l5 -0.3l5 -0.3l5 -0.3l5 -0.3l5 -0.4l5 -0.3l5 -0.4l5 -0.4l5 -0.5l5 -0.4l5 -0.5l5 -0.4l5 -0.5l5 -0.5l5 -0.6l5 -0.5l5 -0.6l5 -0.5l5 -0.6l5 -0.6l5 -0.6l5 -0.6l5 -0.6l5 -0.6l5 -0.6l5 -0.7l5 -0.6l5 -0.6l5 -0.7l5 -0.6l5 -0.6l5 -0.7l5 -0.6l5 -0.6l5 -0.7l5 -0.6l5 -0.6l5 -0.6l5 -0.6V265.5H163Z"/>
<path fill="#fed1d1" d="M163 290.2l5 0.6l5 0.5l5 0.6l5 0.5l5 0.6l5 0.5l5 0.6l5 0.5l5 0.6l5 0.5l5 0.6l5 0.5l5 0.6l5 0.6l5 0.6l5 0.5l5 0.6l5 0.6l5 0.6l5 0.6l5 0.6l5 0.6l5 0.7l5 0.6l5 0.6l5 0.6l5 0.7l5 0.6l5 0.6l5 0.6l5 0.7l5 0.6l5 0.6l5 0.6l5 0.6l5 0.6l5 0.6l5 0.6l5 0.6l5 0.6l5 0.5l5 0.6l5 0.5l5 0.6l5 0.5l5 0.5l5 0.5l5 0.4l5 0.5l5 0.4l5 0.5l5 0.4l5 0.3l5 0.4l5 0.4l5 0.3l5 0.3l5 0.3l5 0.2l5 0.2l5 0.3l5 0.1l5 0.2l5 0.1l5 0.2l5 0.0l5 0.1l5 0.0l5 0.1l5 0.0l5 -0.1l5 0.0l5 -0.1l5 -0.1l5 -0.2l5 -0.1l5 -0.2l5 -0.2l5 -0.2l5 -0.3l5 -0.3l5 -0.3l5 -0.3l5 -0.3l5 -0.4l5 -0.4l5 -0.4l5 -0.4l5 -0.4l5 -0.5l5 -0.4l5 -0.5l5 -0.5l5 -0.5l5 -0.6l5 -0.5l5 -0.5l5 -0.6l5 -0.6l5 -0.6l5 -0.6l5 -0.5l5 -0.7l5 -0.6l5 -0.6l5 -0.6l5 -0.6l5 -0.6l5 -0.7l5 -0.6l5 -0.6l5 -0.6l5 -0.7l5 -0.6l5 -0.6l5 -0.6l5 -0.6l5 -0.7V265.5H163Z"/>
<path fill="#fdbbbc" d="M163 289.6l5 0.6l5 0.5l5 0.6l5 0.5l5 0.5l5 0.6l5 0.5l5 0.6l5 0.5l5 0.6l5 0.5l5 0.6l5 0.5l5 0.6l5 0.6l5 0.6l5 0.5l5 0.6l5 0.6l5 0.6l5 0.6l5 0.6l5 0.6l5 0.7l5 0.6l5 0.6l5 0.6l5 0.6l5 0.6l5 0.6l5 0.7l5 0.6l5 0.6l5 0.6l5 0.6l5 0.6l5 0.6l5 0.5l5 0.6l5 0.6l5 0.5l5 0.6l5 0.5l5 0.5l5 0.5l5 0.5l5 0.5l5 0.4l5 0.5l5 0.4l5 0.4l5 0.4l5 0.4l5 0.3l5 0.4l5 0.3l5 0.3l5 0.3l5 0.2l5 0.2l5 0.2l5 0.2l5 0.2l5 0.1l5 0.1l5 0.1l5 0.1l5 0.0l5 0.0l5 0.0l5 0.0l5 -0.1l5 -0.1l5 -0.1l5 -0.1l5 -0.1l5 -0.2l5 -0.2l5 -0.2l5 -0.3l5 -0.3l5 -0.2l5 -0.4l5 -0.3l5 -0.3l5 -0.4l5 -0.4l5 -0.4l5 -0.4l5 -0.5l5 -0.4l5 -0.5l5 -0.5l5 -0.5l5 -0.5l5 -0.5l5 -0.6l5 -0.5l5 -0.6l5 -0.5l5 -0.6l5 -0.6l5 -0.6l5 -0.6l5 -0.6l5 -0.6l5 -0.6l5 -0.6l5 -0.6l5 -0.7l5 -0.6l5 -0.6l5 -0.6l5 -0.6l5 -0.6l5 -0.6l5 -0.7l5 -0.6V265.5H163Z"/>
<path fill="#fca4a4" d="M163 289.0l5 0.6l5 0.5l5 0.5l5 0.6l5 0.5l5 0.5l5 0.6l5 0.5l5 0.6l5 0.5l5 0.5l5 0.6l5 0.6l5 0.5l5 0.6l5 0.6l5 0.6l5 0.5l5 0.6l5 0.6l5 0.6l5 0.6l5 0.6l5 0.6l5 0.6l5 0.6l5 0.6l5 0.7l5 0.6l5 0.6l5 0.6l5 0.6l5 0.6l5 0.6l5 0.5l5 0.6l5 0.6l5 0.6l5 0.5l5 0.6l5 0.5l5 0.5l5 0.6l5 0.5l5 0.5l5 0.4l5 0.5l5 0.4l5 0.5l5 0.4l5 0.4l5 0.4l5 0.3l5 0.4l5 0.3l5 0.3l5 0.3l5 0.3l5 0.2l5 0.2l5 0.2l5 0.2l5 0.2l5 0.1l5 0.1l5 0.1l5 0.0l5 0.1l5 0.0l5 0.0l5 -0.1l5 0.0l5 -0.1l5 -0.1l5 -0.1l5 -0.2l5 -0.1l5 -0.2l5 -0.3l5 -0.2l5 -0.2l5 -0.3l5 -0.3l5 -0.3l5 -0.4l5 -0.3l5 -0.4l5 -0.4l5 -0.4l5 -0.5l5 -0.4l5 -0.5l5 -0.4l5 -0.5l5 -0.5l5 -0.6l5 -0.5l5 -0.5l5 -0.6l5 -0.5l5 -0.6l5 -0.6l5 -0.5l5 -0.6l5 -0.6l5 -0.6l5 -0.6l5 -0.6l5 -0.6l5 -0.6l5 -0.6l5 -0.6l5 -0.7l5 -0.6l5 -0.6l5 -0.6l5 -0.6l5 -0.6V265.5H163Z"/>
<path fill="#fb8b8c" d="M163 288.4l5 0.6l5 0.5l5 0.5l5 0.5l5 0.6l5 0.5l5 0.5l5 0.6l5 0.5l5 0.5l5 0.6l5 0.5l5 0.6l5 0.6l5 0.5l5 0.6l5 0.6l5 0.5l5 0.6l5 0.6l5 0.6l5 0.6l5 0.6l5 0.6l5 0.6l5 0.6l5 0.6l5 0.6l5 0.6l5 0.6l5 0.6l5 0.6l5 0.5l5 0.6l5 0.6l5 0.6l5 0.5l5 0.6l5 0.5l5 0.6l5 0.5l5 0.5l5 0.5l5 0.5l5 0.5l5 0.5l5 0.4l5 0.4l5 0.5l5 0.4l5 0.4l5 0.3l5 0.4l5 0.3l5 0.3l5 0.3l5 0.3l5 0.3l5 0.2l5 0.2l5 0.2l5 0.2l5 0.1l5 0.2l5 0.1l5 0.0l5 0.1l5 0.0l5 0.1l5 -0.1l5 0.0l5 0.0l5 -0.1l5 -0.1l5 -0.1l5 -0.2l5 -0.2l5 -0.1l5 -0.3l5 -0.2l5 -0.2l5 -0.3l5 -0.3l5 -0.3l5 -0.3l5 -0.4l5 -0.4l5 -0.3l5 -0.4l5 -0.5l5 -0.4l5 -0.4l5 -0.5l5 -0.5l5 -0.5l5 -0.5l5 -0.5l5 -0.5l5 -0.6l5 -0.5l5 -0.6l5 -0.5l5 -0.6l5 -0.6l5 -0.5l5 -0.6l5 -0.6l5 -0.6l5 -0.6l5 -0.6l5 -0.6l5 -0.6l5 -0.6l5 -0.6l5 -0.6l5 -0.6l5 -0.6l5 -0.6V265.5H163Z"/>
<path fill="#fa7071" d="M163 287.9l5 0.5l5 0.5l5 0.5l5 0.5l5 0.5l5 0.6l5 0.5l5 0.5l5 0.6l5 0.5l5 0.5l5 0.6l5 0.5l5 0.6l5 0.5l5 0.6l5 0.6l5 0.6l5 0.5l5 0.6l5 0.6l5 0.6l5 0.6l5 0.6l5 0.5l5 0.6l5 0.6l5 0.6l5 0.6l5 0.6l5 0.6l5 0.6l5 0.5l5 0.6l5 0.6l5 0.5l5 0.6l5 0.5l5 0.5l5 0.6l5 0.5l5 0.5l5 0.5l5 0.5l5 0.4l5 0.5l5 0.4l5 0.4l5 0.5l5 0.4l5 0.3l5 0.4l5 0.3l5 0.4l5 0.3l5 0.3l5 0.2l5 0.3l5 0.2l5 0.2l5 0.2l5 0.2l5 0.1l5 0.1l5 0.1l5 0.1l5 0.1l5 0.0l5 0.0l5 0.0l5 0.0l5 -0.1l5 -0.1l5 -0.1l5 -0.1l5 -0.1l5 -0.2l5 -0.2l5 -0.2l5 -0.2l5 -0.2l5 -0.3l5 -0.3l5 -0.3l5 -0.3l5 -0.3l5 -0.4l5 -0.4l5 -0.4l5 -0.4l5 -0.4l5 -0.4l5 -0.5l5 -0.4l5 -0.5l5 -0.5l5 -0.5l5 -0.5l5 -0.5l5 -0.6l5 -0.5l5 -0.6l5 -0.5l5 -0.6l5 -0.6l5 -0.5l5 -0.6l5 -0.6l5 -0.6l5 -0.6l5 -0.6l5 -0.5l5 -0.6l5 -0.6l5 -0.6l5 -0.6l5 -0.6l5 -0.6V265.5H163Z"/>
<path fill="#f95456" d="M163 287.3l5 0.5l5 0.5l5 0.5l5 0.5l5 0.5l5 0.5l5 0.5l5 0.6l5 0.5l5 0.5l5 0.6l5 0.5l5 0.6l5 0.5l5 0.6l5 0.5l5 0.6l5 0.6l5 0.5l5 0.6l5 0.6l5 0.6l5 0.5l5 0.6l5 0.6l5 0.6l5 0.6l5 0.6l5 0.5l5 0.6l5 0.6l5 0.5l5 0.6l5 0.6l5 0.5l5 0.6l5 0.5l5 0.5l5 0.6l5 0.5l5 0.5l5 0.5l5 0.4l5 0.5l5 0.5l5 0.4l5 0.4l5 0.4l5 0.4l5 0.4l5 0.4l5 0.3l5 0.4l5 0.3l5 0.3l5 0.3l5 0.2l5 0.3l5 0.2l5 0.2l5 0.2l5 0.1l5 0.2l5 0.1l5 0.1l5 0.1l5 0.0l5 0.1l5 0.0l5 0.0l5 -0.1l5 0.0l5 -0.1l5 -0.1l5 -0.1l5 -0.1l5 -0.2l5 -0.2l5 -0.2l5 -0.2l5 -0.2l5 -0.3l5 -0.2l5 -0.3l5 -0.4l5 -0.3l5 -0.3l5 -0.4l5 -0.4l5 -0.4l5 -0.4l5 -0.4l5 -0.4l5 -0.5l5 -0.5l5 -0.4l5 -0.5l5 -0.5l5 -0.5l5 -0.6l5 -0.5l5 -0.5l5 -0.6l5 -0.5l5 -0.6l5 -0.5l5 -0.6l5 -0.6l5 -0.6l5 -0.5l5 -0.6l5 -0.6l5 -0.6l5 -0.6l5 -0.5l5 -0.6l5 -0.6l5 -0.6V265.5H163Z"/>
<path fill="#f83739" d="M163 286.7l5 0.5l5 0.5l5 0.5l5 0.5l5 0.5l5 0.5l5 0.5l5 0.5l5 0.5l5 0.6l5 0.5l5 0.6l5 0.5l5 0.5l5 0.6l5 0.6l5 0.5l5 0.6l5 0.5l5 0.6l5 0.6l5 0.6l5 0.5l5 0.6l5 0.6l5 0.5l5 0.6l5 0.6l5 0.6l5 0.5l5 0.6l5 0.5l5 0.6l5 0.5l5 0.6l5 0.5l5 0.5l5 0.6l5 0.5l5 0.5l5 0.5l5 0.4l5 0.5l5 0.5l5 0.4l5 0.4l5 0.4l5 0.4l5 0.4l5 0.4l5 0.4l5 0.3l5 0.3l5 0.3l5 0.3l5 0.3l5 0.2l5 0.3l5 0.2l5 0.2l5 0.2l5 0.1l5 0.2l5 0.1l5 0.1l5 0.0l5 0.1l5 0.0l5 0.0l5 0.0l5 0.0l5 0.0l5 -0.1l5 -0.1l5 -0.1l5 -0.2l5 -0.1l5 -0.2l5 -0.2l5 -0.2l5 -0.2l5 -0.3l5 -0.2l5 -0.3l5 -0.3l5 -0.3l5 -0.4l5 -0.3l5 -0.4l5 -0.4l5 -0.4l5 -0.4l5 -0.4l5 -0.5l5 -0.4l5 -0.5l5 -0.4l5 -0.5l5 -0.5l5 -0.5l5 -0.6l5 -0.5l5 -0.5l5 -0.6l5 -0.5l5 -0.6l5 -0.5l5 -0.6l5 -0.5l5 -0.6l5 -0.6l5 -0.5l5 -0.6l5 -0.6l5 -0.6l5 -0.5l5 -0.6l5 -0.6V265.5H163Z"/>
<path fill="#f7191b" d="M163 286.1l5 0.5l5 0.5l5 0.5l5 0.4l5 0.5l5 0.6l5 0.5l5 0.5l5 0.5l5 0.5l5 0.6l5 0.5l5 0.5l5 0.6l5 0.5l5 0.6l5 0.5l5 0.6l5 0.5l5 0.6l5 0.6l5 0.5l5 0.6l5 0.6l5 0.5l5 0.6l5 0.6l5 0.5l5 0.6l5 0.5l5 0.6l5 0.5l5 0.6l5 0.5l5 0.5l5 0.6l5 0.5l5 0.5l5 0.5l5 0.5l5 0.4l5 0.5l5 0.5l5 0.4l5 0.4l5 0.5l5 0.4l5 0.4l5 0.3l5 0.4l5 0.3l5 0.4l5 0.3l5 0.3l5 0.3l5 0.2l5 0.3l5 0.2l5 0.2l5 0.2l5 0.1l5 0.2l5 0.1l5 0.1l5 0.1l5 0.1l5 0.1l5 0.0l5 0.0l5 0.0l5 0.0l5 -0.1l5 -0.1l5 0.0l5 -0.1l5 -0.2l5 -0.1l5 -0.2l5 -0.2l5 -0.2l5 -0.2l5 -0.2l5 -0.3l5 -0.3l5 -0.3l5 -0.3l5 -0.3l5 -0.3l5 -0.4l5 -0.4l5 -0.4l5 -0.4l5 -0.4l5 -0.4l5 -0.4l5 -0.5l5 -0.5l5 -0.4l5 -0.5l5 -0.5l5 -0.5l5 -0.5l5 -0.6l5 -0.5l5 -0.5l5 -0.6l5 -0.5l5 -0.6l5 -0.5l5 -0.6l5 -0.5l5 -0.6l5 -0.6l5 -0.5l5 -0.6l5 -0.6l5 -0.5l5 -0.6V265.5H163Z"/>
<path fill="#043e80" d="M163 285.5l5 0.5l5 0.5l5 0.4l5 0.5l5 0.5l5 0.5l5 0.5l5 0.5l5 0.5l5 0.6l5 0.5l5 0.5l5 0.6l5 0.5l5 0.5l5 0.6l5 0.5l5 0.6l5 0.5l5 0.6l5 0.6l5 0.5l5 0.6l5 0.5l5 0.6l5 0.5l5 0.6l5 0.6l5 0.5l5 0.5l5 0.6l5 0.5l5 0.6l5 0.5l5 0.5l5 0.5l5 0.5l5 0.5l5 0.5l5 0.5l5 0.4l5 0.5l5 0.4l5 0.5l5 0.4l5 0.4l5 0.4l5 0.4l5 0.3l5 0.4l5 0.3l5 0.3l5 0.3l5 0.3l5 0.3l5 0.2l5 0.3l5 0.2l5 0.2l5 0.2l5 0.1l5 0.2l5 0.1l5 0.1l5 0.1l5 0.1l5 0.0l5 0.1l5 0.0l5 0.0l5 -0.1l5 0.0l5 -0.1l5 -0.1l5 -0.1l5 -0.1l5 -0.1l5 -0.2l5 -0.2l5 -0.2l5 -0.2l5 -0.2l5 -0.3l5 -0.2l5 -0.3l5 -0.3l5 -0.3l5 -0.4l5 -0.3l5 -0.4l5 -0.4l5 -0.3l5 -0.4l5 -0.5l5 -0.4l5 -0.4l5 -0.5l5 -0.4l5 -0.5l5 -0.5l5 -0.5l5 -0.5l5 -0.5l5 -0.5l5 -0.5l5 -0.6l5 -0.5l5 -0.5l5 -0.6l5 -0.5l5 -0.6l5 -0.5l5 -0.6l5 -0.6l5 -0.5l5 -0.6l5 -0.5l5 -0.6V262.5H163Z"/>
<rect x="507" y="95" width="4" height="36" fill="#fff"/>
<rect x="507" y="405" width="4" height="35" fill="#fff"/>
<rect x="507" y="267" width="4" height="1" fill="#b8c4d8"/>
<circle cx="682" cy="198.5" r="4.6" fill="#6a1ee6" stroke="#3a2ad8" stroke-width="1"/>
</svg>
<!-- plot labels -->
<div class="a" style="left:162px;top:94px;width:63px;height:11px;background:#fff"></div>
<div class="a" style="left:162px;top:105px;width:71px;height:11px;background:#fff"></div>
<div class="t" style="left:162px;top:93px;color:#3c9a3c;letter-spacing:-0.35px">t=  0.000000 us</div>
<div class="t" style="left:162px;top:104px;color:#8a2040;letter-spacing:-0.3px">RF  0:  5000.00V</div>
<div class="a" style="left:266px;top:94px;width:65px;height:22px;background:#fff"></div>
<div class="t" style="left:267px;top:93px;letter-spacing:-0.3px">700 of 700 Ions</div>
<div class="t" style="left:267px;top:104px;letter-spacing:-0.3px">700 Ions Flying</div>
<div class="a" style="left:371px;top:94px;width:120px;height:22px;background:#fff"></div>
<div class="t" style="left:372px;top:93px;letter-spacing:-0.2px">&lt;Z&gt; =</div><div class="t" style="left:402px;top:93px;letter-spacing:-0.2px">9.997</div><div class="t" style="left:427px;top:93px;letter-spacing:-0.2px">//</div><div class="t" style="left:439px;top:93px;letter-spacing:-0.2px">0.095</div><div class="t" style="left:467px;top:93px;letter-spacing:-0.4px">[mm]</div>
<div class="t" style="left:372px;top:104px;letter-spacing:-0.2px">&lt;Y&gt; =</div><div class="t" style="left:402px;top:104px;letter-spacing:-0.2px">3.998</div><div class="t" style="left:427px;top:104px;letter-spacing:-0.2px">//</div><div class="t" style="left:439px;top:104px;letter-spacing:-0.2px">0.102</div><div class="t" style="left:467px;top:104px;letter-spacing:-0.4px">[mm]</div>


<!-- controls below plot -->
<div class="btn" style="left:132px;top:445px;width:12px;height:12px;border-radius:2px;border-color:#999;background:linear-gradient(#f6f6f6,#dcdcdc)"></div>
<div class="t" style="left:135px;top:445px;font-size:10px">x</div>
<div class="t" style="left:150px;top:448px;letter-spacing:-0.2px">700 ions</div>
<div class="t" style="left:150px;top:460px;letter-spacing:-0.2px">out of 700</div>
<div class="t" style="left:150px;top:475px;letter-spacing:-0.2px">700 flying</div>

<div class="cb" style="left:225px;top:450px"></div>
<div class="t" style="left:237px;top:449px">keep</div>
<div class="cb" style="left:225px;top:461px"></div>
<svg class="a" style="left:225px;top:461px" width="9" height="9"><path d="M1.5 4.5 L3.5 6.8 L7.5 1.5" stroke="#111" stroke-width="1.5" fill="none"/></svg>
<div class="t" style="left:237px;top:460px">boxes</div>
<div class="cb" style="left:225px;top:472px"></div>
<div class="t" style="left:237px;top:471px;letter-spacing:-0.3px">Record TRJ</div>
<div class="a" style="left:291px;top:467px;width:18px;height:18px;border:1px solid #b4b4b4;border-radius:2px;background:#f6f6f6"></div>
<svg class="a" style="left:294px;top:470px" width="13" height="13" viewBox="0 0 13 13"><rect x="1" y="1" width="7" height="8" fill="#eee" stroke="#777" stroke-width="1"/><path d="M3 7 L4 3 L6 6" stroke="#999" fill="none"/><path d="M7 2 L10 4 L9 6 Z" fill="#666"/><rect x="7" y="7" width="5.5" height="5.5" fill="#777"/><rect x="8" y="10" width="3.5" height="1.8" fill="#ddd"/></svg>

<div class="cb" style="left:582px;top:449px"></div>
<div class="t" style="left:594px;top:447px">Axes</div>
<div class="cb" style="left:582px;top:461px;border-color:#7a8cb4"></div>
<svg class="a" style="left:582px;top:461px" width="9" height="9"><path d="M2 4.5 L3.8 6.8 L7 1.5" stroke="#3050a0" stroke-width="1.1" fill="none"/></svg>
<div class="t" style="left:594px;top:460px;letter-spacing:-0.15px">Proportional</div>
<div class="cb" style="left:582px;top:472px"></div>
<div class="t" style="left:594px;top:471px">Clipped</div>

<div class="cbg" style="left:663px;top:449px"></div>
<div class="t" style="left:675px;top:449px">DC only</div>
<div class="cbg" style="left:663px;top:461px"></div>
<div class="t" style="left:675px;top:460px">Selected</div>
<div class="cbg" style="left:663px;top:473px"></div>
<div class="t" style="left:675px;top:472px;letter-spacing:-0.15px">Color Scale</div>
<div class="t" style="left:733px;top:449px">Level</div>
<div class="a" style="left:734px;top:463px;width:25px;height:17px;background:#fff;border:1px solid #e0e0e0"></div>
<div class="t" style="left:736px;top:466px;color:#2a2a90">100</div>

<!-- bottom panel -->
<div class="a" style="left:126px;top:488px;width:625px;height:1px;background:#a0a0a0"></div>
<div class="a" style="left:126px;top:489px;width:625px;height:48px;background:#fdfdfd"></div>
<div class="a" style="left:126px;top:494px;width:295px;height:42px;background:#f9f9f9;border-right:1px solid #cfcfcf;border-bottom:1px solid #cfcfcf"></div>
<div class="a" style="left:126px;top:536px;width:625px;height:1px;background:#b4b4b4"></div>

<div class="btn" style="left:131px;top:495px;width:47px;height:17px"></div>
<svg class="a" style="left:142px;top:498px" width="9" height="13" viewBox="0 0 9 13"><rect x="0.7" y="0.7" width="7.6" height="11.6" rx="1.5" fill="#c8c8c8" stroke="#404040" stroke-width="1.4"/><rect x="2" y="2.3" width="5" height="1.6" fill="#222"/><circle cx="5" cy="10" r="0.9" fill="#e03040"/><circle cx="6.8" cy="10" r="0.9" fill="#e03040"/></svg>
<div class="t" style="left:156px;top:498px;font-size:11px;color:#111">Fly</div>
<div class="btn" style="left:131px;top:517px;width:96px;height:20px;border:2px solid #4a9ab8"></div>
<svg class="a" style="left:134px;top:520px" width="13" height="14" viewBox="0 0 13 14"><path d="M4.5 9.5 L11.5 1.5" stroke="#c8d818" stroke-width="3"/><path d="M4 10 L8 5.5" stroke="#e81818" stroke-width="3"/><path d="M9 4.5 L12 1.5" stroke="#2a7a2a" stroke-width="1"/><circle cx="3" cy="11.5" r="1.8" fill="none" stroke="#111" stroke-width="1.3"/><path d="M1 13 L6 8 M2 8 L6 12" stroke="#111" stroke-width="1.2"/></svg>
<div class="t" style="left:150px;top:521px;letter-spacing:-0.1px;color:#111">Reset Simulation</div>

<div class="t" style="left:238px;top:501px;letter-spacing:-0.05px">Sample step, ns</div>
<div class="a" style="left:236px;top:514px;width:84px;height:18px;background:#fff;border:1px solid #dcdcdc"></div>
<div class="t" style="left:240px;top:517px;color:#2a2a90">16</div>
<div class="t" style="left:334px;top:501px;letter-spacing:-0.05px">Sample start, ns</div>
<div class="a" style="left:332px;top:514px;width:78px;height:18px;background:#fff;border:1px solid #dcdcdc"></div>
<div class="t" style="left:336px;top:517px">0</div>

<div class="a" style="left:527px;top:496px;width:99px;height:39px;border:1px solid #c4c4c4;background:#fafafa"></div>
<div class="t" style="left:534px;top:500px;font-weight:bold;letter-spacing:-0.3px">tstop [ms]</div>
<div class="a" style="left:532px;top:513px;width:75px;height:19px;background:#fff;border:1px solid #dcdcdc"></div>
<div class="t" style="left:541px;top:517px;color:#2a2a70;letter-spacing:-0.2px">0.0005546875</div>
<svg class="a" style="left:609px;top:517px" width="13" height="11" viewBox="0 0 13 11"><rect x="0.5" y="0.5" width="12" height="10" rx="1" fill="#4a94dc" stroke="#2a6ab8"/><rect x="2" y="2" width="9" height="2" fill="#bfe0ff"/><rect x="2" y="6" width="2" height="2" fill="#1a4a90"/><rect x="5.5" y="6" width="2" height="2" fill="#1a4a90"/><rect x="9" y="6" width="2" height="2" fill="#1a4a90"/></svg>


</body></html>
